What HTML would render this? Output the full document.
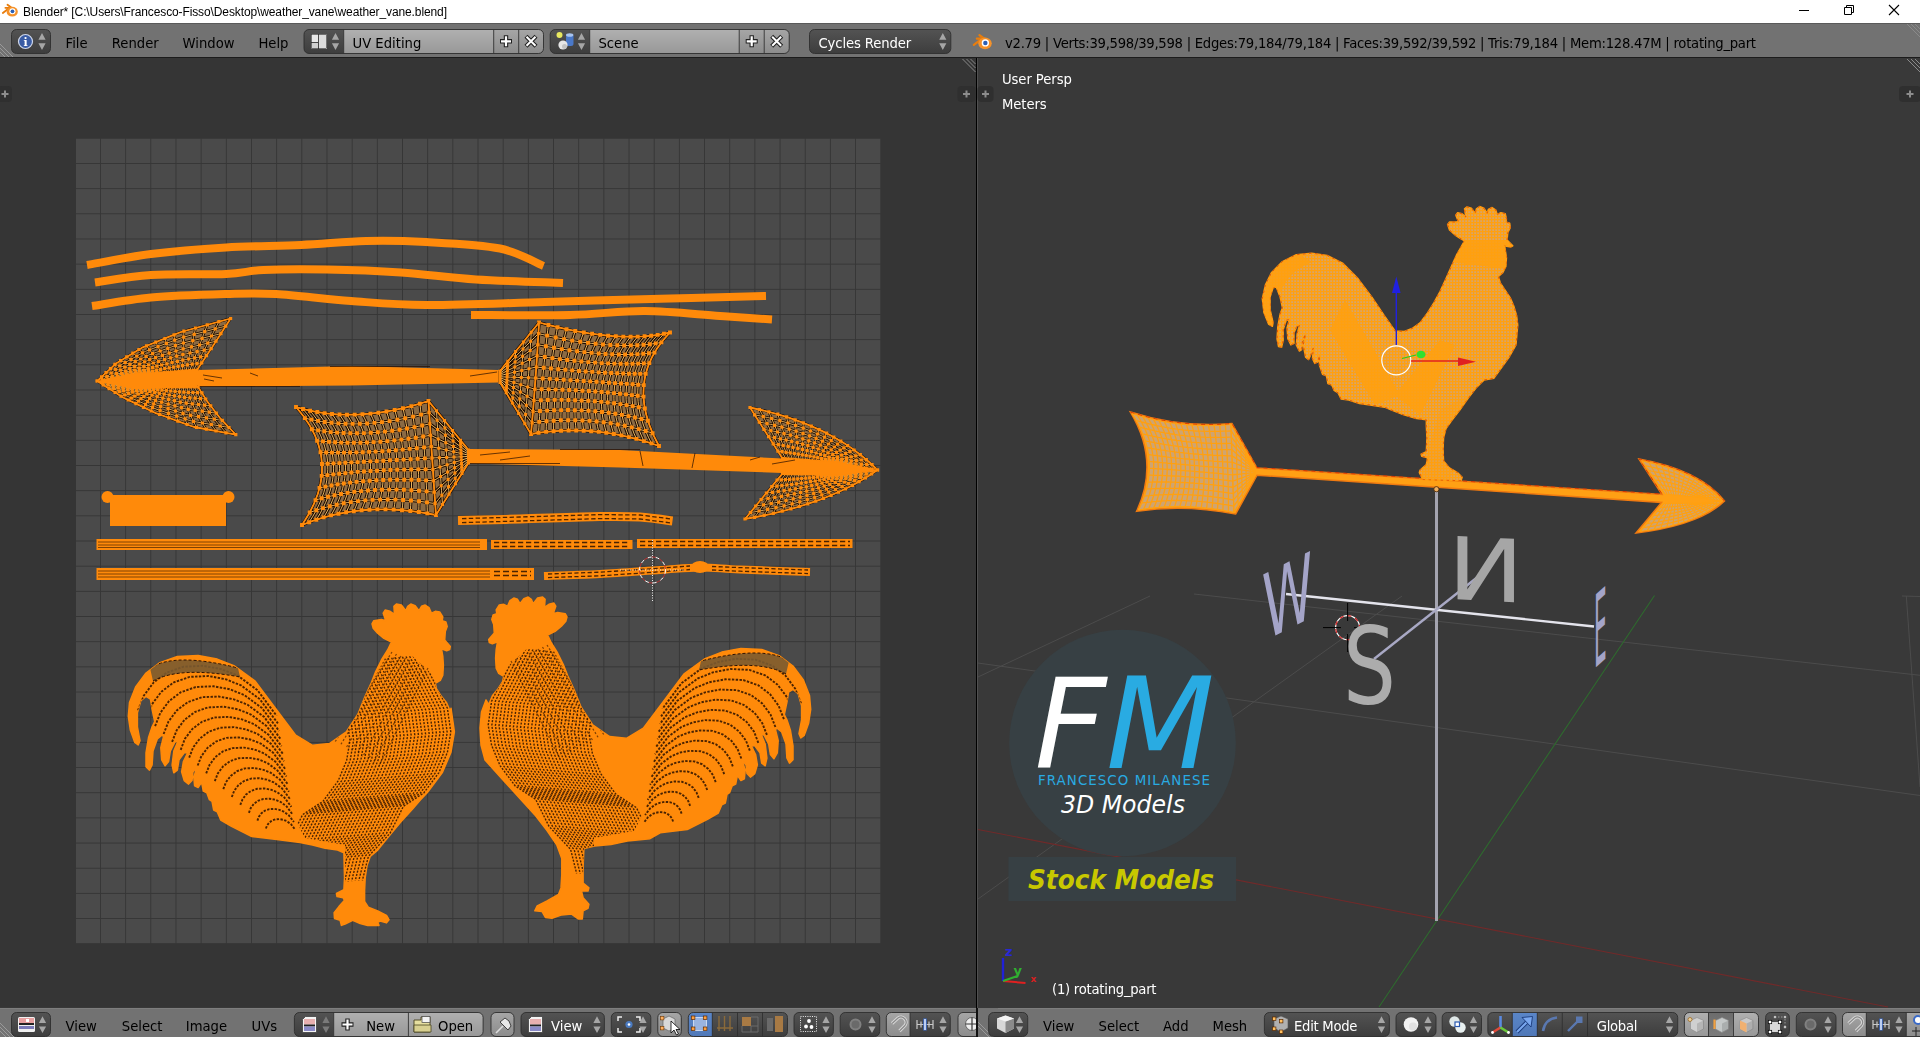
<!DOCTYPE html>
<html><head><meta charset="utf-8"><title>Blender</title>
<style>
html,body{margin:0;padding:0;}
body{width:1920px;height:1037px;overflow:hidden;background:#393939;position:relative;font-family:"DejaVu Sans","Liberation Sans",sans-serif;}
.abs{position:absolute;}
#title{left:0;top:0;width:1920px;height:23px;background:#fff;}
#title .t{position:absolute;left:23px;top:3px;font:12px "Liberation Sans",sans-serif;color:#000;white-space:nowrap;letter-spacing:0.1px}
.hdr{background:#727272;}
.lbl{position:absolute;color:#000;font-size:15px;white-space:nowrap;line-height:24px;letter-spacing:-0.75px;}
.wl{position:absolute;color:#fff;font-size:14px;white-space:nowrap;letter-spacing:-0.55px;}
.btn{position:absolute;height:23px;box-sizing:border-box;border:1px solid #2e2e2e;}
.dk{background:linear-gradient(#505050,#3e3e3e);}
.lt{background:linear-gradient(#a9a9a9,#949494);}
.md{background:linear-gradient(#a0a0a0,#8a8a8a);}
svg{position:absolute;left:0;top:0;}
</style></head><body>

<div id="title" class="abs"></div>
<div class="abs hdr" style="left:0;top:23px;width:1920px;height:34px;border-top:1px solid #5a5a5a;box-sizing:border-box"></div>
<div class="abs" style="left:0;top:57px;width:1920px;height:1px;background:#1c1c1c"></div>
<div class="abs hdr" style="left:0;top:1008px;width:976px;height:29px;"></div>
<div class="abs hdr" style="left:978px;top:1008px;width:942px;height:29px;"></div>
<div class="abs" style="left:0;top:1008px;width:1920px;height:1px;background:#7e7e7e"></div>
<div class="abs" style="left:0;top:58px;width:976px;height:949px;background:#353535"></div>
<div class="abs" style="left:976px;top:58px;width:1px;height:979px;background:#000"></div>
<div class="abs" style="left:977px;top:58px;width:1px;height:979px;background:#505050"></div>
<svg width="1920" height="1037" viewBox="0 0 1920 1037">
<defs>
<pattern id="grid" x="74.8" y="137.8" width="25.17" height="25.17" patternUnits="userSpaceOnUse">
<rect width="25.17" height="25.17" fill="#4a4a4a"/><path d="M0.5 0V25.17M0 0.5H25.17" stroke="#363636" stroke-width="1"/></pattern>
<pattern id="mesh" width="8" height="11" patternUnits="userSpaceOnUse">
<rect width="8" height="11" fill="#8a6a44"/>
<path d="M1.5 0V11M0 1.5H8" stroke="#2a1200" stroke-width="3"/>
<path d="M1.5 0V11M0 1.5H8" stroke="#ffb84a" stroke-width="1"/>
<rect x="0" y="0" width="3.4" height="3.4" fill="#FF8A0A"/></pattern>
<pattern id="mesh2" width="6" height="7" patternUnits="userSpaceOnUse" patternTransform="skewX(-30)">
<rect width="6" height="7" fill="#8a6a44"/>
<path d="M1.5 0V7M0 1.5H6" stroke="#2a1200" stroke-width="2.6"/>
<path d="M1.5 0V7M0 1.5H6" stroke="#ffa030" stroke-width="1.2"/>
<rect x="0" y="0" width="3.2" height="3.2" fill="#FF8A0A"/></pattern>
<pattern id="mesh3" width="6" height="7" patternUnits="userSpaceOnUse" patternTransform="skewX(30)">
<rect width="6" height="7" fill="#8a6a44"/>
<path d="M1.5 0V7M0 1.5H6" stroke="#2a1200" stroke-width="2.6"/>
<path d="M1.5 0V7M0 1.5H6" stroke="#ffa030" stroke-width="1.2"/>
<rect x="0" y="0" width="3.2" height="3.2" fill="#FF8A0A"/></pattern>
<pattern id="speck" width="4.5" height="3.2" patternUnits="userSpaceOnUse" patternTransform="rotate(55)">
<rect x="0" y="0" width="2.6" height="1.1" fill="#2a1000"/></pattern>
<pattern id="speck2" width="3.6" height="4.4" patternUnits="userSpaceOnUse" patternTransform="rotate(-20)">
<rect x="0" y="0" width="2.2" height="1.1" fill="#2a1000"/></pattern>
<pattern id="m3d" width="3" height="3" patternUnits="userSpaceOnUse">
<rect width="3" height="3" fill="#d8a468"/><path d="M0.5 0V3M0 0.5H3" stroke="#ffa010" stroke-width="1.5"/></pattern>
</defs>
<rect x="76" y="138" width="805" height="805.5" fill="url(#grid)"/>
<path d="M87 265C97.7 263.2 127.8 256.9 151 254C174.2 251.1 201.0 249.0 226 247.5C251.0 246.0 277.7 246.1 301 245C324.3 243.9 345.2 241.5 366 241C386.8 240.5 403.7 240.8 426 242C448.3 243.2 480.4 244.5 500 248.5C519.6 252.5 536.2 263.1 543.5 266" fill="none" stroke="#FF8A0A" stroke-width="8" stroke-linejoin="round" />
<path d="M95 282.5C104.3 281.2 129.2 276.4 151 275C172.8 273.6 207.2 274.8 226 274C244.8 273.2 246.8 270.8 263.5 270C280.2 269.2 303.1 269.1 326 269.5C348.9 269.9 376.0 270.8 401 272.5C426.0 274.2 449.0 277.8 476 279.5C503.0 281.2 548.5 282.4 563 283" fill="none" stroke="#FF8A0A" stroke-width="8" stroke-linejoin="round" />
<path d="M92 306C101.8 304.6 128.7 299.5 151 297.5C173.3 295.5 205.2 294.6 226 294C246.8 293.4 255.2 292.8 276 294C296.8 295.2 326.0 299.2 351 301C376.0 302.8 393.7 304.8 426 305C458.3 305.2 504.3 303.1 545 302C585.7 300.9 633.2 299.5 670 298.5C706.8 297.5 750.0 296.4 766 296" fill="none" stroke="#FF8A0A" stroke-width="8" stroke-linejoin="round" />
<path d="M471 315C487.5 315.0 541.0 315.7 570 315C599.0 314.3 620.0 310.8 645 311C670.0 311.2 698.8 314.6 720 316C741.2 317.4 763.3 318.9 772 319.5" fill="none" stroke="#FF8A0A" stroke-width="8" stroke-linejoin="round" />
<polygon points="196,370 351,366 498.5,370 500,376 498.5,382.5 351,385.5 196,386.5" fill="#FF8A0A"/>
<polygon points="97.2,381.0 103.5,375.1 109.7,369.3 116.0,363.4 124.7,358.2 133.3,352.9 142.0,347.7 155.0,342.5 168.0,337.2 181.0,332.0 197.5,327.5 214.1,323.0 230.6,318.5 230.6,318.5 227.8,322.9 224.9,327.3 222.1,331.8 219.3,336.2 216.4,340.6 213.6,345.0 210.8,349.2 208.1,353.3 205.3,357.5 202.5,361.7 199.8,365.8 197.0,370.0 197.0,370.0 191.8,370.4 186.7,370.8 181.5,371.2 176.3,371.7 171.2,372.1 166.0,372.5 160.8,372.9 155.7,373.3 150.5,373.8 145.3,374.2 140.2,374.6 135.0,375.0 135.0,375.0 131.8,375.5 128.7,376.0 125.5,376.5 122.4,377.0 119.2,377.5 116.1,378.0 113.0,378.5 109.8,379.0 106.7,379.5 103.5,380.0 100.4,380.5 97.2,381.0" fill="#8a6a44"/><defs><path id="ms1" d="M97.2 381.0L99.9 380.6L102.6 380.1L105.3 379.7L108.0 379.3L110.7 378.9L113.4 378.4L116.1 378.0L118.8 377.6L121.5 377.1L124.2 376.7L126.9 376.3L129.6 375.9L132.3 375.4L135.0 375.0M101.6 376.9L104.3 376.7L106.9 376.6L109.6 376.4L112.2 376.3L114.8 376.1L117.5 376.0L120.1 375.8L122.8 375.7L125.4 375.5L128.1 375.3L130.7 375.2L133.4 375.0L136.0 374.9L138.6 374.7M106.0 372.7L108.6 372.9L111.2 373.0L113.8 373.1L116.4 373.3L119.0 373.4L121.6 373.5L124.1 373.7L126.7 373.8L129.3 373.9L131.9 374.0L134.5 374.1L137.1 374.2L139.7 374.3L142.3 374.4M110.5 368.6L113.0 369.0L115.5 369.4L118.1 369.8L120.6 370.2L123.1 370.7L125.6 371.1L128.2 371.5L130.7 371.9L133.2 372.2L135.8 372.6L138.3 373.0L140.9 373.4L143.4 373.7L145.9 374.1M114.9 364.4L117.4 365.1L119.8 365.8L122.3 366.5L124.8 367.2L127.3 367.9L129.7 368.6L132.2 369.3L134.7 370.0L137.2 370.6L139.6 371.2L142.1 371.9L144.6 372.5L147.1 373.2L149.6 373.8M120.6 360.6L122.9 361.6L125.2 362.5L127.6 363.5L129.9 364.4L132.2 365.4L134.5 366.3L136.9 367.3L139.2 368.2L141.5 369.1L143.9 370.0L146.2 370.9L148.6 371.7L150.9 372.6L153.2 373.5M126.7 356.9L128.9 358.1L131.0 359.3L133.1 360.5L135.3 361.7L137.4 362.9L139.6 364.1L141.7 365.4L143.9 366.5L146.1 367.6L148.2 368.7L150.4 369.9L152.6 371.0L154.7 372.1L156.9 373.2M132.8 353.2L134.8 354.7L136.8 356.1L138.7 357.6L140.7 359.0L142.7 360.5L144.6 361.9L146.6 363.4L148.6 364.8L150.6 366.1L152.6 367.5L154.6 368.9L156.5 370.2L158.5 371.6L160.5 372.9M138.9 349.5L140.7 351.2L142.5 352.9L144.3 354.6L146.1 356.3L147.9 358.0L149.7 359.7L151.5 361.5L153.3 363.0L155.1 364.6L156.9 366.2L158.7 367.8L160.5 369.4L162.4 371.0L164.2 372.6M146.6 345.9L148.1 347.8L149.6 349.8L151.1 351.7L152.6 353.7L154.1 355.6L155.6 357.6L157.1 359.5L158.6 361.3L160.2 363.2L161.7 365.0L163.2 366.8L164.8 368.7L166.3 370.5L167.8 372.4M155.8 342.2L156.9 344.4L158.0 346.6L159.1 348.8L160.2 351.0L161.3 353.2L162.4 355.4L163.5 357.6L164.6 359.6L165.8 361.7L166.9 363.8L168.1 365.8L169.2 367.9L170.3 370.0L171.5 372.1M164.9 338.5L165.6 340.9L166.4 343.4L167.1 345.8L167.8 348.3L168.5 350.7L169.2 353.2L169.9 355.6L170.6 357.9L171.4 360.2L172.1 362.5L172.9 364.8L173.6 367.1L174.4 369.5L175.1 371.8M174.1 334.8L174.4 337.5L174.7 340.2L175.1 342.9L175.4 345.6L175.7 348.3L176.0 351.0L176.3 353.6L176.7 356.2L177.0 358.7L177.4 361.3L177.7 363.8L178.1 366.4L178.4 368.9L178.8 371.5M183.9 331.2L183.8 334.1L183.7 337.1L183.5 340.0L183.4 343.0L183.3 345.9L183.1 348.8L183.0 351.8L182.9 354.5L182.8 357.3L182.8 360.1L182.7 362.9L182.6 365.6L182.5 368.4L182.4 371.2M195.6 328.0L194.9 331.2L194.2 334.3L193.5 337.5L192.8 340.6L192.1 343.8L191.4 346.9L190.7 350.1L190.0 353.0L189.3 356.0L188.7 359.0L188.0 362.0L187.4 364.9L186.7 367.9L186.1 370.9M207.3 324.9L206.0 328.2L204.7 331.6L203.4 334.9L202.1 338.3L200.9 341.7L199.6 345.0L198.3 348.4L197.1 351.6L195.8 354.7L194.6 357.9L193.4 361.1L192.2 364.2L190.9 367.4L189.7 370.6M218.9 321.7L217.1 325.2L215.2 328.8L213.4 332.4L211.5 336.0L209.7 339.5L207.8 343.1L206.0 346.7L204.2 350.1L202.4 353.4L200.6 356.8L198.8 360.2L197.0 363.6L195.2 366.9L193.4 370.3M230.6 318.5L228.2 322.3L225.7 326.1L223.3 329.9L220.9 333.6L218.5 337.4L216.0 341.2L213.6 345.0L211.2 348.6L208.9 352.1L206.5 355.7L204.1 359.3L201.7 362.9L199.4 366.4L197.0 370.0M97.2 381.0L99.4 378.9L101.6 376.9L103.8 374.8L106.0 372.7L108.3 370.6L110.5 368.6L112.7 366.5L114.9 364.4L117.5 362.5L120.6 360.6L123.6 358.8L126.7 356.9L129.8 355.1L132.8 353.2L135.9 351.4L138.9 349.5L142.0 347.7L146.6 345.9L151.2 344.0L155.8 342.2L160.4 340.3L164.9 338.5L169.5 336.6L174.1 334.8L178.7 332.9L183.9 331.2L189.8 329.6L195.6 328.0L201.4 326.4L207.3 324.9L213.1 323.3L218.9 321.7L224.8 320.1L230.6 318.5M102.6 380.1L104.8 378.4L106.9 376.6L109.1 374.8L111.2 373.0L113.4 371.2L115.5 369.4L117.7 367.6L119.8 365.8L122.4 364.1L125.2 362.5L128.1 360.9L131.0 359.3L133.9 357.7L136.8 356.1L139.6 354.5L142.5 352.9L145.4 351.4L149.6 349.8L153.8 348.2L158.0 346.6L162.2 345.0L166.4 343.4L170.5 341.8L174.7 340.2L178.9 338.6L183.7 337.1L188.9 335.7L194.2 334.3L199.4 333.0L204.7 331.6L210.0 330.2L215.2 328.8L220.5 327.4L225.7 326.1M108.0 379.3L110.1 377.8L112.2 376.3L114.3 374.8L116.4 373.3L118.5 371.7L120.6 370.2L122.7 368.7L124.8 367.2L127.2 365.8L129.9 364.4L132.6 363.1L135.3 361.7L138.0 360.4L140.7 359.0L143.4 357.7L146.1 356.3L148.8 355.0L152.6 353.7L156.4 352.3L160.2 351.0L164.0 349.6L167.8 348.3L171.6 346.9L175.4 345.6L179.2 344.2L183.4 343.0L188.1 341.8L192.8 340.6L197.5 339.5L202.1 338.3L206.8 337.1L211.5 336.0L216.2 334.8L220.9 333.6M113.4 378.4L115.4 377.2L117.5 376.0L119.5 374.7L121.6 373.5L123.6 372.3L125.6 371.1L127.7 369.8L129.7 368.6L132.0 367.4L134.5 366.3L137.1 365.2L139.6 364.1L142.1 363.0L144.6 361.9L147.2 360.8L149.7 359.7L152.2 358.7L155.6 357.6L159.0 356.5L162.4 355.4L165.8 354.3L169.2 353.2L172.6 352.1L176.0 351.0L179.4 349.9L183.1 348.8L187.3 347.9L191.4 346.9L195.5 346.0L199.6 345.0L203.7 344.1L207.8 343.1L211.9 342.2L216.0 341.2M118.8 377.6L120.8 376.6L122.8 375.7L124.8 374.7L126.7 373.8L128.7 372.8L130.7 371.9L132.7 370.9L134.7 370.0L136.8 369.0L139.2 368.2L141.5 367.3L143.9 366.5L146.2 365.6L148.6 364.8L150.9 363.9L153.3 363.0L155.6 362.2L158.6 361.3L161.6 360.5L164.6 359.6L167.6 358.8L170.6 357.9L173.6 357.1L176.7 356.2L179.7 355.3L182.9 354.5L186.5 353.8L190.0 353.0L193.5 352.3L197.1 351.6L200.6 350.8L204.2 350.1L207.7 349.3L211.2 348.6M124.2 376.7L126.1 376.0L128.1 375.3L130.0 374.7L131.9 374.0L133.9 373.3L135.8 372.6L137.7 371.9L139.6 371.2L141.7 370.6L143.9 370.0L146.0 369.3L148.2 368.7L150.4 368.1L152.6 367.5L154.7 366.9L156.9 366.2L159.1 365.6L161.7 365.0L164.3 364.4L166.9 363.8L169.5 363.1L172.1 362.5L174.7 361.9L177.4 361.3L180.0 360.7L182.8 360.1L185.7 359.5L188.7 359.0L191.7 358.4L194.6 357.9L197.6 357.4L200.6 356.8L203.5 356.3L206.5 355.7M129.6 375.9L131.5 375.4L133.4 375.0L135.2 374.6L137.1 374.2L139.0 373.8L140.9 373.4L142.7 372.9L144.6 372.5L146.6 372.1L148.6 371.7L150.6 371.4L152.6 371.0L154.5 370.6L156.5 370.2L158.5 369.8L160.5 369.4L162.5 369.1L164.8 368.7L167.0 368.3L169.2 367.9L171.4 367.5L173.6 367.1L175.8 366.8L178.1 366.4L180.3 366.0L182.6 365.6L185.0 365.3L187.4 364.9L189.8 364.6L192.2 364.2L194.6 363.9L197.0 363.6L199.3 363.2L201.7 362.9M135.0 375.0L136.8 374.9L138.6 374.7L140.5 374.6L142.3 374.4L144.1 374.3L145.9 374.1L147.8 374.0L149.6 373.8L151.4 373.7L153.2 373.5L155.1 373.4L156.9 373.2L158.7 373.1L160.5 372.9L162.4 372.8L164.2 372.6L166.0 372.5L167.8 372.4L169.6 372.2L171.5 372.1L173.3 371.9L175.1 371.8L176.9 371.6L178.8 371.5L180.6 371.3L182.4 371.2L184.2 371.0L186.1 370.9L187.9 370.7L189.7 370.6L191.5 370.4L193.4 370.3L195.2 370.1L197.0 370.0"/></defs><use href="#ms1" fill="none" stroke="#1c0a00" stroke-width="2.6"/><use href="#ms1" fill="none" stroke="#ffcc70" stroke-width="0.8"/><polygon points="97.2,381.0 103.5,375.1 109.7,369.3 116.0,363.4 124.7,358.2 133.3,352.9 142.0,347.7 155.0,342.5 168.0,337.2 181.0,332.0 197.5,327.5 214.1,323.0 230.6,318.5 230.6,318.5 227.8,322.9 224.9,327.3 222.1,331.8 219.3,336.2 216.4,340.6 213.6,345.0 210.8,349.2 208.1,353.3 205.3,357.5 202.5,361.7 199.8,365.8 197.0,370.0 197.0,370.0 191.8,370.4 186.7,370.8 181.5,371.2 176.3,371.7 171.2,372.1 166.0,372.5 160.8,372.9 155.7,373.3 150.5,373.8 145.3,374.2 140.2,374.6 135.0,375.0 135.0,375.0 131.8,375.5 128.7,376.0 125.5,376.5 122.4,377.0 119.2,377.5 116.1,378.0 113.0,378.5 109.8,379.0 106.7,379.5 103.5,380.0 100.4,380.5 97.2,381.0" fill="none" stroke="#FF8A0A" stroke-width="1.8" stroke-linejoin="round"/><path d="M97.2 381.0h0M102.6 380.1h0M108.0 379.3h0M113.4 378.4h0M118.8 377.6h0M124.2 376.7h0M129.6 375.9h0M135.0 375.0h0M101.6 376.9h0M106.9 376.6h0M112.2 376.3h0M117.5 376.0h0M122.8 375.7h0M128.1 375.3h0M133.4 375.0h0M138.6 374.7h0M106.0 372.7h0M111.2 373.0h0M116.4 373.3h0M121.6 373.5h0M126.7 373.8h0M131.9 374.0h0M137.1 374.2h0M142.3 374.4h0M110.5 368.6h0M115.5 369.4h0M120.6 370.2h0M125.6 371.1h0M130.7 371.9h0M135.8 372.6h0M140.9 373.4h0M145.9 374.1h0M114.9 364.4h0M119.8 365.8h0M124.8 367.2h0M129.7 368.6h0M134.7 370.0h0M139.6 371.2h0M144.6 372.5h0M149.6 373.8h0M120.6 360.6h0M125.2 362.5h0M129.9 364.4h0M134.5 366.3h0M139.2 368.2h0M143.9 370.0h0M148.6 371.7h0M153.2 373.5h0M126.7 356.9h0M131.0 359.3h0M135.3 361.7h0M139.6 364.1h0M143.9 366.5h0M148.2 368.7h0M152.6 371.0h0M156.9 373.2h0M132.8 353.2h0M136.8 356.1h0M140.7 359.0h0M144.6 361.9h0M148.6 364.8h0M152.6 367.5h0M156.5 370.2h0M160.5 372.9h0M138.9 349.5h0M142.5 352.9h0M146.1 356.3h0M149.7 359.7h0M153.3 363.0h0M156.9 366.2h0M160.5 369.4h0M164.2 372.6h0M146.6 345.9h0M149.6 349.8h0M152.6 353.7h0M155.6 357.6h0M158.6 361.3h0M161.7 365.0h0M164.8 368.7h0M167.8 372.4h0M155.8 342.2h0M158.0 346.6h0M160.2 351.0h0M162.4 355.4h0M164.6 359.6h0M166.9 363.8h0M169.2 367.9h0M171.5 372.1h0M164.9 338.5h0M166.4 343.4h0M167.8 348.3h0M169.2 353.2h0M170.6 357.9h0M172.1 362.5h0M173.6 367.1h0M175.1 371.8h0M174.1 334.8h0M174.7 340.2h0M175.4 345.6h0M176.0 351.0h0M176.7 356.2h0M177.4 361.3h0M178.1 366.4h0M178.8 371.5h0M183.9 331.2h0M183.7 337.1h0M183.4 343.0h0M183.1 348.8h0M182.9 354.5h0M182.8 360.1h0M182.6 365.6h0M182.4 371.2h0M195.6 328.0h0M194.2 334.3h0M192.8 340.6h0M191.4 346.9h0M190.0 353.0h0M188.7 359.0h0M187.4 364.9h0M186.1 370.9h0M207.3 324.9h0M204.7 331.6h0M202.1 338.3h0M199.6 345.0h0M197.1 351.6h0M194.6 357.9h0M192.2 364.2h0M189.7 370.6h0M218.9 321.7h0M215.2 328.8h0M211.5 336.0h0M207.8 343.1h0M204.2 350.1h0M200.6 356.8h0M197.0 363.6h0M193.4 370.3h0M230.6 318.5h0M225.7 326.1h0M220.9 333.6h0M216.0 341.2h0M211.2 348.6h0M206.5 355.7h0M201.7 362.9h0M197.0 370.0h0" fill="none" stroke="#FF8A0A" stroke-width="3.2" stroke-linecap="square"/>
<polygon points="97.2,381.0 105.6,386.4 114.1,391.8 122.5,397.2 133.3,402.4 144.2,407.6 155.0,412.8 168.0,417.5 181.0,422.3 194.0,427.0 207.9,429.5 221.9,432.1 235.8,434.6 235.8,434.6 231.9,430.5 227.9,426.3 223.9,422.1 220.0,418.0 216.8,413.8 213.5,409.5 210.2,405.2 207.0,401.0 204.8,397.4 202.5,393.9 200.2,390.4 198.0,386.8 198.0,386.8 192.8,386.9 187.5,386.9 182.2,387.0 177.0,387.0 171.8,387.1 166.5,387.1 161.2,387.2 156.0,387.3 150.8,387.3 145.5,387.4 140.2,387.4 135.0,387.5 135.0,387.5 131.8,387.0 128.7,386.4 125.5,385.9 122.4,385.3 119.2,384.8 116.1,384.2 113.0,383.7 109.8,383.2 106.7,382.6 103.5,382.1 100.4,381.5 97.2,381.0" fill="#8a6a44"/><defs><path id="ms2" d="M97.2 381.0L99.9 381.5L102.6 381.9L105.3 382.4L108.0 382.9L110.7 383.3L113.4 383.8L116.1 384.2L118.8 384.7L121.5 385.2L124.2 385.6L126.9 386.1L129.6 386.6L132.3 387.0L135.0 387.5M103.2 384.8L105.7 385.0L108.2 385.2L110.7 385.4L113.1 385.5L115.7 385.7L118.2 385.9L120.7 386.1L123.3 386.2L125.8 386.4L128.4 386.6L131.0 386.8L133.5 387.0L136.1 387.2L138.7 387.5M109.1 388.6L111.4 388.5L113.7 388.4L116.0 388.3L118.3 388.2L120.6 388.1L123.0 388.0L125.4 387.9L127.7 387.8L130.1 387.7L132.5 387.6L135.0 387.5L137.5 387.5L139.9 387.5L142.4 387.4M115.1 392.4L117.2 392.0L119.3 391.7L121.4 391.3L123.4 390.9L125.6 390.5L127.8 390.1L130.0 389.7L132.2 389.3L134.4 388.9L136.7 388.6L139.1 388.3L141.4 388.0L143.8 387.7L146.1 387.4M121.0 396.2L122.9 395.6L124.8 394.9L126.7 394.2L128.6 393.6L130.5 392.9L132.6 392.2L134.6 391.5L136.7 390.8L138.7 390.1L140.9 389.5L143.1 389.0L145.3 388.4L147.6 387.9L149.8 387.3M128.2 400.0L129.8 399.0L131.4 398.1L133.1 397.1L134.7 396.2L136.3 395.2L138.1 394.2L139.9 393.3L141.7 392.3L143.4 391.3L145.4 390.5L147.4 389.7L149.5 388.9L151.5 388.1L153.5 387.3M135.9 403.6L137.2 402.4L138.4 401.2L139.7 400.0L141.0 398.7L142.4 397.5L143.9 396.3L145.4 395.0L146.9 393.8L148.3 392.5L150.0 391.4L151.8 390.4L153.6 389.3L155.4 388.3L157.2 387.3M143.5 407.3L144.5 405.8L145.5 404.3L146.4 402.8L147.4 401.3L148.4 399.8L149.6 398.3L150.8 396.8L152.0 395.2L153.3 393.7L154.7 392.3L156.3 391.1L157.8 389.8L159.4 388.5L160.9 387.2M151.2 411.0L151.8 409.2L152.5 407.4L153.1 405.7L153.7 403.9L154.5 402.1L155.4 400.3L156.3 398.5L157.2 396.7L158.2 394.9L159.3 393.3L160.7 391.7L162.0 390.2L163.3 388.7L164.6 387.2M159.6 414.5L159.9 412.4L160.1 410.4L160.4 408.4L160.6 406.4L161.0 404.3L161.6 402.2L162.2 400.2L162.8 398.1L163.3 396.0L164.2 394.2L165.2 392.4L166.3 390.6L167.3 388.9L168.4 387.1M168.8 417.8L168.6 415.5L168.4 413.3L168.3 411.0L168.1 408.7L168.0 406.4L168.2 404.1L168.4 401.7L168.6 399.4L168.8 397.1L169.3 395.0L170.0 393.0L170.7 391.0L171.4 389.1L172.1 387.1M177.9 421.2L177.3 418.6L176.7 416.1L176.1 413.6L175.5 411.0L175.1 408.5L174.9 405.9L174.7 403.3L174.4 400.7L174.2 398.2L174.4 395.8L174.7 393.6L175.1 391.4L175.4 389.2L175.8 387.0M187.1 424.5L186.1 421.7L185.1 418.9L184.0 416.2L183.0 413.4L182.1 410.6L181.5 407.7L180.9 404.9L180.3 402.1L179.7 399.2L179.5 396.7L179.5 394.3L179.5 391.8L179.5 389.4L179.5 387.0M196.5 427.4L195.0 424.4L193.5 421.4L192.0 418.4L190.6 415.4L189.2 412.4L188.2 409.4L187.2 406.3L186.2 403.2L185.2 400.2L184.6 397.4L184.3 394.8L183.9 392.2L183.5 389.6L183.2 387.0M206.3 429.2L204.3 426.1L202.4 423.0L200.4 419.8L198.5 416.7L196.7 413.5L195.2 410.3L193.8 407.1L192.3 403.9L190.9 400.7L189.9 397.8L189.1 395.1L188.4 392.4L187.6 389.6L186.9 386.9M216.1 431.0L213.7 427.7L211.3 424.5L208.8 421.2L206.4 417.9L204.2 414.6L202.3 411.2L200.4 407.9L198.5 404.5L196.6 401.2L195.2 398.2L194.0 395.4L192.9 392.5L191.7 389.7L190.6 386.9M226.0 432.8L223.1 429.4L220.1 426.0L217.2 422.6L214.3 419.1L211.6 415.7L209.3 412.2L206.9 408.7L204.6 405.2L202.2 401.7L200.4 398.6L198.9 395.6L197.4 392.7L195.8 389.8L194.3 386.8M235.8 434.6L232.4 431.0L229.0 427.5L225.6 423.9L222.3 420.4L219.1 416.8L216.3 413.1L213.5 409.5L210.7 405.9L207.9 402.2L205.7 399.0L203.8 395.9L201.9 392.9L199.9 389.8L198.0 386.8M97.2 381.0L100.2 382.9L103.2 384.8L106.1 386.7L109.1 388.6L112.1 390.5L115.1 392.4L118.0 394.3L121.0 396.2L124.4 398.1L128.2 400.0L132.1 401.8L135.9 403.6L139.7 405.5L143.5 407.3L147.4 409.1L151.2 411.0L155.0 412.8L159.6 414.5L164.2 416.1L168.8 417.8L173.4 419.5L177.9 421.2L182.5 422.8L187.1 424.5L191.7 426.2L196.5 427.4L201.4 428.3L206.3 429.2L211.2 430.1L216.1 431.0L221.0 431.9L226.0 432.8L230.9 433.7L235.8 434.6M102.6 381.9L105.4 383.6L108.2 385.2L110.9 386.8L113.7 388.4L116.5 390.0L119.3 391.7L122.0 393.3L124.8 394.9L127.9 396.5L131.4 398.1L134.9 399.6L138.4 401.2L142.0 402.7L145.5 404.3L149.0 405.9L152.5 407.4L156.0 409.0L160.1 410.4L164.3 411.8L168.4 413.3L172.6 414.7L176.7 416.1L180.9 417.5L185.1 418.9L189.2 420.4L193.5 421.4L198.0 422.2L202.4 423.0L206.8 423.7L211.3 424.5L215.7 425.2L220.1 426.0L224.6 426.7L229.0 427.5M108.0 382.9L110.6 384.2L113.1 385.5L115.7 386.9L118.3 388.2L120.9 389.6L123.4 390.9L126.0 392.2L128.6 393.6L131.5 394.9L134.7 396.2L137.8 397.5L141.0 398.7L144.2 400.0L147.4 401.3L150.6 402.6L153.7 403.9L156.9 405.2L160.6 406.4L164.4 407.5L168.1 408.7L171.8 409.9L175.5 411.0L179.3 412.2L183.0 413.4L186.7 414.6L190.6 415.4L194.5 416.1L198.5 416.7L202.5 417.3L206.4 417.9L210.4 418.5L214.3 419.1L218.3 419.8L222.3 420.4M113.4 383.8L115.8 384.8L118.2 385.9L120.6 386.9L123.0 388.0L125.4 389.0L127.8 390.1L130.2 391.1L132.6 392.2L135.2 393.2L138.1 394.2L141.0 395.3L143.9 396.3L146.7 397.3L149.6 398.3L152.5 399.3L155.4 400.3L158.3 401.3L161.6 402.2L164.9 403.2L168.2 404.1L171.5 405.0L174.9 405.9L178.2 406.8L181.5 407.7L184.8 408.7L188.2 409.4L191.7 409.8L195.2 410.3L198.8 410.8L202.3 411.2L205.8 411.7L209.3 412.2L212.8 412.7L216.3 413.1M118.8 384.7L121.0 385.5L123.3 386.2L125.5 387.0L127.7 387.8L130.0 388.5L132.2 389.3L134.4 390.1L136.7 390.8L139.1 391.6L141.7 392.3L144.3 393.0L146.9 393.8L149.4 394.5L152.0 395.2L154.6 396.0L157.2 396.7L159.8 397.4L162.8 398.1L165.7 398.8L168.6 399.4L171.5 400.1L174.4 400.7L177.4 401.4L180.3 402.1L183.2 402.7L186.2 403.2L189.3 403.6L192.3 403.9L195.4 404.2L198.5 404.5L201.5 404.9L204.6 405.2L207.7 405.5L210.7 405.9M124.2 385.6L126.3 386.1L128.4 386.6L130.4 387.1L132.5 387.6L134.6 388.1L136.7 388.6L138.8 389.0L140.9 389.5L143.1 390.0L145.4 390.5L147.7 390.9L150.0 391.4L152.4 391.9L154.7 392.3L157.0 392.8L159.3 393.3L161.7 393.7L164.2 394.2L166.8 394.6L169.3 395.0L171.8 395.4L174.4 395.8L176.9 396.2L179.5 396.7L182.0 397.1L184.6 397.4L187.2 397.6L189.9 397.8L192.5 398.0L195.2 398.2L197.8 398.4L200.4 398.6L203.1 398.8L205.7 399.0M129.6 386.6L131.6 386.8L133.5 387.0L135.5 387.3L137.5 387.5L139.4 387.7L141.4 388.0L143.4 388.2L145.3 388.4L147.4 388.7L149.5 388.9L151.6 389.1L153.6 389.3L155.7 389.6L157.8 389.8L159.9 390.0L162.0 390.2L164.1 390.4L166.3 390.6L168.5 390.8L170.7 391.0L172.9 391.2L175.1 391.4L177.3 391.6L179.5 391.8L181.7 392.0L183.9 392.2L186.1 392.3L188.4 392.4L190.6 392.4L192.9 392.5L195.1 392.6L197.4 392.7L199.6 392.8L201.9 392.9M135.0 387.5L136.9 387.5L138.7 387.5L140.6 387.4L142.4 387.4L144.3 387.4L146.1 387.4L148.0 387.4L149.8 387.3L151.7 387.3L153.5 387.3L155.4 387.3L157.2 387.3L159.1 387.2L160.9 387.2L162.8 387.2L164.6 387.2L166.5 387.1L168.4 387.1L170.2 387.1L172.1 387.1L173.9 387.1L175.8 387.0L177.6 387.0L179.5 387.0L181.3 387.0L183.2 387.0L185.0 386.9L186.9 386.9L188.7 386.9L190.6 386.9L192.4 386.9L194.3 386.8L196.1 386.8L198.0 386.8"/></defs><use href="#ms2" fill="none" stroke="#1c0a00" stroke-width="2.6"/><use href="#ms2" fill="none" stroke="#ffcc70" stroke-width="0.8"/><polygon points="97.2,381.0 105.6,386.4 114.1,391.8 122.5,397.2 133.3,402.4 144.2,407.6 155.0,412.8 168.0,417.5 181.0,422.3 194.0,427.0 207.9,429.5 221.9,432.1 235.8,434.6 235.8,434.6 231.9,430.5 227.9,426.3 223.9,422.1 220.0,418.0 216.8,413.8 213.5,409.5 210.2,405.2 207.0,401.0 204.8,397.4 202.5,393.9 200.2,390.4 198.0,386.8 198.0,386.8 192.8,386.9 187.5,386.9 182.2,387.0 177.0,387.0 171.8,387.1 166.5,387.1 161.2,387.2 156.0,387.3 150.8,387.3 145.5,387.4 140.2,387.4 135.0,387.5 135.0,387.5 131.8,387.0 128.7,386.4 125.5,385.9 122.4,385.3 119.2,384.8 116.1,384.2 113.0,383.7 109.8,383.2 106.7,382.6 103.5,382.1 100.4,381.5 97.2,381.0" fill="none" stroke="#FF8A0A" stroke-width="1.8" stroke-linejoin="round"/><path d="M97.2 381.0h0M102.6 381.9h0M108.0 382.9h0M113.4 383.8h0M118.8 384.7h0M124.2 385.6h0M129.6 386.6h0M135.0 387.5h0M103.2 384.8h0M108.2 385.2h0M113.1 385.5h0M118.2 385.9h0M123.3 386.2h0M128.4 386.6h0M133.5 387.0h0M138.7 387.5h0M109.1 388.6h0M113.7 388.4h0M118.3 388.2h0M123.0 388.0h0M127.7 387.8h0M132.5 387.6h0M137.5 387.5h0M142.4 387.4h0M115.1 392.4h0M119.3 391.7h0M123.4 390.9h0M127.8 390.1h0M132.2 389.3h0M136.7 388.6h0M141.4 388.0h0M146.1 387.4h0M121.0 396.2h0M124.8 394.9h0M128.6 393.6h0M132.6 392.2h0M136.7 390.8h0M140.9 389.5h0M145.3 388.4h0M149.8 387.3h0M128.2 400.0h0M131.4 398.1h0M134.7 396.2h0M138.1 394.2h0M141.7 392.3h0M145.4 390.5h0M149.5 388.9h0M153.5 387.3h0M135.9 403.6h0M138.4 401.2h0M141.0 398.7h0M143.9 396.3h0M146.9 393.8h0M150.0 391.4h0M153.6 389.3h0M157.2 387.3h0M143.5 407.3h0M145.5 404.3h0M147.4 401.3h0M149.6 398.3h0M152.0 395.2h0M154.7 392.3h0M157.8 389.8h0M160.9 387.2h0M151.2 411.0h0M152.5 407.4h0M153.7 403.9h0M155.4 400.3h0M157.2 396.7h0M159.3 393.3h0M162.0 390.2h0M164.6 387.2h0M159.6 414.5h0M160.1 410.4h0M160.6 406.4h0M161.6 402.2h0M162.8 398.1h0M164.2 394.2h0M166.3 390.6h0M168.4 387.1h0M168.8 417.8h0M168.4 413.3h0M168.1 408.7h0M168.2 404.1h0M168.6 399.4h0M169.3 395.0h0M170.7 391.0h0M172.1 387.1h0M177.9 421.2h0M176.7 416.1h0M175.5 411.0h0M174.9 405.9h0M174.4 400.7h0M174.4 395.8h0M175.1 391.4h0M175.8 387.0h0M187.1 424.5h0M185.1 418.9h0M183.0 413.4h0M181.5 407.7h0M180.3 402.1h0M179.5 396.7h0M179.5 391.8h0M179.5 387.0h0M196.5 427.4h0M193.5 421.4h0M190.6 415.4h0M188.2 409.4h0M186.2 403.2h0M184.6 397.4h0M183.9 392.2h0M183.2 387.0h0M206.3 429.2h0M202.4 423.0h0M198.5 416.7h0M195.2 410.3h0M192.3 403.9h0M189.9 397.8h0M188.4 392.4h0M186.9 386.9h0M216.1 431.0h0M211.3 424.5h0M206.4 417.9h0M202.3 411.2h0M198.5 404.5h0M195.2 398.2h0M192.9 392.5h0M190.6 386.9h0M226.0 432.8h0M220.1 426.0h0M214.3 419.1h0M209.3 412.2h0M204.6 405.2h0M200.4 398.6h0M197.4 392.7h0M194.3 386.8h0M235.8 434.6h0M229.0 427.5h0M222.3 420.4h0M216.3 413.1h0M210.7 405.9h0M205.7 399.0h0M201.9 392.9h0M198.0 386.8h0" fill="none" stroke="#FF8A0A" stroke-width="3.2" stroke-linecap="square"/>
<polygon points="97,381 135,374 197,369.5 197,387.3 135,388.5" fill="#FF8A0A"/>
<polygon points="539.0,322.5 552.2,325.9 565.0,328.9 577.4,331.4 589.3,333.4 600.9,334.9 612.0,336.0 622.7,336.6 633.0,336.7 642.9,336.4 652.3,335.6 661.4,334.3 670.0,332.5 670.0,332.5 662.7,340.7 656.6,349.1 651.7,357.8 647.9,366.7 645.2,375.8 643.8,385.1 643.4,394.7 644.2,404.5 646.2,414.5 649.3,424.8 653.6,435.3 659.0,446.0 659.0,446.0 648.3,442.4 637.7,439.3 627.0,436.6 616.3,434.4 605.7,432.7 595.0,431.5 584.3,430.7 573.7,430.4 563.0,430.6 552.3,431.3 541.7,432.4 531.0,434.0 531.0,434.0 531.8,424.7 532.6,415.3 533.4,406.0 534.1,396.7 534.8,387.4 535.5,378.1 536.2,368.8 536.8,359.6 537.4,350.3 537.9,341.0 538.5,331.8 539.0,322.5" fill="#8a6a44"/><defs><path id="ms3" d="M539.0 322.5L538.7 328.1L538.4 333.6L538.1 339.2L537.7 344.7L537.4 350.3L537.0 355.8L536.7 361.4L536.3 367.0L535.9 372.6L535.5 378.1L535.1 383.7L534.7 389.3L534.3 394.9L533.8 400.4L533.4 406.0L532.9 411.6L532.5 417.2L532.0 422.8L531.5 428.4L531.0 434.0M548.4 325.0L547.7 330.3L547.1 335.6L546.5 341.0L545.9 346.3L545.3 351.7L544.8 357.0L544.2 362.4L543.7 367.8L543.2 373.1L542.7 378.5L542.2 383.9L541.7 389.3L541.3 394.7L540.9 400.2L540.4 405.6L540.0 411.0L539.6 416.5L539.2 421.9L538.9 427.4L538.5 432.8M557.5 327.2L556.6 332.3L555.7 337.5L554.8 342.6L554.0 347.8L553.2 352.9L552.4 358.1L551.7 363.3L551.0 368.5L550.4 373.7L549.8 378.9L549.2 384.2L548.7 389.4L548.3 394.7L547.8 400.0L547.4 405.3L547.1 410.6L546.8 415.9L546.5 421.2L546.3 426.5L546.1 431.9M566.5 329.2L565.2 334.1L564.0 339.1L562.9 344.1L561.8 349.1L560.8 354.1L559.9 359.1L559.0 364.1L558.2 369.2L557.5 374.3L556.8 379.4L556.2 384.5L555.6 389.6L555.1 394.7L554.7 399.9L554.4 405.1L554.1 410.3L553.9 415.5L553.7 420.7L553.6 425.9L553.6 431.2M575.2 331.0L573.7 335.8L572.2 340.6L570.8 345.4L569.5 350.2L568.3 355.1L567.2 360.0L566.2 364.9L565.3 369.8L564.4 374.8L563.7 379.8L563.0 384.8L562.4 389.8L562.0 394.8L561.6 399.9L561.3 405.0L561.1 410.1L560.9 415.2L560.9 420.3L561.0 425.5L561.1 430.7M583.8 332.5L581.9 337.2L580.2 341.8L578.6 346.5L577.1 351.3L575.7 356.0L574.4 360.8L573.2 365.6L572.2 370.4L571.3 375.3L570.5 380.2L569.8 385.1L569.2 390.0L568.7 395.0L568.4 400.0L568.1 405.0L568.0 410.0L568.0 415.1L568.1 420.2L568.3 425.3L568.6 430.5M592.1 333.8L590.0 338.3L588.0 342.9L586.1 347.5L584.4 352.1L582.9 356.8L581.4 361.5L580.1 366.2L579.0 371.0L578.0 375.8L577.1 380.6L576.4 385.4L575.8 390.3L575.4 395.2L575.1 400.2L574.9 405.1L574.9 410.2L575.0 415.2L575.2 420.2L575.6 425.3L576.2 430.5M600.2 334.9L597.8 339.3L595.6 343.8L593.5 348.3L591.6 352.9L589.9 357.5L588.3 362.1L586.9 366.8L585.7 371.5L584.6 376.2L583.7 381.0L583.0 385.8L582.4 390.7L582.0 395.5L581.7 400.5L581.6 405.4L581.7 410.4L582.0 415.4L582.4 420.5L583.0 425.6L583.7 430.7M608.1 335.7L605.5 340.1L603.0 344.5L600.7 349.0L598.7 353.5L596.8 358.0L595.1 362.6L593.6 367.3L592.2 371.9L591.1 376.7L590.2 381.4L589.4 386.2L588.9 391.0L588.5 395.9L588.3 400.8L588.3 405.8L588.5 410.8L588.9 415.8L589.5 420.9L590.3 426.0L591.2 431.2M615.8 336.3L612.9 340.6L610.3 345.0L607.8 349.5L605.5 354.0L603.5 358.5L601.7 363.1L600.1 367.7L598.7 372.4L597.5 377.1L596.5 381.8L595.8 386.6L595.3 391.5L595.0 396.4L594.9 401.3L595.0 406.3L595.3 411.3L595.8 416.4L596.6 421.5L597.6 426.7L598.8 431.9M623.3 336.6L620.2 341.0L617.3 345.3L614.7 349.8L612.2 354.3L610.1 358.8L608.1 363.4L606.4 368.0L605.0 372.7L603.8 377.5L602.8 382.2L602.1 387.1L601.6 392.0L601.3 396.9L601.3 401.9L601.6 406.9L602.0 412.0L602.7 417.1L603.7 422.3L604.9 427.5L606.3 432.8M630.6 336.7L627.3 341.1L624.2 345.5L621.3 349.9L618.8 354.5L616.5 359.0L614.4 363.6L612.7 368.3L611.2 373.0L609.9 377.8L609.0 382.7L608.3 387.5L607.8 392.5L607.6 397.5L607.7 402.5L608.1 407.6L608.7 412.8L609.6 418.0L610.7 423.3L612.1 428.6L613.8 434.0M637.7 336.6L634.1 341.0L630.8 345.4L627.9 349.9L625.1 354.5L622.7 359.1L620.6 363.8L618.8 368.5L617.2 373.3L616.0 378.2L615.0 383.1L614.4 388.0L614.0 393.1L613.9 398.2L614.1 403.3L614.6 408.5L615.3 413.8L616.4 419.1L617.8 424.5L619.4 429.9L621.4 435.4M644.6 336.3L640.8 340.7L637.3 345.2L634.2 349.8L631.4 354.4L628.8 359.1L626.6 363.8L624.7 368.6L623.2 373.5L621.9 378.5L621.0 383.5L620.4 388.5L620.0 393.7L620.0 398.9L620.4 404.1L621.0 409.5L621.9 414.9L623.2 420.3L624.8 425.8L626.7 431.4L628.9 437.1M651.2 335.7L647.3 340.2L643.6 344.8L640.3 349.4L637.4 354.1L634.8 358.9L632.5 363.8L630.6 368.7L629.0 373.7L627.7 378.8L626.8 383.9L626.3 389.1L626.0 394.4L626.1 399.7L626.6 405.1L627.4 410.6L628.5 416.1L630.0 421.7L631.8 427.4L633.9 433.1L636.4 438.9M657.7 334.9L653.5 339.5L649.8 344.2L646.3 348.9L643.3 353.8L640.6 358.7L638.2 363.6L636.3 368.7L634.7 373.8L633.4 379.0L632.6 384.3L632.1 389.6L631.9 395.1L632.2 400.6L632.7 406.1L633.7 411.8L635.0 417.5L636.7 423.3L638.7 429.1L641.2 435.1L643.9 441.1M664.0 333.8L659.6 338.5L655.7 343.4L652.1 348.3L649.0 353.2L646.2 358.3L643.8 363.4L641.8 368.6L640.2 373.9L639.0 379.3L638.2 384.7L637.8 390.2L637.7 395.8L638.1 401.5L638.8 407.3L640.0 413.1L641.5 419.0L643.4 425.0L645.7 431.0L648.4 437.2L651.5 443.4M670.0 332.5L665.5 337.4L661.4 342.4L657.8 347.4L654.5 352.6L651.7 357.8L649.3 363.1L647.3 368.5L645.7 373.9L644.5 379.5L643.8 385.1L643.4 390.8L643.5 396.6L644.0 402.5L644.9 408.5L646.2 414.5L647.9 420.7L650.1 426.9L652.6 433.2L655.6 439.5L659.0 446.0M539.0 322.5L543.7 323.8L548.4 325.0L553.0 326.1L557.5 327.2L562.0 328.2L566.5 329.2L570.9 330.1L575.2 331.0L579.5 331.8L583.8 332.5L587.9 333.2L592.1 333.8L596.2 334.4L600.2 334.9L604.2 335.3L608.1 335.7L612.0 336.0L615.8 336.3L619.6 336.5L623.3 336.6L627.0 336.7L630.6 336.7L634.2 336.7L637.7 336.6L641.2 336.5L644.6 336.3L647.9 336.0L651.2 335.7L654.5 335.3L657.7 334.9L660.9 334.4L664.0 333.8L667.0 333.2L670.0 332.5M538.4 333.6L542.8 334.6L547.1 335.6L551.4 336.6L555.7 337.5L559.9 338.3L564.0 339.1L568.1 339.9L572.2 340.6L576.2 341.2L580.2 341.8L584.1 342.4L588.0 342.9L591.8 343.4L595.6 343.8L599.3 344.2L603.0 344.5L606.7 344.8L610.3 345.0L613.8 345.2L617.3 345.3L620.8 345.4L624.2 345.5L627.5 345.5L630.8 345.4L634.1 345.3L637.3 345.2L640.5 345.0L643.6 344.8L646.7 344.5L649.8 344.2L652.7 343.8L655.7 343.4L658.6 342.9L661.4 342.4M537.7 344.7L541.8 345.5L545.9 346.3L550.0 347.1L554.0 347.8L557.9 348.4L561.8 349.1L565.7 349.7L569.5 350.2L573.3 350.8L577.1 351.3L580.8 351.7L584.4 352.1L588.0 352.5L591.6 352.9L595.2 353.2L598.7 353.5L602.1 353.7L605.5 354.0L608.9 354.1L612.2 354.3L615.5 354.4L618.8 354.5L622.0 354.5L625.1 354.5L628.3 354.5L631.4 354.4L634.4 354.3L637.4 354.1L640.4 354.0L643.3 353.8L646.1 353.5L649.0 353.2L651.8 352.9L654.5 352.6M537.0 355.8L540.9 356.4L544.8 357.0L548.6 357.6L552.4 358.1L556.2 358.6L559.9 359.1L563.6 359.6L567.2 360.0L570.8 360.4L574.4 360.8L577.9 361.2L581.4 361.5L584.9 361.8L588.3 362.1L591.7 362.4L595.1 362.6L598.4 362.9L601.7 363.1L604.9 363.2L608.1 363.4L611.3 363.5L614.4 363.6L617.5 363.7L620.6 363.8L623.6 363.8L626.6 363.8L629.6 363.8L632.5 363.8L635.4 363.7L638.2 363.6L641.1 363.5L643.8 363.4L646.6 363.3L649.3 363.1M536.3 367.0L540.0 367.4L543.7 367.8L547.4 368.1L551.0 368.5L554.6 368.9L558.2 369.2L561.7 369.5L565.3 369.8L568.7 370.1L572.2 370.4L575.6 370.7L579.0 371.0L582.4 371.2L585.7 371.5L589.0 371.7L592.2 371.9L595.5 372.2L598.7 372.4L601.9 372.5L605.0 372.7L608.1 372.9L611.2 373.0L614.2 373.2L617.2 373.3L620.2 373.4L623.2 373.5L626.1 373.6L629.0 373.7L631.8 373.8L634.7 373.8L637.5 373.9L640.2 373.9L643.0 373.9L645.7 373.9M535.5 378.1L539.1 378.3L542.7 378.5L546.3 378.7L549.8 378.9L553.3 379.2L556.8 379.4L560.2 379.6L563.7 379.8L567.1 380.0L570.5 380.2L573.8 380.4L577.1 380.6L580.4 380.8L583.7 381.0L587.0 381.2L590.2 381.4L593.4 381.6L596.5 381.8L599.7 382.0L602.8 382.2L605.9 382.4L609.0 382.7L612.0 382.9L615.0 383.1L618.0 383.3L621.0 383.5L623.9 383.7L626.8 383.9L629.7 384.1L632.6 384.3L635.4 384.5L638.2 384.7L641.0 384.9L643.8 385.1M534.7 389.3L538.2 389.3L541.7 389.3L545.2 389.4L548.7 389.4L552.2 389.5L555.6 389.6L559.0 389.7L562.4 389.8L565.8 389.9L569.2 390.0L572.5 390.2L575.8 390.3L579.1 390.5L582.4 390.7L585.6 390.9L588.9 391.0L592.1 391.3L595.3 391.5L598.4 391.7L601.6 392.0L604.7 392.2L607.8 392.5L610.9 392.8L614.0 393.1L617.0 393.4L620.0 393.7L623.0 394.0L626.0 394.4L629.0 394.7L631.9 395.1L634.8 395.4L637.7 395.8L640.6 396.2L643.5 396.6M533.8 400.4L537.3 400.3L540.9 400.2L544.3 400.1L547.8 400.0L551.3 399.9L554.7 399.9L558.2 399.9L561.6 399.9L565.0 399.9L568.4 400.0L571.7 400.1L575.1 400.2L578.4 400.3L581.7 400.5L585.0 400.6L588.3 400.8L591.6 401.1L594.9 401.3L598.1 401.6L601.3 401.9L604.5 402.2L607.7 402.5L610.9 402.9L614.1 403.3L617.2 403.7L620.4 404.1L623.5 404.6L626.6 405.1L629.7 405.6L632.7 406.1L635.8 406.7L638.8 407.3L641.9 407.9L644.9 408.5M532.9 411.6L536.5 411.3L540.0 411.0L543.5 410.8L547.1 410.6L550.6 410.4L554.1 410.3L557.6 410.1L561.1 410.1L564.5 410.0L568.0 410.0L571.4 410.1L574.9 410.2L578.3 410.3L581.7 410.4L585.1 410.6L588.5 410.8L591.9 411.0L595.3 411.3L598.7 411.6L602.0 412.0L605.4 412.4L608.7 412.8L612.0 413.3L615.3 413.8L618.6 414.3L621.9 414.9L625.2 415.5L628.5 416.1L631.8 416.8L635.0 417.5L638.3 418.2L641.5 419.0L644.7 419.8L647.9 420.7M532.0 422.8L535.6 422.3L539.2 421.9L542.9 421.5L546.5 421.2L550.1 420.9L553.7 420.7L557.3 420.5L560.9 420.3L564.5 420.3L568.1 420.2L571.7 420.2L575.2 420.2L578.8 420.3L582.4 420.5L585.9 420.7L589.5 420.9L593.1 421.2L596.6 421.5L600.1 421.9L603.7 422.3L607.2 422.8L610.7 423.3L614.3 423.9L617.8 424.5L621.3 425.1L624.8 425.8L628.3 426.6L631.8 427.4L635.3 428.2L638.7 429.1L642.2 430.1L645.7 431.0L649.2 432.1L652.6 433.2M531.0 434.0L534.8 433.4L538.5 432.8L542.3 432.3L546.1 431.9L549.8 431.5L553.6 431.2L557.4 430.9L561.1 430.7L564.9 430.6L568.6 430.5L572.4 430.4L576.2 430.5L579.9 430.6L583.7 430.7L587.5 430.9L591.2 431.2L595.0 431.5L598.8 431.9L602.5 432.3L606.3 432.8L610.1 433.4L613.8 434.0L617.6 434.7L621.4 435.4L625.1 436.2L628.9 437.1L632.6 438.0L636.4 438.9L640.2 440.0L643.9 441.1L647.7 442.2L651.5 443.4L655.2 444.7L659.0 446.0"/></defs><use href="#ms3" fill="none" stroke="#1c0a00" stroke-width="3.0"/><use href="#ms3" fill="none" stroke="#ffcc70" stroke-width="0.9"/><polygon points="539.0,322.5 552.2,325.9 565.0,328.9 577.4,331.4 589.3,333.4 600.9,334.9 612.0,336.0 622.7,336.6 633.0,336.7 642.9,336.4 652.3,335.6 661.4,334.3 670.0,332.5 670.0,332.5 662.7,340.7 656.6,349.1 651.7,357.8 647.9,366.7 645.2,375.8 643.8,385.1 643.4,394.7 644.2,404.5 646.2,414.5 649.3,424.8 653.6,435.3 659.0,446.0 659.0,446.0 648.3,442.4 637.7,439.3 627.0,436.6 616.3,434.4 605.7,432.7 595.0,431.5 584.3,430.7 573.7,430.4 563.0,430.6 552.3,431.3 541.7,432.4 531.0,434.0 531.0,434.0 531.8,424.7 532.6,415.3 533.4,406.0 534.1,396.7 534.8,387.4 535.5,378.1 536.2,368.8 536.8,359.6 537.4,350.3 537.9,341.0 538.5,331.8 539.0,322.5" fill="none" stroke="#FF8A0A" stroke-width="1.8" stroke-linejoin="round"/><path d="M539.0 322.5h0M538.4 333.6h0M537.7 344.7h0M537.0 355.8h0M536.3 367.0h0M535.5 378.1h0M534.7 389.3h0M533.8 400.4h0M532.9 411.6h0M532.0 422.8h0M531.0 434.0h0M548.4 325.0h0M547.1 335.6h0M545.9 346.3h0M544.8 357.0h0M543.7 367.8h0M542.7 378.5h0M541.7 389.3h0M540.9 400.2h0M540.0 411.0h0M539.2 421.9h0M538.5 432.8h0M557.5 327.2h0M555.7 337.5h0M554.0 347.8h0M552.4 358.1h0M551.0 368.5h0M549.8 378.9h0M548.7 389.4h0M547.8 400.0h0M547.1 410.6h0M546.5 421.2h0M546.1 431.9h0M566.5 329.2h0M564.0 339.1h0M561.8 349.1h0M559.9 359.1h0M558.2 369.2h0M556.8 379.4h0M555.6 389.6h0M554.7 399.9h0M554.1 410.3h0M553.7 420.7h0M553.6 431.2h0M575.2 331.0h0M572.2 340.6h0M569.5 350.2h0M567.2 360.0h0M565.3 369.8h0M563.7 379.8h0M562.4 389.8h0M561.6 399.9h0M561.1 410.1h0M560.9 420.3h0M561.1 430.7h0M583.8 332.5h0M580.2 341.8h0M577.1 351.3h0M574.4 360.8h0M572.2 370.4h0M570.5 380.2h0M569.2 390.0h0M568.4 400.0h0M568.0 410.0h0M568.1 420.2h0M568.6 430.5h0M592.1 333.8h0M588.0 342.9h0M584.4 352.1h0M581.4 361.5h0M579.0 371.0h0M577.1 380.6h0M575.8 390.3h0M575.1 400.2h0M574.9 410.2h0M575.2 420.2h0M576.2 430.5h0M600.2 334.9h0M595.6 343.8h0M591.6 352.9h0M588.3 362.1h0M585.7 371.5h0M583.7 381.0h0M582.4 390.7h0M581.7 400.5h0M581.7 410.4h0M582.4 420.5h0M583.7 430.7h0M608.1 335.7h0M603.0 344.5h0M598.7 353.5h0M595.1 362.6h0M592.2 371.9h0M590.2 381.4h0M588.9 391.0h0M588.3 400.8h0M588.5 410.8h0M589.5 420.9h0M591.2 431.2h0M615.8 336.3h0M610.3 345.0h0M605.5 354.0h0M601.7 363.1h0M598.7 372.4h0M596.5 381.8h0M595.3 391.5h0M594.9 401.3h0M595.3 411.3h0M596.6 421.5h0M598.8 431.9h0M623.3 336.6h0M617.3 345.3h0M612.2 354.3h0M608.1 363.4h0M605.0 372.7h0M602.8 382.2h0M601.6 392.0h0M601.3 401.9h0M602.0 412.0h0M603.7 422.3h0M606.3 432.8h0M630.6 336.7h0M624.2 345.5h0M618.8 354.5h0M614.4 363.6h0M611.2 373.0h0M609.0 382.7h0M607.8 392.5h0M607.7 402.5h0M608.7 412.8h0M610.7 423.3h0M613.8 434.0h0M637.7 336.6h0M630.8 345.4h0M625.1 354.5h0M620.6 363.8h0M617.2 373.3h0M615.0 383.1h0M614.0 393.1h0M614.1 403.3h0M615.3 413.8h0M617.8 424.5h0M621.4 435.4h0M644.6 336.3h0M637.3 345.2h0M631.4 354.4h0M626.6 363.8h0M623.2 373.5h0M621.0 383.5h0M620.0 393.7h0M620.4 404.1h0M621.9 414.9h0M624.8 425.8h0M628.9 437.1h0M651.2 335.7h0M643.6 344.8h0M637.4 354.1h0M632.5 363.8h0M629.0 373.7h0M626.8 383.9h0M626.0 394.4h0M626.6 405.1h0M628.5 416.1h0M631.8 427.4h0M636.4 438.9h0M657.7 334.9h0M649.8 344.2h0M643.3 353.8h0M638.2 363.6h0M634.7 373.8h0M632.6 384.3h0M631.9 395.1h0M632.7 406.1h0M635.0 417.5h0M638.7 429.1h0M643.9 441.1h0M664.0 333.8h0M655.7 343.4h0M649.0 353.2h0M643.8 363.4h0M640.2 373.9h0M638.2 384.7h0M637.7 395.8h0M638.8 407.3h0M641.5 419.0h0M645.7 431.0h0M651.5 443.4h0M670.0 332.5h0M661.4 342.4h0M654.5 352.6h0M649.3 363.1h0M645.7 373.9h0M643.8 385.1h0M643.5 396.6h0M644.9 408.5h0M647.9 420.7h0M652.6 433.2h0M659.0 446.0h0" fill="none" stroke="#FF8A0A" stroke-width="3.9" stroke-linecap="square"/>
<polygon points="500.0,371.0 503.2,367.0 506.5,362.9 509.8,358.9 513.0,354.8 516.2,350.8 519.5,346.8 522.8,342.7 526.0,338.7 529.2,334.6 532.5,330.6 535.8,326.5 539.0,322.5 539.0,322.5 538.5,331.8 537.9,341.0 537.4,350.3 536.8,359.6 536.2,368.8 535.5,378.1 534.8,387.4 534.1,396.7 533.4,406.0 532.6,415.3 531.8,424.7 531.0,434.0 531.0,434.0 528.4,429.7 525.8,425.4 523.2,421.1 520.7,416.8 518.1,412.5 515.5,408.2 512.9,404.0 510.3,399.7 507.8,395.4 505.2,391.1 502.6,386.8 500.0,382.5 500.0,382.5 500.0,381.5 500.0,380.6 500.0,379.6 500.0,378.7 500.0,377.7 500.0,376.8 500.0,375.8 500.0,374.8 500.0,373.9 500.0,372.9 500.0,372.0 500.0,371.0" fill="#8a6a44"/><defs><path id="ms4" d="M500.0 371.0L500.0 371.6L500.0 372.1L500.0 372.7L500.0 373.3L500.0 373.9L500.0 374.4L500.0 375.0L500.0 375.6L500.0 376.2L500.0 376.8L500.0 377.3L500.0 377.9L500.0 378.5L500.0 379.1L500.0 379.6L500.0 380.2L500.0 380.8L500.0 381.4L500.0 381.9L500.0 382.5M507.8 361.3L507.7 362.9L507.7 364.4L507.6 366.0L507.5 367.6L507.5 369.2L507.4 370.7L507.3 372.3L507.3 373.9L507.2 375.5L507.1 377.0L507.0 378.6L506.9 380.2L506.9 381.8L506.8 383.3L506.7 384.9L506.6 386.5L506.5 388.1L506.4 389.6L506.3 391.2L506.2 392.8M515.6 351.6L515.5 354.2L515.4 356.7L515.2 359.3L515.1 361.9L515.0 364.4L514.8 367.0L514.7 369.6L514.5 372.2L514.4 374.7L514.2 377.3L514.0 379.9L513.9 382.5L513.7 385.0L513.5 387.6L513.3 390.2L513.2 392.8L513.0 395.3L512.8 397.9L512.6 400.5L512.4 403.1M523.4 341.9L523.2 345.5L523.0 349.0L522.8 352.6L522.6 356.2L522.4 359.7L522.2 363.3L522.0 366.9L521.8 370.4L521.5 374.0L521.3 377.6L521.1 381.2L520.8 384.7L520.6 388.3L520.3 391.9L520.0 395.5L519.8 399.1L519.5 402.6L519.2 406.2L518.9 409.8L518.6 413.4M531.2 332.2L531.0 336.8L530.7 341.3L530.4 345.9L530.2 350.4L529.9 355.0L529.6 359.6L529.3 364.1L529.0 368.7L528.7 373.3L528.4 377.8L528.1 382.4L527.7 387.0L527.4 391.6L527.1 396.2L526.7 400.8L526.3 405.3L526.0 409.9L525.6 414.5L525.2 419.1L524.8 423.7M539.0 322.5L538.7 328.1L538.4 333.6L538.1 339.2L537.7 344.7L537.4 350.3L537.0 355.8L536.7 361.4L536.3 367.0L535.9 372.6L535.5 378.1L535.1 383.7L534.7 389.3L534.3 394.9L533.8 400.4L533.4 406.0L532.9 411.6L532.5 417.2L532.0 422.8L531.5 428.4L531.0 434.0M500.0 371.0L503.9 366.1L507.8 361.3L511.7 356.4L515.6 351.6L519.5 346.8L523.4 341.9L527.3 337.1L531.2 332.2L535.1 327.4L539.0 322.5M500.0 372.1L503.8 368.3L507.7 364.4L511.5 360.6L515.4 356.7L519.2 352.9L523.0 349.0L526.9 345.2L530.7 341.3L534.5 337.5L538.4 333.6M500.0 373.3L503.8 370.4L507.5 367.6L511.3 364.7L515.1 361.9L518.9 359.0L522.6 356.2L526.4 353.3L530.2 350.4L533.9 347.6L537.7 344.7M500.0 374.4L503.7 372.6L507.4 370.7L511.1 368.9L514.8 367.0L518.5 365.1L522.2 363.3L525.9 361.4L529.6 359.6L533.3 357.7L537.0 355.8M500.0 375.6L503.6 374.7L507.3 373.9L510.9 373.0L514.5 372.2L518.1 371.3L521.8 370.4L525.4 369.6L529.0 368.7L532.7 367.8L536.3 367.0M500.0 376.8L503.5 376.9L507.1 377.0L510.6 377.2L514.2 377.3L517.8 377.4L521.3 377.6L524.8 377.7L528.4 377.8L532.0 378.0L535.5 378.1M500.0 377.9L503.5 379.0L506.9 380.2L510.4 381.3L513.9 382.5L517.3 383.6L520.8 384.7L524.3 385.9L527.7 387.0L531.2 388.1L534.7 389.3M500.0 379.1L503.4 381.2L506.8 383.3L510.1 385.5L513.5 387.6L516.9 389.7L520.3 391.9L523.7 394.0L527.1 396.2L530.4 398.3L533.8 400.4M500.0 380.2L503.3 383.3L506.6 386.5L509.9 389.6L513.2 392.8L516.5 395.9L519.8 399.1L523.0 402.2L526.3 405.3L529.6 408.5L532.9 411.6M500.0 381.4L503.2 385.5L506.4 389.6L509.6 393.8L512.8 397.9L516.0 402.1L519.2 406.2L522.4 410.4L525.6 414.5L528.8 418.7L532.0 422.8M500.0 382.5L503.1 387.6L506.2 392.8L509.3 398.0L512.4 403.1L515.5 408.2L518.6 413.4L521.7 418.6L524.8 423.7L527.9 428.9L531.0 434.0"/></defs><use href="#ms4" fill="none" stroke="#1c0a00" stroke-width="3.0"/><use href="#ms4" fill="none" stroke="#ffcc70" stroke-width="0.9"/><polygon points="500.0,371.0 503.2,367.0 506.5,362.9 509.8,358.9 513.0,354.8 516.2,350.8 519.5,346.8 522.8,342.7 526.0,338.7 529.2,334.6 532.5,330.6 535.8,326.5 539.0,322.5 539.0,322.5 538.5,331.8 537.9,341.0 537.4,350.3 536.8,359.6 536.2,368.8 535.5,378.1 534.8,387.4 534.1,396.7 533.4,406.0 532.6,415.3 531.8,424.7 531.0,434.0 531.0,434.0 528.4,429.7 525.8,425.4 523.2,421.1 520.7,416.8 518.1,412.5 515.5,408.2 512.9,404.0 510.3,399.7 507.8,395.4 505.2,391.1 502.6,386.8 500.0,382.5 500.0,382.5 500.0,381.5 500.0,380.6 500.0,379.6 500.0,378.7 500.0,377.7 500.0,376.8 500.0,375.8 500.0,374.8 500.0,373.9 500.0,372.9 500.0,372.0 500.0,371.0" fill="none" stroke="#FF8A0A" stroke-width="1.8" stroke-linejoin="round"/><path d="M500.0 371.0h0M500.0 372.1h0M500.0 373.3h0M500.0 374.4h0M500.0 375.6h0M500.0 376.8h0M500.0 377.9h0M500.0 379.1h0M500.0 380.2h0M500.0 381.4h0M500.0 382.5h0M507.8 361.3h0M507.7 364.4h0M507.5 367.6h0M507.4 370.7h0M507.3 373.9h0M507.1 377.0h0M506.9 380.2h0M506.8 383.3h0M506.6 386.5h0M506.4 389.6h0M506.2 392.8h0M515.6 351.6h0M515.4 356.7h0M515.1 361.9h0M514.8 367.0h0M514.5 372.2h0M514.2 377.3h0M513.9 382.5h0M513.5 387.6h0M513.2 392.8h0M512.8 397.9h0M512.4 403.1h0M523.4 341.9h0M523.0 349.0h0M522.6 356.2h0M522.2 363.3h0M521.8 370.4h0M521.3 377.6h0M520.8 384.7h0M520.3 391.9h0M519.8 399.1h0M519.2 406.2h0M518.6 413.4h0M531.2 332.2h0M530.7 341.3h0M530.2 350.4h0M529.6 359.6h0M529.0 368.7h0M528.4 377.8h0M527.7 387.0h0M527.1 396.2h0M526.3 405.3h0M525.6 414.5h0M524.8 423.7h0M539.0 322.5h0M538.4 333.6h0M537.7 344.7h0M537.0 355.8h0M536.3 367.0h0M535.5 378.1h0M534.7 389.3h0M533.8 400.4h0M532.9 411.6h0M532.0 422.8h0M531.0 434.0h0" fill="none" stroke="#FF8A0A" stroke-width="3.0" stroke-linecap="square"/>
<polygon points="296.0,407.0 305.9,409.7 316.1,411.8 326.4,413.4 336.9,414.3 347.7,414.7 358.6,414.5 369.8,413.7 381.1,412.3 392.7,410.4 404.4,407.8 416.4,404.7 428.5,401.0 428.5,401.0 429.1,410.5 429.7,420.0 430.3,429.5 430.9,439.0 431.5,448.5 432.1,458.0 432.8,467.5 433.4,477.0 434.0,486.5 434.7,496.0 435.3,505.5 436.0,515.0 436.0,515.0 423.8,512.8 411.7,511.1 399.9,510.0 388.2,509.4 376.8,509.4 365.5,510.0 354.4,511.1 343.6,512.8 332.9,515.0 322.4,517.8 312.1,521.1 302.0,525.0 302.0,525.0 308.5,514.6 313.8,504.2 317.8,494.0 320.4,483.9 321.9,473.9 322.0,464.0 320.9,454.2 318.4,444.6 314.8,435.0 309.8,425.6 303.5,416.2 296.0,407.0" fill="#8a6a44"/><defs><path id="ms5" d="M296.0 407.0L300.7 412.5L304.9 418.1L308.6 423.7L311.9 429.3L314.8 435.0L317.1 440.7L319.0 446.5L320.5 452.3L321.5 458.1L322.0 464.0L322.1 469.9L321.7 475.9L320.8 481.9L319.5 487.9L317.8 494.0L315.5 500.1L312.8 506.3L309.7 512.5L306.1 518.7L302.0 525.0M303.0 409.0L307.4 414.3L311.4 419.6L314.9 425.0L318.1 430.4L320.8 435.9L323.0 441.4L324.8 446.9L326.2 452.5L327.2 458.1L327.7 463.7L327.8 469.4L327.4 475.1L326.7 480.9L325.4 486.6L323.8 492.5L321.7 498.3L319.2 504.3L316.3 510.2L312.9 516.2L309.1 522.2M310.1 410.7L314.2 415.8L318.0 420.9L321.4 426.1L324.3 431.3L326.8 436.6L329.0 441.9L330.7 447.2L332.0 452.6L333.0 458.0L333.5 463.4L333.6 468.9L333.3 474.4L332.6 479.9L331.5 485.5L330.0 491.1L328.0 496.7L325.7 502.4L323.0 508.1L319.9 513.9L316.3 519.7M317.3 412.0L321.2 417.0L324.7 422.0L327.9 427.0L330.7 432.1L333.0 437.2L335.1 442.3L336.7 447.4L338.0 452.6L338.9 457.8L339.4 463.1L339.5 468.4L339.2 473.7L338.6 479.0L337.6 484.4L336.2 489.8L334.5 495.3L332.3 500.8L329.8 506.3L326.9 511.8L323.6 517.4M324.6 413.1L328.2 418.0L331.5 422.8L334.5 427.7L337.1 432.6L339.3 437.6L341.2 442.6L342.8 447.6L344.0 452.6L344.9 457.7L345.3 462.8L345.5 467.9L345.3 473.1L344.7 478.3L343.8 483.5L342.6 488.7L341.0 494.0L339.0 499.3L336.7 504.7L334.0 510.0L331.0 515.4M332.0 414.0L335.4 418.7L338.4 423.4L341.2 428.2L343.6 433.0L345.7 437.8L347.5 442.7L349.0 447.6L350.1 452.5L350.9 457.5L351.4 462.4L351.6 467.4L351.4 472.5L351.0 477.5L350.1 482.6L349.0 487.7L347.6 492.9L345.8 498.1L343.7 503.3L341.3 508.5L338.5 513.8M339.5 414.5L342.6 419.1L345.5 423.8L348.0 428.5L350.3 433.2L352.2 438.0L353.9 442.7L355.3 447.5L356.4 452.4L357.1 457.2L357.6 462.1L357.8 467.0L357.7 471.9L357.3 476.9L356.6 481.9L355.6 486.9L354.3 491.9L352.7 497.0L350.8 502.1L348.6 507.2L346.1 512.3M347.0 414.7L349.9 419.3L352.6 423.9L354.9 428.6L357.0 433.2L358.8 437.9L360.4 442.7L361.7 447.4L362.7 452.2L363.4 457.0L363.9 461.8L364.1 466.6L364.0 471.5L363.7 476.4L363.1 481.3L362.2 486.2L361.1 491.1L359.6 496.1L358.0 501.1L356.0 506.1L353.8 511.2M354.7 414.6L357.4 419.2L359.8 423.8L361.9 428.5L363.9 433.1L365.5 437.8L367.0 442.5L368.2 447.2L369.1 451.9L369.8 456.7L370.3 461.4L370.5 466.2L370.5 471.0L370.2 475.9L369.7 480.7L369.0 485.6L368.0 490.5L366.7 495.4L365.3 500.4L363.5 505.3L361.6 510.3M362.5 414.3L364.9 418.9L367.1 423.5L369.1 428.1L370.8 432.8L372.3 437.4L373.6 442.1L374.7 446.8L375.6 451.6L376.3 456.3L376.8 461.1L377.0 465.9L377.0 470.7L376.8 475.5L376.4 480.3L375.8 485.2L375.0 490.0L373.9 494.9L372.6 499.9L371.2 504.8L369.5 509.7M370.4 413.6L372.6 418.3L374.5 422.9L376.3 427.6L377.8 432.3L379.2 437.0L380.4 441.7L381.4 446.4L382.3 451.2L382.9 455.9L383.3 460.7L383.6 465.5L383.7 470.3L383.5 475.2L383.2 480.0L382.7 484.9L382.0 489.7L381.2 494.6L380.1 499.6L378.9 504.5L377.4 509.4M378.4 412.7L380.3 417.4L382.0 422.1L383.6 426.9L385.0 431.6L386.2 436.4L387.3 441.1L388.2 445.9L389.0 450.7L389.6 455.5L390.0 460.3L390.3 465.2L390.4 470.0L390.3 474.9L390.1 479.8L389.8 484.7L389.2 489.6L388.5 494.5L387.7 499.5L386.7 504.4L385.5 509.4M386.5 411.5L388.1 416.3L389.6 421.1L391.0 425.9L392.2 430.7L393.3 435.6L394.3 440.4L395.1 445.3L395.8 450.2L396.4 455.1L396.8 460.0L397.1 464.9L397.2 469.8L397.3 474.7L397.1 479.7L396.9 484.7L396.5 489.6L396.0 494.6L395.4 499.6L394.6 504.6L393.7 509.6M394.7 410.0L396.1 414.9L397.4 419.8L398.5 424.8L399.6 429.7L400.5 434.7L401.4 439.6L402.1 444.6L402.7 449.6L403.2 454.6L403.6 459.6L404.0 464.6L404.2 469.6L404.3 474.7L404.2 479.7L404.1 484.8L403.9 489.8L403.6 494.9L403.1 500.0L402.6 505.1L402.0 510.2M403.0 408.2L404.1 413.2L405.2 418.3L406.1 423.4L407.0 428.5L407.8 433.6L408.5 438.7L409.2 443.8L409.7 448.9L410.2 454.1L410.6 459.2L410.9 464.3L411.2 469.5L411.4 474.7L411.4 479.8L411.5 485.0L411.4 490.2L411.2 495.4L411.0 500.5L410.7 505.7L410.3 511.0M411.4 406.1L412.3 411.3L413.1 416.6L413.8 421.8L414.5 427.1L415.2 432.4L415.8 437.7L416.3 442.9L416.8 448.2L417.3 453.5L417.7 458.8L418.0 464.1L418.3 469.4L418.6 474.7L418.7 480.0L418.9 485.4L419.0 490.7L419.0 496.0L419.0 501.3L418.9 506.7L418.8 512.0M419.9 403.7L420.5 409.1L421.1 414.6L421.6 420.1L422.2 425.5L422.7 431.0L423.2 436.5L423.6 442.0L424.1 447.4L424.5 452.9L424.9 458.4L425.2 463.9L425.6 469.4L425.9 474.9L426.1 480.4L426.4 485.9L426.6 491.4L426.9 496.9L427.0 502.4L427.2 507.9L427.3 513.4M428.5 401.0L428.9 406.7L429.2 412.4L429.6 418.1L429.9 423.8L430.3 429.5L430.6 435.2L431.0 440.9L431.4 446.6L431.8 452.3L432.1 458.0L432.5 463.7L432.9 469.4L433.3 475.1L433.6 480.8L434.0 486.5L434.4 492.2L434.8 497.9L435.2 503.6L435.6 509.3L436.0 515.0M296.0 407.0L299.5 408.0L303.0 409.0L306.5 409.8L310.1 410.7L313.7 411.4L317.3 412.0L320.9 412.6L324.6 413.1L328.3 413.6L332.0 414.0L335.7 414.3L339.5 414.5L343.2 414.6L347.0 414.7L350.9 414.7L354.7 414.6L358.6 414.5L362.5 414.3L366.5 414.0L370.4 413.6L374.4 413.2L378.4 412.7L382.5 412.1L386.5 411.5L390.6 410.8L394.7 410.0L398.8 409.1L403.0 408.2L407.2 407.2L411.4 406.1L415.6 404.9L419.9 403.7L424.2 402.4L428.5 401.0M304.9 418.1L308.1 418.9L311.4 419.6L314.7 420.3L318.0 420.9L321.4 421.5L324.7 422.0L328.1 422.4L331.5 422.8L335.0 423.2L338.4 423.4L341.9 423.6L345.5 423.8L349.0 423.9L352.6 423.9L356.2 423.9L359.8 423.8L363.4 423.7L367.1 423.5L370.8 423.2L374.5 422.9L378.3 422.6L382.0 422.1L385.8 421.6L389.6 421.1L393.5 420.5L397.4 419.8L401.2 419.1L405.2 418.3L409.1 417.5L413.1 416.6L417.1 415.6L421.1 414.6L425.1 413.5L429.2 412.4M311.9 429.3L315.0 429.9L318.1 430.4L321.2 430.9L324.3 431.3L327.5 431.7L330.7 432.1L333.9 432.4L337.1 432.6L340.4 432.8L343.6 433.0L346.9 433.1L350.3 433.2L353.6 433.3L357.0 433.2L360.4 433.2L363.9 433.1L367.3 433.0L370.8 432.8L374.3 432.5L377.8 432.3L381.4 432.0L385.0 431.6L388.6 431.2L392.2 430.7L395.9 430.2L399.6 429.7L403.3 429.1L407.0 428.5L410.8 427.8L414.5 427.1L418.3 426.3L422.2 425.5L426.0 424.7L429.9 423.8M317.1 440.7L320.0 441.1L323.0 441.4L326.0 441.6L329.0 441.9L332.0 442.1L335.1 442.3L338.1 442.4L341.2 442.6L344.4 442.6L347.5 442.7L350.7 442.7L353.9 442.7L357.1 442.7L360.4 442.7L363.7 442.6L367.0 442.5L370.3 442.3L373.6 442.1L377.0 441.9L380.4 441.7L383.8 441.4L387.3 441.1L390.8 440.8L394.3 440.4L397.8 440.0L401.4 439.6L404.9 439.2L408.5 438.7L412.2 438.2L415.8 437.7L419.5 437.1L423.2 436.5L426.9 435.9L430.6 435.2M320.5 452.3L323.3 452.4L326.2 452.5L329.1 452.5L332.0 452.6L335.0 452.6L338.0 452.6L341.0 452.6L344.0 452.6L347.1 452.6L350.1 452.5L353.2 452.5L356.4 452.4L359.5 452.3L362.7 452.2L365.9 452.0L369.1 451.9L372.4 451.7L375.6 451.6L378.9 451.4L382.3 451.2L385.6 450.9L389.0 450.7L392.4 450.5L395.8 450.2L399.2 449.9L402.7 449.6L406.2 449.3L409.7 448.9L413.3 448.6L416.8 448.2L420.4 447.8L424.1 447.4L427.7 447.0L431.4 446.6M322.0 464.0L324.8 463.9L327.7 463.7L330.6 463.6L333.5 463.4L336.4 463.2L339.4 463.1L342.3 462.9L345.3 462.8L348.4 462.6L351.4 462.4L354.5 462.3L357.6 462.1L360.7 461.9L363.9 461.8L367.1 461.6L370.3 461.4L373.5 461.2L376.8 461.1L380.0 460.9L383.3 460.7L386.7 460.5L390.0 460.3L393.4 460.2L396.8 460.0L400.2 459.8L403.6 459.6L407.1 459.4L410.6 459.2L414.1 459.0L417.7 458.8L421.3 458.6L424.9 458.4L428.5 458.2L432.1 458.0M321.7 475.9L324.5 475.5L327.4 475.1L330.3 474.7L333.3 474.4L336.3 474.0L339.2 473.7L342.3 473.4L345.3 473.1L348.4 472.8L351.4 472.5L354.5 472.2L357.7 471.9L360.8 471.7L364.0 471.5L367.2 471.2L370.5 471.0L373.7 470.8L377.0 470.7L380.3 470.5L383.7 470.3L387.0 470.2L390.4 470.0L393.8 469.9L397.2 469.8L400.7 469.7L404.2 469.6L407.7 469.6L411.2 469.5L414.7 469.4L418.3 469.4L421.9 469.4L425.6 469.4L429.2 469.4L432.9 469.4M319.5 487.9L322.5 487.3L325.4 486.6L328.5 486.1L331.5 485.5L334.5 484.9L337.6 484.4L340.7 483.9L343.8 483.5L347.0 483.0L350.1 482.6L353.3 482.2L356.6 481.9L359.8 481.6L363.1 481.3L366.4 481.0L369.7 480.7L373.0 480.5L376.4 480.3L379.8 480.1L383.2 480.0L386.7 479.9L390.1 479.8L393.6 479.7L397.1 479.7L400.7 479.7L404.2 479.7L407.8 479.7L411.4 479.8L415.1 479.9L418.7 480.0L422.4 480.2L426.1 480.4L429.9 480.6L433.6 480.8M315.5 500.1L318.6 499.2L321.7 498.3L324.9 497.5L328.0 496.7L331.2 496.0L334.5 495.3L337.7 494.6L341.0 494.0L344.2 493.4L347.6 492.9L350.9 492.4L354.3 491.9L357.7 491.5L361.1 491.1L364.5 490.8L368.0 490.5L371.4 490.3L375.0 490.0L378.5 489.9L382.0 489.7L385.6 489.7L389.2 489.6L392.9 489.6L396.5 489.6L400.2 489.7L403.9 489.8L407.6 490.0L411.4 490.2L415.2 490.4L419.0 490.7L422.8 491.0L426.6 491.4L430.5 491.8L434.4 492.2M309.7 512.5L313.0 511.3L316.3 510.2L319.6 509.1L323.0 508.1L326.4 507.2L329.8 506.3L333.2 505.5L336.7 504.7L340.2 503.9L343.7 503.3L347.2 502.6L350.8 502.1L354.4 501.6L358.0 501.1L361.6 500.7L365.3 500.4L368.9 500.1L372.6 499.9L376.4 499.7L380.1 499.6L383.9 499.5L387.7 499.5L391.5 499.5L395.4 499.6L399.2 499.8L403.1 500.0L407.1 500.2L411.0 500.5L415.0 500.9L419.0 501.3L423.0 501.8L427.0 502.4L431.1 503.0L435.2 503.6M302.0 525.0L305.5 523.6L309.1 522.2L312.7 520.9L316.3 519.7L319.9 518.5L323.6 517.4L327.3 516.4L331.0 515.4L334.7 514.6L338.5 513.8L342.3 513.0L346.1 512.3L349.9 511.7L353.8 511.2L357.7 510.7L361.6 510.3L365.5 510.0L369.5 509.7L373.4 509.6L377.4 509.4L381.5 509.4L385.5 509.4L389.6 509.5L393.7 509.6L397.8 509.9L402.0 510.2L406.1 510.5L410.3 511.0L414.5 511.5L418.8 512.0L423.1 512.7L427.3 513.4L431.7 514.2L436.0 515.0"/></defs><use href="#ms5" fill="none" stroke="#1c0a00" stroke-width="3.0"/><use href="#ms5" fill="none" stroke="#ffcc70" stroke-width="0.9"/><polygon points="296.0,407.0 305.9,409.7 316.1,411.8 326.4,413.4 336.9,414.3 347.7,414.7 358.6,414.5 369.8,413.7 381.1,412.3 392.7,410.4 404.4,407.8 416.4,404.7 428.5,401.0 428.5,401.0 429.1,410.5 429.7,420.0 430.3,429.5 430.9,439.0 431.5,448.5 432.1,458.0 432.8,467.5 433.4,477.0 434.0,486.5 434.7,496.0 435.3,505.5 436.0,515.0 436.0,515.0 423.8,512.8 411.7,511.1 399.9,510.0 388.2,509.4 376.8,509.4 365.5,510.0 354.4,511.1 343.6,512.8 332.9,515.0 322.4,517.8 312.1,521.1 302.0,525.0 302.0,525.0 308.5,514.6 313.8,504.2 317.8,494.0 320.4,483.9 321.9,473.9 322.0,464.0 320.9,454.2 318.4,444.6 314.8,435.0 309.8,425.6 303.5,416.2 296.0,407.0" fill="none" stroke="#FF8A0A" stroke-width="1.8" stroke-linejoin="round"/><path d="M296.0 407.0h0M304.9 418.1h0M311.9 429.3h0M317.1 440.7h0M320.5 452.3h0M322.0 464.0h0M321.7 475.9h0M319.5 487.9h0M315.5 500.1h0M309.7 512.5h0M302.0 525.0h0M303.0 409.0h0M311.4 419.6h0M318.1 430.4h0M323.0 441.4h0M326.2 452.5h0M327.7 463.7h0M327.4 475.1h0M325.4 486.6h0M321.7 498.3h0M316.3 510.2h0M309.1 522.2h0M310.1 410.7h0M318.0 420.9h0M324.3 431.3h0M329.0 441.9h0M332.0 452.6h0M333.5 463.4h0M333.3 474.4h0M331.5 485.5h0M328.0 496.7h0M323.0 508.1h0M316.3 519.7h0M317.3 412.0h0M324.7 422.0h0M330.7 432.1h0M335.1 442.3h0M338.0 452.6h0M339.4 463.1h0M339.2 473.7h0M337.6 484.4h0M334.5 495.3h0M329.8 506.3h0M323.6 517.4h0M324.6 413.1h0M331.5 422.8h0M337.1 432.6h0M341.2 442.6h0M344.0 452.6h0M345.3 462.8h0M345.3 473.1h0M343.8 483.5h0M341.0 494.0h0M336.7 504.7h0M331.0 515.4h0M332.0 414.0h0M338.4 423.4h0M343.6 433.0h0M347.5 442.7h0M350.1 452.5h0M351.4 462.4h0M351.4 472.5h0M350.1 482.6h0M347.6 492.9h0M343.7 503.3h0M338.5 513.8h0M339.5 414.5h0M345.5 423.8h0M350.3 433.2h0M353.9 442.7h0M356.4 452.4h0M357.6 462.1h0M357.7 471.9h0M356.6 481.9h0M354.3 491.9h0M350.8 502.1h0M346.1 512.3h0M347.0 414.7h0M352.6 423.9h0M357.0 433.2h0M360.4 442.7h0M362.7 452.2h0M363.9 461.8h0M364.0 471.5h0M363.1 481.3h0M361.1 491.1h0M358.0 501.1h0M353.8 511.2h0M354.7 414.6h0M359.8 423.8h0M363.9 433.1h0M367.0 442.5h0M369.1 451.9h0M370.3 461.4h0M370.5 471.0h0M369.7 480.7h0M368.0 490.5h0M365.3 500.4h0M361.6 510.3h0M362.5 414.3h0M367.1 423.5h0M370.8 432.8h0M373.6 442.1h0M375.6 451.6h0M376.8 461.1h0M377.0 470.7h0M376.4 480.3h0M375.0 490.0h0M372.6 499.9h0M369.5 509.7h0M370.4 413.6h0M374.5 422.9h0M377.8 432.3h0M380.4 441.7h0M382.3 451.2h0M383.3 460.7h0M383.7 470.3h0M383.2 480.0h0M382.0 489.7h0M380.1 499.6h0M377.4 509.4h0M378.4 412.7h0M382.0 422.1h0M385.0 431.6h0M387.3 441.1h0M389.0 450.7h0M390.0 460.3h0M390.4 470.0h0M390.1 479.8h0M389.2 489.6h0M387.7 499.5h0M385.5 509.4h0M386.5 411.5h0M389.6 421.1h0M392.2 430.7h0M394.3 440.4h0M395.8 450.2h0M396.8 460.0h0M397.2 469.8h0M397.1 479.7h0M396.5 489.6h0M395.4 499.6h0M393.7 509.6h0M394.7 410.0h0M397.4 419.8h0M399.6 429.7h0M401.4 439.6h0M402.7 449.6h0M403.6 459.6h0M404.2 469.6h0M404.2 479.7h0M403.9 489.8h0M403.1 500.0h0M402.0 510.2h0M403.0 408.2h0M405.2 418.3h0M407.0 428.5h0M408.5 438.7h0M409.7 448.9h0M410.6 459.2h0M411.2 469.5h0M411.4 479.8h0M411.4 490.2h0M411.0 500.5h0M410.3 511.0h0M411.4 406.1h0M413.1 416.6h0M414.5 427.1h0M415.8 437.7h0M416.8 448.2h0M417.7 458.8h0M418.3 469.4h0M418.7 480.0h0M419.0 490.7h0M419.0 501.3h0M418.8 512.0h0M419.9 403.7h0M421.1 414.6h0M422.2 425.5h0M423.2 436.5h0M424.1 447.4h0M424.9 458.4h0M425.6 469.4h0M426.1 480.4h0M426.6 491.4h0M427.0 502.4h0M427.3 513.4h0M428.5 401.0h0M429.2 412.4h0M429.9 423.8h0M430.6 435.2h0M431.4 446.6h0M432.1 458.0h0M432.9 469.4h0M433.6 480.8h0M434.4 492.2h0M435.2 503.6h0M436.0 515.0h0" fill="none" stroke="#FF8A0A" stroke-width="3.9" stroke-linecap="square"/>
<polygon points="428.5,401.0 431.8,405.1 435.2,409.2 438.5,413.2 441.8,417.3 445.2,421.4 448.5,425.5 451.8,429.6 455.2,433.7 458.5,437.8 461.8,441.8 465.2,445.9 468.5,450.0 468.5,450.0 468.5,451.1 468.5,452.2 468.5,453.2 468.5,454.3 468.5,455.4 468.5,456.5 468.5,457.6 468.5,458.7 468.5,459.8 468.5,460.8 468.5,461.9 468.5,463.0 468.5,463.0 465.8,467.3 463.1,471.7 460.4,476.0 457.7,480.3 455.0,484.7 452.2,489.0 449.5,493.3 446.8,497.7 444.1,502.0 441.4,506.3 438.7,510.7 436.0,515.0 436.0,515.0 435.3,505.5 434.7,496.0 434.0,486.5 433.4,477.0 432.8,467.5 432.1,458.0 431.5,448.5 430.9,439.0 430.3,429.5 429.7,420.0 429.1,410.5 428.5,401.0" fill="#8a6a44"/><defs><path id="ms6" d="M428.5 401.0L428.9 406.7L429.2 412.4L429.6 418.1L429.9 423.8L430.3 429.5L430.6 435.2L431.0 440.9L431.4 446.6L431.8 452.3L432.1 458.0L432.5 463.7L432.9 469.4L433.3 475.1L433.6 480.8L434.0 486.5L434.4 492.2L434.8 497.9L435.2 503.6L435.6 509.3L436.0 515.0M436.5 410.8L436.8 415.5L437.1 420.2L437.3 424.9L437.6 429.6L437.9 434.2L438.2 438.9L438.5 443.6L438.8 448.3L439.1 453.0L439.4 457.7L439.7 462.4L440.0 467.1L440.3 471.8L440.6 476.5L440.9 481.2L441.2 485.8L441.5 490.5L441.9 495.2L442.2 499.9L442.5 504.6M444.5 420.6L444.7 424.3L444.9 428.0L445.1 431.6L445.4 435.3L445.6 439.0L445.8 442.7L446.0 446.4L446.2 450.0L446.5 453.7L446.7 457.4L446.9 461.1L447.1 464.8L447.4 468.4L447.6 472.1L447.8 475.8L448.1 479.5L448.3 483.2L448.5 486.8L448.8 490.5L449.0 494.2M452.5 430.4L452.6 433.1L452.8 435.7L452.9 438.4L453.1 441.1L453.2 443.8L453.4 446.4L453.5 449.1L453.7 451.8L453.8 454.4L454.0 457.1L454.1 459.8L454.3 462.4L454.4 465.1L454.6 467.8L454.7 470.5L454.9 473.1L455.0 475.8L455.2 478.5L455.3 481.1L455.5 483.8M460.5 440.2L460.6 441.9L460.6 443.5L460.7 445.2L460.8 446.8L460.9 448.5L460.9 450.2L461.0 451.8L461.1 453.5L461.2 455.1L461.2 456.8L461.3 458.5L461.4 460.1L461.5 461.8L461.5 463.4L461.6 465.1L461.7 466.8L461.8 468.4L461.8 470.1L461.9 471.7L462.0 473.4M468.5 450.0L468.5 450.6L468.5 451.3L468.5 451.9L468.5 452.6L468.5 453.2L468.5 453.9L468.5 454.5L468.5 455.2L468.5 455.9L468.5 456.5L468.5 457.1L468.5 457.8L468.5 458.4L468.5 459.1L468.5 459.8L468.5 460.4L468.5 461.1L468.5 461.7L468.5 462.4L468.5 463.0M428.5 401.0L432.5 405.9L436.5 410.8L440.5 415.7L444.5 420.6L448.5 425.5L452.5 430.4L456.5 435.3L460.5 440.2L464.5 445.1L468.5 450.0M429.2 412.4L433.1 416.3L437.1 420.2L441.0 424.1L444.9 428.0L448.9 431.8L452.8 435.7L456.7 439.6L460.6 443.5L464.6 447.4L468.5 451.3M429.9 423.8L433.8 426.7L437.6 429.6L441.5 432.4L445.4 435.3L449.2 438.2L453.1 441.1L456.9 444.0L460.8 446.8L464.6 449.7L468.5 452.6M430.6 435.2L434.4 437.1L438.2 438.9L442.0 440.8L445.8 442.7L449.6 444.5L453.4 446.4L457.1 448.3L460.9 450.2L464.7 452.0L468.5 453.9M431.4 446.6L435.1 447.5L438.8 448.3L442.5 449.2L446.2 450.0L449.9 450.9L453.7 451.8L457.4 452.6L461.1 453.5L464.8 454.3L468.5 455.2M432.1 458.0L435.8 457.8L439.4 457.7L443.0 457.5L446.7 457.4L450.3 457.2L454.0 457.1L457.6 457.0L461.2 456.8L464.9 456.6L468.5 456.5M432.9 469.4L436.4 468.2L440.0 467.1L443.6 465.9L447.1 464.8L450.7 463.6L454.3 462.4L457.8 461.3L461.4 460.1L464.9 459.0L468.5 457.8M433.6 480.8L437.1 478.6L440.6 476.5L444.1 474.3L447.6 472.1L451.1 469.9L454.6 467.8L458.0 465.6L461.5 463.4L465.0 461.3L468.5 459.1M434.4 492.2L437.8 489.0L441.2 485.8L444.6 482.7L448.1 479.5L451.5 476.3L454.9 473.1L458.3 469.9L461.7 466.8L465.1 463.6L468.5 460.4M435.2 503.6L438.5 499.4L441.9 495.2L445.2 491.0L448.5 486.8L451.9 482.7L455.2 478.5L458.5 474.3L461.8 470.1L465.2 465.9L468.5 461.7M436.0 515.0L439.3 509.8L442.5 504.6L445.8 499.4L449.0 494.2L452.2 489.0L455.5 483.8L458.8 478.6L462.0 473.4L465.2 468.2L468.5 463.0"/></defs><use href="#ms6" fill="none" stroke="#1c0a00" stroke-width="3.0"/><use href="#ms6" fill="none" stroke="#ffcc70" stroke-width="0.9"/><polygon points="428.5,401.0 431.8,405.1 435.2,409.2 438.5,413.2 441.8,417.3 445.2,421.4 448.5,425.5 451.8,429.6 455.2,433.7 458.5,437.8 461.8,441.8 465.2,445.9 468.5,450.0 468.5,450.0 468.5,451.1 468.5,452.2 468.5,453.2 468.5,454.3 468.5,455.4 468.5,456.5 468.5,457.6 468.5,458.7 468.5,459.8 468.5,460.8 468.5,461.9 468.5,463.0 468.5,463.0 465.8,467.3 463.1,471.7 460.4,476.0 457.7,480.3 455.0,484.7 452.2,489.0 449.5,493.3 446.8,497.7 444.1,502.0 441.4,506.3 438.7,510.7 436.0,515.0 436.0,515.0 435.3,505.5 434.7,496.0 434.0,486.5 433.4,477.0 432.8,467.5 432.1,458.0 431.5,448.5 430.9,439.0 430.3,429.5 429.7,420.0 429.1,410.5 428.5,401.0" fill="none" stroke="#FF8A0A" stroke-width="1.8" stroke-linejoin="round"/><path d="M428.5 401.0h0M429.2 412.4h0M429.9 423.8h0M430.6 435.2h0M431.4 446.6h0M432.1 458.0h0M432.9 469.4h0M433.6 480.8h0M434.4 492.2h0M435.2 503.6h0M436.0 515.0h0M436.5 410.8h0M437.1 420.2h0M437.6 429.6h0M438.2 438.9h0M438.8 448.3h0M439.4 457.7h0M440.0 467.1h0M440.6 476.5h0M441.2 485.8h0M441.9 495.2h0M442.5 504.6h0M444.5 420.6h0M444.9 428.0h0M445.4 435.3h0M445.8 442.7h0M446.2 450.0h0M446.7 457.4h0M447.1 464.8h0M447.6 472.1h0M448.1 479.5h0M448.5 486.8h0M449.0 494.2h0M452.5 430.4h0M452.8 435.7h0M453.1 441.1h0M453.4 446.4h0M453.7 451.8h0M454.0 457.1h0M454.3 462.4h0M454.6 467.8h0M454.9 473.1h0M455.2 478.5h0M455.5 483.8h0M460.5 440.2h0M460.6 443.5h0M460.8 446.8h0M460.9 450.2h0M461.1 453.5h0M461.2 456.8h0M461.4 460.1h0M461.5 463.4h0M461.7 466.8h0M461.8 470.1h0M462.0 473.4h0M468.5 450.0h0M468.5 451.3h0M468.5 452.6h0M468.5 453.9h0M468.5 455.2h0M468.5 456.5h0M468.5 457.8h0M468.5 459.1h0M468.5 460.4h0M468.5 461.7h0M468.5 463.0h0" fill="none" stroke="#FF8A0A" stroke-width="3.0" stroke-linecap="square"/>
<polygon points="467.5,449 620,450 782.5,458.5 877.5,470 782.5,473 620,467.5 467.5,463.5" fill="#FF8A0A"/>
<polygon points="877.5,470.0 869.7,462.5 861.3,455.5 852.5,448.8 843.1,442.6 833.2,436.8 822.9,431.4 812.0,426.4 800.6,421.8 788.7,417.6 776.3,413.8 763.4,410.5 750.0,407.5 750.0,407.5 752.7,411.8 755.4,416.0 758.1,420.2 760.8,424.5 763.5,428.8 766.2,433.0 769.0,437.2 771.7,441.5 774.4,445.8 777.1,450.0 779.8,454.2 782.5,458.5 782.5,458.5 787.1,458.9 791.8,459.2 796.4,459.6 801.0,460.0 805.6,460.4 810.2,460.8 814.9,461.1 819.5,461.5 824.1,461.9 828.8,462.2 833.4,462.6 838.0,463.0 838.0,463.0 841.3,463.6 844.6,464.2 847.9,464.8 851.2,465.3 854.5,465.9 857.8,466.5 861.0,467.1 864.3,467.7 867.6,468.2 870.9,468.8 874.2,469.4 877.5,470.0" fill="#8a6a44"/><defs><path id="ms7" d="M877.5 470.0L874.7 469.5L871.9 469.0L869.0 468.5L866.2 468.0L863.4 467.5L860.6 467.0L857.8 466.5L854.9 466.0L852.1 465.5L849.3 465.0L846.5 464.5L843.6 464.0L840.8 463.5L838.0 463.0M872.0 464.7L869.4 464.6L866.7 464.4L864.0 464.3L861.4 464.1L858.7 464.0L856.0 463.9L853.4 463.7L850.7 463.6L848.1 463.4L845.4 463.3L842.7 463.2L840.1 463.0L837.4 462.9L834.7 462.7M866.3 459.6L863.8 459.8L861.3 460.0L858.8 460.2L856.3 460.4L853.9 460.6L851.4 460.8L848.9 461.0L846.4 461.2L843.9 461.4L841.4 461.6L838.9 461.9L836.4 462.1L834.0 462.3L831.5 462.5M860.3 454.7L858.0 455.2L855.7 455.8L853.4 456.3L851.1 456.8L848.8 457.4L846.5 457.9L844.3 458.4L842.0 459.0L839.7 459.5L837.4 460.1L835.1 460.6L832.8 461.1L830.5 461.7L828.2 462.2M854.1 450.0L852.0 450.8L849.9 451.7L847.8 452.5L845.7 453.4L843.7 454.3L841.6 455.1L839.5 456.0L837.4 456.8L835.3 457.7L833.3 458.5L831.2 459.4L829.1 460.2L827.0 461.1L824.9 461.9M847.6 445.5L845.7 446.6L843.9 447.8L842.0 449.0L840.2 450.1L838.3 451.3L836.5 452.4L834.6 453.6L832.8 454.7L830.9 455.9L829.1 457.1L827.2 458.2L825.4 459.4L823.5 460.5L821.7 461.7M840.8 441.2L839.2 442.6L837.6 444.1L836.0 445.5L834.4 447.0L832.8 448.4L831.2 449.9L829.6 451.3L828.0 452.8L826.4 454.2L824.8 455.6L823.2 457.1L821.6 458.5L820.0 460.0L818.4 461.4M833.8 437.1L832.5 438.8L831.2 440.6L829.8 442.3L828.5 444.0L827.2 445.7L825.8 447.4L824.5 449.1L823.2 450.8L821.8 452.6L820.5 454.3L819.2 456.0L817.8 457.7L816.5 459.4L815.1 461.1M826.6 433.2L825.5 435.2L824.5 437.2L823.4 439.2L822.4 441.1L821.3 443.1L820.3 445.1L819.2 447.1L818.2 449.0L817.1 451.0L816.1 453.0L815.0 455.0L814.0 456.9L812.9 458.9L811.9 460.9M819.1 429.6L818.3 431.8L817.6 434.0L816.8 436.2L816.1 438.4L815.4 440.7L814.6 442.9L813.9 445.1L813.1 447.3L812.4 449.5L811.6 451.7L810.9 454.0L810.1 456.2L809.4 458.4L808.6 460.6M811.3 426.1L810.9 428.5L810.5 431.0L810.1 433.4L809.6 435.9L809.2 438.3L808.8 440.8L808.3 443.2L807.9 445.7L807.5 448.1L807.1 450.6L806.6 453.0L806.2 455.5L805.8 457.9L805.4 460.4M803.3 422.8L803.2 425.5L803.2 428.1L803.1 430.8L803.0 433.5L802.9 436.1L802.8 438.8L802.7 441.5L802.6 444.1L802.5 446.8L802.4 449.4L802.4 452.1L802.3 454.8L802.2 457.4L802.1 460.1M795.1 419.8L795.3 422.6L795.6 425.5L795.9 428.3L796.1 431.2L796.4 434.1L796.7 436.9L797.0 439.8L797.2 442.7L797.5 445.5L797.8 448.4L798.0 451.2L798.3 454.1L798.6 457.0L798.8 459.8M786.6 416.9L787.2 419.9L787.9 423.0L788.5 426.0L789.1 429.1L789.8 432.1L790.4 435.2L791.1 438.2L791.7 441.3L792.3 444.3L793.0 447.4L793.6 450.4L794.3 453.5L794.9 456.5L795.6 459.6M777.8 414.2L778.8 417.5L779.9 420.7L780.9 423.9L781.9 427.1L783.0 430.3L784.0 433.6L785.0 436.8L786.1 440.0L787.1 443.2L788.2 446.4L789.2 449.6L790.2 452.9L791.3 456.1L792.3 459.3M768.8 411.8L770.2 415.2L771.7 418.5L773.1 421.9L774.6 425.3L776.0 428.7L777.5 432.0L778.9 435.4L780.4 438.8L781.8 442.2L783.2 445.5L784.7 448.9L786.1 452.3L787.6 455.7L789.0 459.0M759.5 409.5L761.4 413.1L763.3 416.6L765.1 420.1L767.0 423.6L768.9 427.1L770.8 430.6L772.6 434.2L774.5 437.7L776.4 441.2L778.3 444.7L780.1 448.2L782.0 451.7L783.9 455.2L785.8 458.8M750.0 407.5L752.3 411.1L754.6 414.8L757.0 418.4L759.3 422.1L761.6 425.7L763.9 429.4L766.2 433.0L768.6 436.6L770.9 440.3L773.2 443.9L775.5 447.6L777.9 451.2L780.2 454.9L782.5 458.5M877.5 470.0L874.8 467.3L872.0 464.7L869.2 462.1L866.3 459.6L863.3 457.1L860.3 454.7L857.2 452.3L854.1 450.0L850.9 447.7L847.6 445.5L844.2 443.3L840.8 441.2L837.4 439.1L833.8 437.1L830.2 435.2L826.6 433.2L822.9 431.4L819.1 429.6L815.2 427.8L811.3 426.1L807.4 424.4L803.3 422.8L799.2 421.3L795.1 419.8L790.9 418.3L786.6 416.9L782.2 415.5L777.8 414.2L773.3 413.0L768.8 411.8L764.2 410.6L759.5 409.5L754.8 408.5L750.0 407.5M871.9 469.0L869.3 466.7L866.7 464.4L864.0 462.2L861.3 460.0L858.5 457.9L855.7 455.8L852.8 453.7L849.9 451.7L846.9 449.7L843.9 447.8L840.8 445.9L837.6 444.1L834.4 442.3L831.2 440.6L827.9 438.8L824.5 437.2L821.1 435.6L817.6 434.0L814.1 432.5L810.5 431.0L806.8 429.5L803.2 428.1L799.4 426.8L795.6 425.5L791.8 424.2L787.9 423.0L783.9 421.8L779.9 420.7L775.8 419.6L771.7 418.5L767.5 417.5L763.3 416.6L759.0 415.7L754.6 414.8M866.2 468.0L863.8 466.0L861.4 464.1L858.9 462.3L856.3 460.4L853.8 458.6L851.1 456.8L848.5 455.1L845.7 453.4L843.0 451.7L840.2 450.1L837.3 448.5L834.4 447.0L831.5 445.5L828.5 444.0L825.5 442.5L822.4 441.1L819.3 439.8L816.1 438.4L812.9 437.1L809.6 435.9L806.3 434.7L803.0 433.5L799.6 432.3L796.1 431.2L792.7 430.1L789.1 429.1L785.6 428.1L781.9 427.1L778.3 426.2L774.6 425.3L770.8 424.4L767.0 423.6L763.2 422.8L759.3 422.1M860.6 467.0L858.3 465.4L856.0 463.9L853.7 462.3L851.4 460.8L849.0 459.3L846.5 457.9L844.1 456.5L841.6 455.1L839.0 453.8L836.5 452.4L833.9 451.1L831.2 449.9L828.5 448.6L825.8 447.4L823.1 446.2L820.3 445.1L817.5 444.0L814.6 442.9L811.7 441.8L808.8 440.8L805.8 439.8L802.8 438.8L799.8 437.8L796.7 436.9L793.6 436.0L790.4 435.2L787.2 434.4L784.0 433.6L780.8 432.8L777.5 432.0L774.1 431.3L770.8 430.6L767.4 430.0L763.9 429.4M854.9 466.0L852.8 464.8L850.7 463.6L848.6 462.4L846.4 461.2L844.2 460.1L842.0 459.0L839.7 457.9L837.4 456.8L835.1 455.8L832.8 454.7L830.4 453.7L828.0 452.8L825.6 451.8L823.2 450.8L820.7 449.9L818.2 449.0L815.7 448.2L813.1 447.3L810.5 446.5L807.9 445.7L805.3 444.9L802.6 444.1L799.9 443.4L797.2 442.7L794.5 442.0L791.7 441.3L788.9 440.6L786.1 440.0L783.2 439.4L780.4 438.8L777.4 438.2L774.5 437.7L771.6 437.1L768.6 436.6M849.3 465.0L847.3 464.1L845.4 463.3L843.4 462.5L841.4 461.6L839.4 460.8L837.4 460.1L835.3 459.3L833.3 458.5L831.2 457.8L829.1 457.1L827.0 456.3L824.8 455.6L822.7 455.0L820.5 454.3L818.3 453.6L816.1 453.0L813.9 452.4L811.6 451.7L809.3 451.1L807.1 450.6L804.8 450.0L802.4 449.4L800.1 448.9L797.8 448.4L795.4 447.9L793.0 447.4L790.6 446.9L788.2 446.4L785.7 446.0L783.2 445.5L780.8 445.1L778.3 444.7L775.7 444.3L773.2 443.9M843.6 464.0L841.9 463.5L840.1 463.0L838.3 462.5L836.4 462.1L834.6 461.6L832.8 461.1L831.0 460.7L829.1 460.2L827.2 459.8L825.4 459.4L823.5 458.9L821.6 458.5L819.7 458.1L817.8 457.7L815.9 457.3L814.0 456.9L812.1 456.6L810.1 456.2L808.2 455.8L806.2 455.5L804.2 455.1L802.3 454.8L800.3 454.4L798.3 454.1L796.3 453.8L794.3 453.5L792.3 453.2L790.2 452.9L788.2 452.6L786.1 452.3L784.1 452.0L782.0 451.7L779.9 451.5L777.9 451.2M838.0 463.0L836.4 462.9L834.7 462.7L833.1 462.6L831.5 462.5L829.8 462.3L828.2 462.2L826.6 462.1L824.9 461.9L823.3 461.8L821.7 461.7L820.0 461.5L818.4 461.4L816.8 461.3L815.1 461.1L813.5 461.0L811.9 460.9L810.2 460.8L808.6 460.6L807.0 460.5L805.4 460.4L803.7 460.2L802.1 460.1L800.5 460.0L798.8 459.8L797.2 459.7L795.6 459.6L793.9 459.4L792.3 459.3L790.7 459.2L789.0 459.0L787.4 458.9L785.8 458.8L784.1 458.6L782.5 458.5"/></defs><use href="#ms7" fill="none" stroke="#1c0a00" stroke-width="2.6"/><use href="#ms7" fill="none" stroke="#ffcc70" stroke-width="0.8"/><polygon points="877.5,470.0 869.7,462.5 861.3,455.5 852.5,448.8 843.1,442.6 833.2,436.8 822.9,431.4 812.0,426.4 800.6,421.8 788.7,417.6 776.3,413.8 763.4,410.5 750.0,407.5 750.0,407.5 752.7,411.8 755.4,416.0 758.1,420.2 760.8,424.5 763.5,428.8 766.2,433.0 769.0,437.2 771.7,441.5 774.4,445.8 777.1,450.0 779.8,454.2 782.5,458.5 782.5,458.5 787.1,458.9 791.8,459.2 796.4,459.6 801.0,460.0 805.6,460.4 810.2,460.8 814.9,461.1 819.5,461.5 824.1,461.9 828.8,462.2 833.4,462.6 838.0,463.0 838.0,463.0 841.3,463.6 844.6,464.2 847.9,464.8 851.2,465.3 854.5,465.9 857.8,466.5 861.0,467.1 864.3,467.7 867.6,468.2 870.9,468.8 874.2,469.4 877.5,470.0" fill="none" stroke="#FF8A0A" stroke-width="1.8" stroke-linejoin="round"/><path d="M877.5 470.0h0M871.9 469.0h0M866.2 468.0h0M860.6 467.0h0M854.9 466.0h0M849.3 465.0h0M843.6 464.0h0M838.0 463.0h0M872.0 464.7h0M866.7 464.4h0M861.4 464.1h0M856.0 463.9h0M850.7 463.6h0M845.4 463.3h0M840.1 463.0h0M834.7 462.7h0M866.3 459.6h0M861.3 460.0h0M856.3 460.4h0M851.4 460.8h0M846.4 461.2h0M841.4 461.6h0M836.4 462.1h0M831.5 462.5h0M860.3 454.7h0M855.7 455.8h0M851.1 456.8h0M846.5 457.9h0M842.0 459.0h0M837.4 460.1h0M832.8 461.1h0M828.2 462.2h0M854.1 450.0h0M849.9 451.7h0M845.7 453.4h0M841.6 455.1h0M837.4 456.8h0M833.3 458.5h0M829.1 460.2h0M824.9 461.9h0M847.6 445.5h0M843.9 447.8h0M840.2 450.1h0M836.5 452.4h0M832.8 454.7h0M829.1 457.1h0M825.4 459.4h0M821.7 461.7h0M840.8 441.2h0M837.6 444.1h0M834.4 447.0h0M831.2 449.9h0M828.0 452.8h0M824.8 455.6h0M821.6 458.5h0M818.4 461.4h0M833.8 437.1h0M831.2 440.6h0M828.5 444.0h0M825.8 447.4h0M823.2 450.8h0M820.5 454.3h0M817.8 457.7h0M815.1 461.1h0M826.6 433.2h0M824.5 437.2h0M822.4 441.1h0M820.3 445.1h0M818.2 449.0h0M816.1 453.0h0M814.0 456.9h0M811.9 460.9h0M819.1 429.6h0M817.6 434.0h0M816.1 438.4h0M814.6 442.9h0M813.1 447.3h0M811.6 451.7h0M810.1 456.2h0M808.6 460.6h0M811.3 426.1h0M810.5 431.0h0M809.6 435.9h0M808.8 440.8h0M807.9 445.7h0M807.1 450.6h0M806.2 455.5h0M805.4 460.4h0M803.3 422.8h0M803.2 428.1h0M803.0 433.5h0M802.8 438.8h0M802.6 444.1h0M802.4 449.4h0M802.3 454.8h0M802.1 460.1h0M795.1 419.8h0M795.6 425.5h0M796.1 431.2h0M796.7 436.9h0M797.2 442.7h0M797.8 448.4h0M798.3 454.1h0M798.8 459.8h0M786.6 416.9h0M787.9 423.0h0M789.1 429.1h0M790.4 435.2h0M791.7 441.3h0M793.0 447.4h0M794.3 453.5h0M795.6 459.6h0M777.8 414.2h0M779.9 420.7h0M781.9 427.1h0M784.0 433.6h0M786.1 440.0h0M788.2 446.4h0M790.2 452.9h0M792.3 459.3h0M768.8 411.8h0M771.7 418.5h0M774.6 425.3h0M777.5 432.0h0M780.4 438.8h0M783.2 445.5h0M786.1 452.3h0M789.0 459.0h0M759.5 409.5h0M763.3 416.6h0M767.0 423.6h0M770.8 430.6h0M774.5 437.7h0M778.3 444.7h0M782.0 451.7h0M785.8 458.8h0M750.0 407.5h0M754.6 414.8h0M759.3 422.1h0M763.9 429.4h0M768.6 436.6h0M773.2 443.9h0M777.9 451.2h0M782.5 458.5h0" fill="none" stroke="#FF8A0A" stroke-width="3.2" stroke-linecap="square"/>
<polygon points="877.5,470.0 869.0,475.7 860.1,481.1 850.7,486.2 840.8,491.0 830.4,495.5 819.6,499.8 808.4,503.7 796.6,507.3 784.4,510.7 771.7,513.8 758.6,516.5 745.0,519.0 745.0,519.0 748.1,515.2 751.2,511.4 754.4,507.6 757.5,503.8 760.6,500.0 763.8,496.2 766.9,492.5 770.0,488.7 773.1,484.9 776.2,481.1 779.4,477.3 782.5,473.5 782.5,473.5 787.1,473.6 791.8,473.7 796.4,473.8 801.0,473.8 805.6,473.9 810.2,474.0 814.9,474.1 819.5,474.2 824.1,474.2 828.8,474.3 833.4,474.4 838.0,474.5 838.0,474.5 841.3,474.1 844.6,473.8 847.9,473.4 851.2,473.0 854.5,472.6 857.8,472.2 861.0,471.9 864.3,471.5 867.6,471.1 870.9,470.8 874.2,470.4 877.5,470.0" fill="#8a6a44"/><defs><path id="ms8" d="M877.5 470.0L874.7 470.3L871.9 470.6L869.0 471.0L866.2 471.3L863.4 471.6L860.6 471.9L857.8 472.2L854.9 472.6L852.1 472.9L849.3 473.2L846.5 473.5L843.6 473.9L840.8 474.2L838.0 474.5M871.6 474.0L868.9 474.1L866.3 474.1L863.7 474.1L861.0 474.2L858.4 474.2L855.8 474.2L853.1 474.2L850.5 474.3L847.9 474.3L845.3 474.3L842.6 474.4L840.0 474.4L837.4 474.4L834.7 474.4M865.4 477.9L863.0 477.7L860.5 477.4L858.1 477.2L855.7 476.9L853.3 476.7L850.9 476.4L848.4 476.2L846.0 475.9L843.6 475.7L841.2 475.4L838.7 475.1L836.3 474.9L833.9 474.6L831.5 474.4M859.0 481.7L856.8 481.2L854.6 480.6L852.4 480.1L850.2 479.6L848.0 479.1L845.8 478.5L843.6 478.0L841.4 477.5L839.2 477.0L837.0 476.4L834.8 475.9L832.6 475.4L830.4 474.9L828.2 474.3M852.4 485.3L850.4 484.5L848.4 483.7L846.5 482.9L844.5 482.2L842.6 481.4L840.6 480.6L838.6 479.8L836.7 479.0L834.7 478.2L832.8 477.4L830.8 476.6L828.9 475.8L826.9 475.1L824.9 474.3M845.5 488.8L843.8 487.7L842.1 486.7L840.4 485.7L838.7 484.6L837.0 483.6L835.3 482.5L833.6 481.5L831.9 480.4L830.2 479.4L828.5 478.4L826.8 477.3L825.1 476.3L823.4 475.2L821.7 474.2M838.4 492.1L837.0 490.8L835.5 489.5L834.1 488.2L832.7 487.0L831.3 485.7L829.8 484.4L828.4 483.1L827.0 481.8L825.5 480.6L824.1 479.3L822.7 478.0L821.3 476.7L819.8 475.4L818.4 474.1M831.1 495.3L829.9 493.8L828.8 492.2L827.6 490.7L826.5 489.2L825.4 487.7L824.2 486.2L823.1 484.7L822.0 483.2L820.8 481.7L819.7 480.1L818.6 478.6L817.4 477.1L816.3 475.6L815.1 474.1M823.5 498.3L822.7 496.6L821.8 494.8L821.0 493.1L820.2 491.4L819.3 489.6L818.5 487.9L817.7 486.2L816.9 484.4L816.0 482.7L815.2 481.0L814.4 479.2L813.5 477.5L812.7 475.8L811.9 474.0M815.7 501.2L815.2 499.2L814.7 497.3L814.2 495.3L813.7 493.4L813.2 491.5L812.7 489.5L812.2 487.6L811.7 485.6L811.1 483.7L810.6 481.7L810.1 479.8L809.6 477.9L809.1 475.9L808.6 474.0M807.7 503.9L807.5 501.8L807.3 499.6L807.2 497.5L807.0 495.3L806.8 493.2L806.7 491.1L806.5 488.9L806.3 486.8L806.2 484.6L806.0 482.5L805.9 480.3L805.7 478.2L805.5 476.1L805.4 473.9M799.4 506.5L799.6 504.2L799.8 501.8L800.0 499.5L800.2 497.2L800.4 494.8L800.6 492.5L800.8 490.2L800.9 487.8L801.1 485.5L801.3 483.2L801.5 480.8L801.7 478.5L801.9 476.2L802.1 473.9M790.9 508.9L791.5 506.4L792.1 503.9L792.6 501.4L793.2 498.9L793.7 496.4L794.3 493.9L794.9 491.4L795.4 488.9L796.0 486.3L796.6 483.8L797.1 481.3L797.7 478.8L798.3 476.3L798.8 473.8M782.2 511.2L783.2 508.6L784.1 505.9L785.1 503.2L786.0 500.5L787.0 497.9L787.9 495.2L788.9 492.5L789.8 489.8L790.8 487.1L791.7 484.5L792.7 481.8L793.7 479.1L794.6 476.4L795.6 473.7M773.3 513.4L774.6 510.6L776.0 507.7L777.3 504.9L778.7 502.1L780.1 499.2L781.4 496.4L782.8 493.5L784.1 490.7L785.5 487.9L786.9 485.0L788.2 482.2L789.6 479.4L790.9 476.5L792.3 473.7M764.1 515.4L765.8 512.4L767.6 509.4L769.4 506.5L771.2 503.5L773.0 500.5L774.8 497.5L776.5 494.5L778.3 491.5L780.1 488.5L781.9 485.6L783.7 482.6L785.5 479.6L787.2 476.6L789.0 473.6M754.6 517.3L756.9 514.2L759.1 511.0L761.3 507.9L763.5 504.8L765.8 501.7L768.0 498.5L770.2 495.4L772.4 492.3L774.7 489.2L776.9 486.1L779.1 482.9L781.3 479.8L783.5 476.7L785.8 473.6M745.0 519.0L747.7 515.8L750.4 512.5L753.0 509.2L755.7 506.0L758.4 502.8L761.1 499.5L763.8 496.2L766.4 493.0L769.1 489.8L771.8 486.5L774.5 483.2L777.1 480.0L779.8 476.8L782.5 473.5M877.5 470.0L874.6 472.0L871.6 474.0L868.5 476.0L865.4 477.9L862.2 479.8L859.0 481.7L855.7 483.5L852.4 485.3L848.9 487.1L845.5 488.8L842.0 490.4L838.4 492.1L834.7 493.7L831.1 495.3L827.3 496.8L823.5 498.3L819.6 499.8L815.7 501.2L811.7 502.6L807.7 503.9L803.6 505.2L799.4 506.5L795.2 507.7L790.9 508.9L786.6 510.1L782.2 511.2L777.8 512.3L773.3 513.4L768.7 514.4L764.1 515.4L759.4 516.4L754.6 517.3L749.9 518.2L745.0 519.0M871.9 470.6L869.1 472.4L866.3 474.1L863.4 475.8L860.5 477.4L857.6 479.1L854.6 480.6L851.5 482.2L848.4 483.7L845.3 485.2L842.1 486.7L838.8 488.1L835.5 489.5L832.2 490.9L828.8 492.2L825.3 493.5L821.8 494.8L818.3 496.1L814.7 497.3L811.0 498.5L807.3 499.6L803.6 500.7L799.8 501.8L796.0 502.9L792.1 503.9L788.1 504.9L784.1 505.9L780.1 506.8L776.0 507.7L771.8 508.6L767.6 509.4L763.4 510.3L759.1 511.0L754.8 511.8L750.4 512.5M866.2 471.3L863.6 472.7L861.0 474.2L858.4 475.6L855.7 476.9L853.0 478.3L850.2 479.6L847.4 480.9L844.5 482.2L841.6 483.4L838.7 484.6L835.7 485.8L832.7 487.0L829.6 488.1L826.5 489.2L823.4 490.3L820.2 491.4L816.9 492.4L813.7 493.4L810.4 494.4L807.0 495.3L803.6 496.3L800.2 497.2L796.7 498.1L793.2 498.9L789.6 499.7L786.0 500.5L782.4 501.3L778.7 502.1L775.0 502.8L771.2 503.5L767.4 504.1L763.5 504.8L759.6 505.4L755.7 506.0M860.6 471.9L858.2 473.1L855.8 474.2L853.3 475.3L850.9 476.4L848.3 477.5L845.8 478.5L843.2 479.6L840.6 480.6L838.0 481.6L835.3 482.5L832.6 483.5L829.8 484.4L827.0 485.3L824.2 486.2L821.4 487.1L818.5 487.9L815.6 488.7L812.7 489.5L809.7 490.3L806.7 491.1L803.6 491.8L800.6 492.5L797.5 493.2L794.3 493.9L791.1 494.5L787.9 495.2L784.7 495.8L781.4 496.4L778.1 497.0L774.8 497.5L771.4 498.0L768.0 498.5L764.5 499.0L761.1 499.5M854.9 472.6L852.7 473.4L850.5 474.3L848.3 475.1L846.0 475.9L843.7 476.7L841.4 477.5L839.1 478.2L836.7 479.0L834.3 479.7L831.9 480.4L829.4 481.2L827.0 481.8L824.5 482.5L822.0 483.2L819.4 483.8L816.9 484.4L814.3 485.0L811.7 485.6L809.0 486.2L806.3 486.8L803.7 487.3L800.9 487.8L798.2 488.4L795.4 488.9L792.6 489.3L789.8 489.8L787.0 490.3L784.1 490.7L781.2 491.1L778.3 491.5L775.4 491.9L772.4 492.3L769.4 492.7L766.4 493.0M849.3 473.2L847.3 473.8L845.3 474.3L843.2 474.9L841.2 475.4L839.1 475.9L837.0 476.4L834.9 476.9L832.8 477.4L830.6 477.9L828.5 478.4L826.3 478.8L824.1 479.3L821.9 479.7L819.7 480.1L817.5 480.6L815.2 481.0L812.9 481.4L810.6 481.7L808.3 482.1L806.0 482.5L803.7 482.8L801.3 483.2L799.0 483.5L796.6 483.8L794.2 484.2L791.7 484.5L789.3 484.7L786.9 485.0L784.4 485.3L781.9 485.6L779.4 485.8L776.9 486.1L774.3 486.3L771.8 486.5M843.6 473.9L841.8 474.1L840.0 474.4L838.2 474.6L836.3 474.9L834.5 475.1L832.6 475.4L830.7 475.6L828.9 475.8L827.0 476.1L825.1 476.3L823.2 476.5L821.3 476.7L819.3 476.9L817.4 477.1L815.5 477.3L813.5 477.5L811.6 477.7L809.6 477.9L807.7 478.0L805.7 478.2L803.7 478.4L801.7 478.5L799.7 478.7L797.7 478.8L795.7 479.0L793.7 479.1L791.6 479.2L789.6 479.4L787.5 479.5L785.5 479.6L783.4 479.7L781.3 479.8L779.2 479.9L777.1 480.0M838.0 474.5L836.4 474.5L834.7 474.4L833.1 474.4L831.5 474.4L829.8 474.4L828.2 474.3L826.6 474.3L824.9 474.3L823.3 474.2L821.7 474.2L820.0 474.2L818.4 474.1L816.8 474.1L815.1 474.1L813.5 474.1L811.9 474.0L810.2 474.0L808.6 474.0L807.0 473.9L805.4 473.9L803.7 473.9L802.1 473.9L800.5 473.8L798.8 473.8L797.2 473.8L795.6 473.7L793.9 473.7L792.3 473.7L790.7 473.6L789.0 473.6L787.4 473.6L785.8 473.6L784.1 473.5L782.5 473.5"/></defs><use href="#ms8" fill="none" stroke="#1c0a00" stroke-width="2.6"/><use href="#ms8" fill="none" stroke="#ffcc70" stroke-width="0.8"/><polygon points="877.5,470.0 869.0,475.7 860.1,481.1 850.7,486.2 840.8,491.0 830.4,495.5 819.6,499.8 808.4,503.7 796.6,507.3 784.4,510.7 771.7,513.8 758.6,516.5 745.0,519.0 745.0,519.0 748.1,515.2 751.2,511.4 754.4,507.6 757.5,503.8 760.6,500.0 763.8,496.2 766.9,492.5 770.0,488.7 773.1,484.9 776.2,481.1 779.4,477.3 782.5,473.5 782.5,473.5 787.1,473.6 791.8,473.7 796.4,473.8 801.0,473.8 805.6,473.9 810.2,474.0 814.9,474.1 819.5,474.2 824.1,474.2 828.8,474.3 833.4,474.4 838.0,474.5 838.0,474.5 841.3,474.1 844.6,473.8 847.9,473.4 851.2,473.0 854.5,472.6 857.8,472.2 861.0,471.9 864.3,471.5 867.6,471.1 870.9,470.8 874.2,470.4 877.5,470.0" fill="none" stroke="#FF8A0A" stroke-width="1.8" stroke-linejoin="round"/><path d="M877.5 470.0h0M871.9 470.6h0M866.2 471.3h0M860.6 471.9h0M854.9 472.6h0M849.3 473.2h0M843.6 473.9h0M838.0 474.5h0M871.6 474.0h0M866.3 474.1h0M861.0 474.2h0M855.8 474.2h0M850.5 474.3h0M845.3 474.3h0M840.0 474.4h0M834.7 474.4h0M865.4 477.9h0M860.5 477.4h0M855.7 476.9h0M850.9 476.4h0M846.0 475.9h0M841.2 475.4h0M836.3 474.9h0M831.5 474.4h0M859.0 481.7h0M854.6 480.6h0M850.2 479.6h0M845.8 478.5h0M841.4 477.5h0M837.0 476.4h0M832.6 475.4h0M828.2 474.3h0M852.4 485.3h0M848.4 483.7h0M844.5 482.2h0M840.6 480.6h0M836.7 479.0h0M832.8 477.4h0M828.9 475.8h0M824.9 474.3h0M845.5 488.8h0M842.1 486.7h0M838.7 484.6h0M835.3 482.5h0M831.9 480.4h0M828.5 478.4h0M825.1 476.3h0M821.7 474.2h0M838.4 492.1h0M835.5 489.5h0M832.7 487.0h0M829.8 484.4h0M827.0 481.8h0M824.1 479.3h0M821.3 476.7h0M818.4 474.1h0M831.1 495.3h0M828.8 492.2h0M826.5 489.2h0M824.2 486.2h0M822.0 483.2h0M819.7 480.1h0M817.4 477.1h0M815.1 474.1h0M823.5 498.3h0M821.8 494.8h0M820.2 491.4h0M818.5 487.9h0M816.9 484.4h0M815.2 481.0h0M813.5 477.5h0M811.9 474.0h0M815.7 501.2h0M814.7 497.3h0M813.7 493.4h0M812.7 489.5h0M811.7 485.6h0M810.6 481.7h0M809.6 477.9h0M808.6 474.0h0M807.7 503.9h0M807.3 499.6h0M807.0 495.3h0M806.7 491.1h0M806.3 486.8h0M806.0 482.5h0M805.7 478.2h0M805.4 473.9h0M799.4 506.5h0M799.8 501.8h0M800.2 497.2h0M800.6 492.5h0M800.9 487.8h0M801.3 483.2h0M801.7 478.5h0M802.1 473.9h0M790.9 508.9h0M792.1 503.9h0M793.2 498.9h0M794.3 493.9h0M795.4 488.9h0M796.6 483.8h0M797.7 478.8h0M798.8 473.8h0M782.2 511.2h0M784.1 505.9h0M786.0 500.5h0M787.9 495.2h0M789.8 489.8h0M791.7 484.5h0M793.7 479.1h0M795.6 473.7h0M773.3 513.4h0M776.0 507.7h0M778.7 502.1h0M781.4 496.4h0M784.1 490.7h0M786.9 485.0h0M789.6 479.4h0M792.3 473.7h0M764.1 515.4h0M767.6 509.4h0M771.2 503.5h0M774.8 497.5h0M778.3 491.5h0M781.9 485.6h0M785.5 479.6h0M789.0 473.6h0M754.6 517.3h0M759.1 511.0h0M763.5 504.8h0M768.0 498.5h0M772.4 492.3h0M776.9 486.1h0M781.3 479.8h0M785.8 473.6h0M745.0 519.0h0M750.4 512.5h0M755.7 506.0h0M761.1 499.5h0M766.4 493.0h0M771.8 486.5h0M777.1 480.0h0M782.5 473.5h0" fill="none" stroke="#FF8A0A" stroke-width="3.2" stroke-linecap="square"/>
<polygon points="877.5,470 838,462.5 782,458 782,474 838,475" fill="#FF8A0A"/>
<path d="M203 375L222 378M204 379L214 381M250 373L258 376M470 376L497 372M200 386.5H300M330 366.5H430M480 455L510 452M500 460L530 456M640 451L643 466M695 453L692 468M750 460L760 457M772 464L795 460M470 463.5H560M560 449.5H640" stroke="#2a1000" stroke-width="0.9" fill="none" opacity="0.8"/>
<rect x="110" y="495" width="116" height="31" fill="#FF8A0A"/><circle cx="107.5" cy="497" r="6" fill="#FF8A0A"/><circle cx="228.5" cy="497" r="6" fill="#FF8A0A"/>
<rect x="96.5" y="539" width="390.5" height="11" fill="#FF8A0A"/>
<path d="M98 542H480M98 545H480M98 547.5H480" stroke="#3a1c00" stroke-width="0.8" opacity="0.8"/>
<rect x="491" y="540" width="141.5" height="9" fill="#FF8A0A"/>
<rect x="637" y="539" width="215.5" height="9" fill="#FF8A0A"/>
<rect x="96.5" y="568" width="437.5" height="12" fill="#FF8A0A"/>
<path d="M98 571H490M98 574H490M98 577H490" stroke="#3a1c00" stroke-width="0.8" opacity="0.8"/>
<path d="M458 520.5C468.3 520.2 496.3 519.7 520 519C543.7 518.3 580.0 516.8 600 516.5C620.0 516.2 627.9 516.2 640 517C652.1 517.8 667.1 520.3 672.5 521" fill="none" stroke="#FF8A0A" stroke-width="9" stroke-linejoin="round" />
<path d="M544 576C553.3 575.7 580.7 575.0 600 574C619.3 573.0 643.3 571.1 660 570C676.7 568.9 686.7 567.6 700 567.5C713.3 567.4 721.7 568.8 740 569.5C758.3 570.2 798.3 571.6 810 572" fill="none" stroke="#FF8A0A" stroke-width="8" stroke-linejoin="round" />
<ellipse cx="700" cy="567" rx="9" ry="6" fill="#FF8A0A"/>
<path d="M494 542.5H630M494 546.5H630M640 541.5H850M640 545.5H850" stroke="#2a1000" stroke-width="1.3" fill="none" opacity="0.85" stroke-dasharray="5.2 2.8"/>
<path d="M462 518.6L520 517L600 514.6L640 515L670 518.8M462 522.6L520 521L600 518.6L640 519L670 522.8" stroke="#2a1000" stroke-width="1.3" fill="none" opacity="0.85" stroke-dasharray="4.4 2.4"/>
<path d="M548 574L600 572.2L660 568.2L690 566M712 566.5L740 567.6L808 570M548 577.6L600 575.8L660 571.8L690 569.5M712 570L740 571.2L808 573.6" stroke="#2a1000" stroke-width="1.3" fill="none" opacity="0.85" stroke-dasharray="4.2 2.4"/>
<path d="M494 571.5H531M494 575.5H531" stroke="#2a1000" stroke-width="1.3" fill="none" opacity="0.85" stroke-dasharray="6 3"/>
<polygon points="372.0,623.8 373.8,620.7 381.4,619.5 385.8,620.7 383.2,613.2 385.1,610.1 390.1,611.3 394.5,614.4 393.9,606.3 396.4,604.0 401.4,605.0 405.8,610.7 407.7,606.3 410.8,604.0 415.2,605.7 419.0,610.7 421.5,606.3 425.2,605.0 429.0,607.6 431.5,613.2 435.3,611.3 439.7,611.9 442.8,617.0 442.2,620.7 445.9,622.0 447.2,626.4 445.3,631.4 444.7,640.1 450.3,646.4 449.7,649.5 446.6,650.8 441.5,648.9 442.8,656.4 443.4,665.2 442.8,675.2 440.3,680.3 435.3,683.4 436.5,689.0 441.5,696.6 446.6,702.8 450.3,711.6 451.0,708.2 454.4,731.8 451.0,752.1 442.5,772.3 427.4,792.6 420.3,800.0 412.8,808.8 400.3,822.6 387.8,837.6 377.7,850.1 370.2,856.4 367.1,865.2 365.2,877.7 364.6,890.3 364.6,901.5 368.3,907.2 377.7,910.9 386.5,915.3 389.0,919.7 386.5,922.9 380.2,921.0 377.7,922.2 379.0,925.4 367.7,925.4 360.2,923.5 352.7,920.3 345.1,924.1 341.4,925.4 340.1,920.3 334.5,918.5 334.1,912.8 338.9,906.6 344.5,900.3 343.2,897.8 337.0,896.5 336.4,893.4 343.9,889.6 344.5,877.7 343.9,852.7 337.6,850.1 325.1,848.3 312.5,845.1 300.0,842.6 278.8,839.8 251.8,836.5 231.5,826.3 220.7,820.0 217.2,811.8 213.7,810.1 212.0,801.4 209.4,799.7 206.8,792.8 203.3,791.0 201.6,782.3 198.1,787.5 194.6,785.8 193.8,777.1 197.2,766.7 192.9,771.9 192.0,780.6 188.6,784.1 184.2,780.6 181.6,771.9 183.4,761.5 187.7,752.8 184.2,752.8 179.0,759.8 177.3,770.2 173.8,772.8 172.1,765.0 173.8,751.1 178.1,740.7 174.7,742.4 170.3,751.1 168.6,761.5 165.1,765.8 161.7,759.8 160.8,747.6 163.4,737.2 162.5,734.6 157.3,738.9 153.0,751.1 152.1,765.0 149.5,770.2 146.0,766.7 146.0,752.8 148.6,737.2 152.1,726.8 154.7,721.6 152.1,709.4 150.4,699.0 146.0,696.4 140.8,700.8 137.4,712.9 137.4,726.8 140.0,740.7 138.2,745.0 134.8,742.4 130.4,730.3 128.3,716.4 129.5,702.5 135.6,686.9 146.0,673.0 159.9,662.6 177.3,656.5 198.1,655.6 217.2,659.1 234.6,666.0 255.2,681.2 275.4,708.2 295.7,735.2 312.6,745.3 329.4,743.6 346.3,731.8 358,714 365,696.6 371.3,682.8 375.7,671.5 381.4,660 387.6,650 391.4,642 383.9,638.3 377.6,633.2 373.2,628.2" fill="#FF8A0A" stroke="#FF8A0A" stroke-width="1.5" stroke-linejoin="round"/>
<polygon points="567.0,616.8 565.2,613.7 557.6,612.5 553.2,613.7 555.8,606.2 553.9,603.1 548.9,604.3 544.5,607.4 545.1,599.3 542.6,597.0 537.6,598.0 533.2,603.7 531.3,599.3 528.2,597.0 523.8,598.7 520.0,603.7 517.5,599.3 513.8,598.0 510.0,600.6 507.5,606.2 503.7,604.3 499.3,604.9 496.2,610.0 496.8,613.7 493.1,615.0 491.8,619.4 493.7,624.4 494.3,633.1 488.7,639.4 489.3,642.5 492.4,643.8 497.5,641.9 496.2,649.4 495.6,658.2 496.2,668.2 498.7,673.3 503.7,676.4 502.5,682.0 497.5,689.6 492.4,695.8 488.7,704.6 486,700 481.5,712 480,728 481,745 485,760 502.8,779.7 519.2,797.7 535.6,815.7 547.0,830.5 556.9,845.2 561.8,858.4 561.8,874.8 561.0,887.9 558.5,894.4 547.0,901.0 537.2,905.9 534.8,910.8 542.1,911.6 545.4,917.4 552.0,918.2 561.8,914.9 571.6,914.1 578.2,919.0 582.3,919.0 583.1,910.8 588.0,908.4 588.9,904.3 583.1,897.7 581.5,891.1 588.0,891.1 588.9,887.9 583.1,883.0 583.1,866.6 583.9,848.5 594.6,846.1 611.0,844.4 627.4,841.1 650.0,838.7 660.2,832.8 687.2,829.5 707.5,819.3 718.3,813.0 721.8,804.8 725.3,803.1 727.0,794.4 729.6,792.7 732.2,785.8 735.7,784.0 737.4,775.3 740.9,780.5 744.4,778.8 745.2,770.1 741.8,759.7 746.1,764.9 747.0,773.6 750.4,777.1 754.8,773.6 757.4,764.9 755.6,754.5 751.3,745.8 754.8,745.8 760.0,752.8 761.7,763.2 765.2,765.8 766.9,758.0 765.2,744.1 760.9,733.7 764.3,735.4 768.7,744.1 770.4,754.5 773.9,758.8 777.3,752.8 778.2,740.6 775.6,730.2 776.5,727.6 781.7,731.9 786.0,744.1 786.9,758.0 789.5,763.2 793.0,759.7 793.0,745.8 790.4,730.2 786.9,719.8 784.3,714.6 786.9,702.4 788.6,692.0 793.0,689.4 798.2,693.8 801.6,705.9 801.6,719.8 799.0,733.7 800.8,738.0 804.2,735.4 808.6,723.3 810.7,709.4 809.5,695.5 803.4,679.9 793.0,666.0 779.1,655.6 761.7,649.5 740.9,648.6 721.8,652.1 704.4,659.0 683.8,674.2 663.6,701.2 643.3,728.2 626.4,738.3 609.6,736.6 592.7,724.8 581,707 574,689.6 567.7,675.8 563.3,664.5 557.6,653 551.4,643 547.6,635 555.1,631.3 561.4,626.2 565.8,621.2" fill="#FF8A0A" stroke="#FF8A0A" stroke-width="1.5" stroke-linejoin="round"/>
<clipPath id="cuv1"><polygon points="372.0,623.8 373.8,620.7 381.4,619.5 385.8,620.7 383.2,613.2 385.1,610.1 390.1,611.3 394.5,614.4 393.9,606.3 396.4,604.0 401.4,605.0 405.8,610.7 407.7,606.3 410.8,604.0 415.2,605.7 419.0,610.7 421.5,606.3 425.2,605.0 429.0,607.6 431.5,613.2 435.3,611.3 439.7,611.9 442.8,617.0 442.2,620.7 445.9,622.0 447.2,626.4 445.3,631.4 444.7,640.1 450.3,646.4 449.7,649.5 446.6,650.8 441.5,648.9 442.8,656.4 443.4,665.2 442.8,675.2 440.3,680.3 435.3,683.4 436.5,689.0 441.5,696.6 446.6,702.8 450.3,711.6 451.0,708.2 454.4,731.8 451.0,752.1 442.5,772.3 427.4,792.6 420.3,800.0 412.8,808.8 400.3,822.6 387.8,837.6 377.7,850.1 370.2,856.4 367.1,865.2 365.2,877.7 364.6,890.3 364.6,901.5 368.3,907.2 377.7,910.9 386.5,915.3 389.0,919.7 386.5,922.9 380.2,921.0 377.7,922.2 379.0,925.4 367.7,925.4 360.2,923.5 352.7,920.3 345.1,924.1 341.4,925.4 340.1,920.3 334.5,918.5 334.1,912.8 338.9,906.6 344.5,900.3 343.2,897.8 337.0,896.5 336.4,893.4 343.9,889.6 344.5,877.7 343.9,852.7 337.6,850.1 325.1,848.3 312.5,845.1 300.0,842.6 278.8,839.8 251.8,836.5 231.5,826.3 220.7,820.0 217.2,811.8 213.7,810.1 212.0,801.4 209.4,799.7 206.8,792.8 203.3,791.0 201.6,782.3 198.1,787.5 194.6,785.8 193.8,777.1 197.2,766.7 192.9,771.9 192.0,780.6 188.6,784.1 184.2,780.6 181.6,771.9 183.4,761.5 187.7,752.8 184.2,752.8 179.0,759.8 177.3,770.2 173.8,772.8 172.1,765.0 173.8,751.1 178.1,740.7 174.7,742.4 170.3,751.1 168.6,761.5 165.1,765.8 161.7,759.8 160.8,747.6 163.4,737.2 162.5,734.6 157.3,738.9 153.0,751.1 152.1,765.0 149.5,770.2 146.0,766.7 146.0,752.8 148.6,737.2 152.1,726.8 154.7,721.6 152.1,709.4 150.4,699.0 146.0,696.4 140.8,700.8 137.4,712.9 137.4,726.8 140.0,740.7 138.2,745.0 134.8,742.4 130.4,730.3 128.3,716.4 129.5,702.5 135.6,686.9 146.0,673.0 159.9,662.6 177.3,656.5 198.1,655.6 217.2,659.1 234.6,666.0 255.2,681.2 275.4,708.2 295.7,735.2 312.6,745.3 329.4,743.6 346.3,731.8 358,714 365,696.6 371.3,682.8 375.7,671.5 381.4,660 387.6,650 391.4,642 383.9,638.3 377.6,633.2 373.2,628.2"/></clipPath><clipPath id="cuv2"><polygon points="567.0,616.8 565.2,613.7 557.6,612.5 553.2,613.7 555.8,606.2 553.9,603.1 548.9,604.3 544.5,607.4 545.1,599.3 542.6,597.0 537.6,598.0 533.2,603.7 531.3,599.3 528.2,597.0 523.8,598.7 520.0,603.7 517.5,599.3 513.8,598.0 510.0,600.6 507.5,606.2 503.7,604.3 499.3,604.9 496.2,610.0 496.8,613.7 493.1,615.0 491.8,619.4 493.7,624.4 494.3,633.1 488.7,639.4 489.3,642.5 492.4,643.8 497.5,641.9 496.2,649.4 495.6,658.2 496.2,668.2 498.7,673.3 503.7,676.4 502.5,682.0 497.5,689.6 492.4,695.8 488.7,704.6 486,700 481.5,712 480,728 481,745 485,760 502.8,779.7 519.2,797.7 535.6,815.7 547.0,830.5 556.9,845.2 561.8,858.4 561.8,874.8 561.0,887.9 558.5,894.4 547.0,901.0 537.2,905.9 534.8,910.8 542.1,911.6 545.4,917.4 552.0,918.2 561.8,914.9 571.6,914.1 578.2,919.0 582.3,919.0 583.1,910.8 588.0,908.4 588.9,904.3 583.1,897.7 581.5,891.1 588.0,891.1 588.9,887.9 583.1,883.0 583.1,866.6 583.9,848.5 594.6,846.1 611.0,844.4 627.4,841.1 650.0,838.7 660.2,832.8 687.2,829.5 707.5,819.3 718.3,813.0 721.8,804.8 725.3,803.1 727.0,794.4 729.6,792.7 732.2,785.8 735.7,784.0 737.4,775.3 740.9,780.5 744.4,778.8 745.2,770.1 741.8,759.7 746.1,764.9 747.0,773.6 750.4,777.1 754.8,773.6 757.4,764.9 755.6,754.5 751.3,745.8 754.8,745.8 760.0,752.8 761.7,763.2 765.2,765.8 766.9,758.0 765.2,744.1 760.9,733.7 764.3,735.4 768.7,744.1 770.4,754.5 773.9,758.8 777.3,752.8 778.2,740.6 775.6,730.2 776.5,727.6 781.7,731.9 786.0,744.1 786.9,758.0 789.5,763.2 793.0,759.7 793.0,745.8 790.4,730.2 786.9,719.8 784.3,714.6 786.9,702.4 788.6,692.0 793.0,689.4 798.2,693.8 801.6,705.9 801.6,719.8 799.0,733.7 800.8,738.0 804.2,735.4 808.6,723.3 810.7,709.4 809.5,695.5 803.4,679.9 793.0,666.0 779.1,655.6 761.7,649.5 740.9,648.6 721.8,652.1 704.4,659.0 683.8,674.2 663.6,701.2 643.3,728.2 626.4,738.3 609.6,736.6 592.7,724.8 581,707 574,689.6 567.7,675.8 563.3,664.5 557.6,653 551.4,643 547.6,635 555.1,631.3 561.4,626.2 565.8,621.2"/></clipPath>
<g clip-path="url(#cuv1)"><path d="M138.0 710.4L143.8 695.6L153.7 682.4L166.9 672.5L183.4 666.7L203.2 665.8L221.3 669.1L237.9 675.7L257.4 690.1L276.6 715.8M146.5 718.2L152.0 704.2L161.4 691.7L173.9 682.3L189.6 676.9L208.3 676.0L225.5 679.2L241.1 685.4L259.7 699.1L277.9 723.4M155.1 726.1L160.3 712.9L169.1 701.0L180.9 692.2L195.7 687.0L213.4 686.3L229.6 689.2L244.4 695.1L261.9 708.0L279.1 731.0M163.6 734.0L168.5 721.5L176.8 710.4L187.9 702.1L201.8 697.2L218.5 696.5L233.8 699.3L247.7 704.8L264.2 717.0L280.3 738.6M172.1 741.9L176.7 730.2L184.5 719.8L194.9 712.0L208.0 707.4L223.6 706.7L237.9 709.3L250.9 714.5L266.4 725.9L281.5 746.2M180.7 749.8L184.9 738.8L192.2 729.1L201.9 721.8L214.1 717.5L228.7 716.9L242.0 719.4L254.2 724.2L268.6 734.8L282.8 753.7M189.2 757.6L193.1 747.5L199.9 738.5L208.9 731.7L220.2 727.7L233.8 727.1L246.2 729.4L257.5 733.9L270.9 743.8L284.0 761.3M197.7 765.5L201.4 756.1L207.6 747.8L215.9 741.6L226.4 737.9L238.9 737.4L250.3 739.5L260.8 743.6L273.1 752.7L285.2 768.9M206.2 773.4L209.6 764.8L215.3 757.1L222.9 751.4L232.5 748.1L244.0 747.6L254.5 749.5L264.0 753.3L275.4 761.7L286.5 776.5M214.8 781.2L217.8 773.5L223.0 766.5L229.9 761.3L238.7 758.2L249.1 757.8L258.6 759.5L267.3 763.0L277.6 770.6L287.7 784.1M223.3 789.1L226.0 782.1L230.7 775.9L237.0 771.2L244.8 768.4L254.1 768.0L262.7 769.6L270.6 772.7L279.8 779.5L288.9 791.7M231.8 797.0L234.2 790.8L238.4 785.2L244.0 781.0L250.9 778.6L259.2 778.2L266.9 779.6L273.8 782.4L282.1 788.5L290.2 799.3M240.3 804.9L242.5 799.4L246.1 794.5L251.0 790.9L257.1 788.8L264.3 788.5L271.0 789.7L277.1 792.1L284.3 797.4L291.4 806.9M248.9 812.8L250.7 808.1L253.8 803.9L258.0 800.8L263.2 799.0L269.4 798.7L275.2 799.7L280.4 801.8L286.6 806.4L292.6 814.5M257.4 820.6L258.9 816.7L261.5 813.2L265.0 810.6L269.3 809.1L274.5 808.9L279.3 809.8L283.6 811.5L288.8 815.3L293.9 822.0M265.9 828.5L267.1 825.4L269.2 822.6L272.0 820.5L275.5 819.3L279.6 819.1L283.4 819.8L286.9 821.2L291.0 824.2L295.1 829.6" fill="none" stroke="#2a1000" stroke-width="1.9" stroke-dasharray="2.4 1.4" opacity="0.85"/><clipPath id="creg"><path d="M395 640L460 700L460 760L400 830L372 892L345 892L345 845L305 838L285 800L300 765L335 745L362 700Z"/></clipPath><g clip-path="url(#creg)"><path d="M420.4 655.3L438.9 691.3L447.4 708.3L450.8 732.1L447.4 752.3L438.9 772.6L423.8 792.9L403.4 806.3L390.0 833.3L368.4 856.3L362.4 880.3M416.8 655.6L435.3 691.6L443.8 708.6L447.2 732.4L443.8 752.6L435.3 772.9L420.2 793.2L399.8 806.6L386.4 833.6L364.8 856.6L358.8 880.6M413.2 655.9L431.7 691.9L440.2 708.9L443.6 732.7L440.2 752.9L431.7 773.2L416.6 793.5L396.2 806.9L382.8 833.9L361.2 856.9L355.2 880.9M409.6 656.2L428.1 692.2L436.6 709.2L440.0 733.0L436.6 753.2L428.1 773.5L413.0 793.8L392.6 807.2L379.2 834.2L357.6 857.2L351.6 881.2M406.0 656.5L424.5 692.5L433.0 709.5L436.4 733.3L433.0 753.5L424.5 773.8L409.4 794.1L389.0 807.5L375.6 834.5L354.0 857.5L348.0 881.5M402.4 656.8L420.9 692.8L429.4 709.8L432.8 733.6L429.4 753.8L420.9 774.1L405.8 794.4L385.4 807.8L372.0 834.8L350.4 857.8L344.4 881.8M398.8 657.1L417.3 693.1L425.8 710.1L429.2 733.9L425.8 754.1L417.3 774.4L402.2 794.7L381.8 808.1L368.4 835.1L346.8 858.1L340.8 882.1M395.2 657.4L413.7 693.4L422.2 710.4L425.6 734.2L422.2 754.4L413.7 774.7L398.6 795.0L378.2 808.4L364.8 835.4L343.2 858.4L337.2 882.4M391.6 657.7L410.1 693.7L418.6 710.7L422.0 734.5L418.6 754.7L410.1 775.0L395.0 795.3L374.6 808.7L361.2 835.7L339.6 858.7L333.6 882.7M388.0 658.0L406.5 694.0L415.0 711.0L418.4 734.8L415.0 755.0L406.5 775.3L391.4 795.6L371.0 809.0L357.6 836.0L336.0 859.0L330.0 883.0M384.4 658.3L402.9 694.3L411.4 711.3L414.8 735.1L411.4 755.3L402.9 775.6L387.8 795.9L367.4 809.3L354.0 836.3L332.4 859.3L326.4 883.3M380.8 658.6L399.3 694.6L407.8 711.6L411.2 735.4L407.8 755.6L399.3 775.9L384.2 796.2L363.8 809.6L350.4 836.6L328.8 859.6L322.8 883.6M377.2 658.9L395.7 694.9L404.2 711.9L407.6 735.7L404.2 755.9L395.7 776.2L380.6 796.5L360.2 809.9L346.8 836.9L325.2 859.9L319.2 883.9M373.6 659.2L392.1 695.2L400.6 712.2L404.0 736.0L400.6 756.2L392.1 776.5L377.0 796.8L356.6 810.2L343.2 837.2L321.6 860.2L315.6 884.2M370.0 659.5L388.5 695.5L397.0 712.5L400.4 736.3L397.0 756.5L388.5 776.8L373.4 797.1L353.0 810.5L339.6 837.5L318.0 860.5L312.0 884.5M366.4 659.8L384.9 695.8L393.4 712.8L396.8 736.6L393.4 756.8L384.9 777.1L369.8 797.4L349.4 810.8L336.0 837.8L314.4 860.8L308.4 884.8M362.8 660.1L381.3 696.1L389.8 713.1L393.2 736.9L389.8 757.1L381.3 777.4L366.2 797.7L345.8 811.1L332.4 838.1L310.8 861.1L304.8 885.1M359.2 660.4L377.7 696.4L386.2 713.4L389.6 737.2L386.2 757.4L377.7 777.7L362.6 798.0L342.2 811.4L328.8 838.4L307.2 861.4L301.2 885.4M355.6 660.7L374.1 696.7L382.6 713.7L386.0 737.5L382.6 757.7L374.1 778.0L359.0 798.3L338.6 811.7L325.2 838.7L303.6 861.7L297.6 885.7M352.0 661.0L370.5 697.0L379.0 714.0L382.4 737.8L379.0 758.0L370.5 778.3L355.4 798.6L335.0 812.0L321.6 839.0L300.0 862.0L294.0 886.0M348.4 661.3L366.9 697.3L375.4 714.3L378.8 738.1L375.4 758.3L366.9 778.6L351.8 798.9L331.4 812.3L318.0 839.3L296.4 862.3L290.4 886.3M344.8 661.6L363.3 697.6L371.8 714.6L375.2 738.4L371.8 758.6L363.3 778.9L348.2 799.2L327.8 812.6L314.4 839.6L292.8 862.6L286.8 886.6M341.2 661.9L359.7 697.9L368.2 714.9L371.6 738.7L368.2 758.9L359.7 779.2L344.6 799.5L324.2 812.9L310.8 839.9L289.2 862.9L283.2 886.9M337.6 662.2L356.1 698.2L364.6 715.2L368.0 739.0L364.6 759.2L356.1 779.5L341.0 799.8L320.6 813.2L307.2 840.2L285.6 863.2L279.6 887.2M334.0 662.5L352.5 698.5L361.0 715.5L364.4 739.3L361.0 759.5L352.5 779.8L337.4 800.1L317.0 813.5L303.6 840.5L282.0 863.5L276.0 887.5M330.4 662.8L348.9 698.8L357.4 715.8L360.8 739.6L357.4 759.8L348.9 780.1L333.8 800.4L313.4 813.8L300.0 840.8L278.4 863.8L272.4 887.8M326.8 663.1L345.3 699.1L353.8 716.1L357.2 739.9L353.8 760.1L345.3 780.4L330.2 800.7L309.8 814.1L296.4 841.1L274.8 864.1L268.8 888.1M323.2 663.4L341.7 699.4L350.2 716.4L353.6 740.2L350.2 760.4L341.7 780.7L326.6 801.0L306.2 814.4L292.8 841.4L271.2 864.4L265.2 888.4M319.6 663.7L338.1 699.7L346.6 716.7L350.0 740.5L346.6 760.7L338.1 781.0L323.0 801.3L302.6 814.7L289.2 841.7L267.6 864.7L261.6 888.7" fill="none" stroke="#2a1000" stroke-width="1.4" stroke-dasharray="2 1.4" opacity="0.85"/></g><path d="M392.0 652.0L335.0 742.0M396.5 654.0L340.5 745.0M401.0 656.0L346.0 748.0M405.5 658.0L351.5 751.0M410.0 660.0L357.0 754.0M414.5 662.0L362.5 757.0M419.0 664.0L368.0 760.0M423.5 666.0L373.5 763.0M428.0 668.0L379.0 766.0" fill="none" stroke="#2a1000" stroke-width="1.2" stroke-dasharray="2 2" opacity="0.6"/><path d="M150 668Q175 652 238 668L240 677Q180 666 153 681Z" fill="#7a5a30" opacity="0.9"/><path d="M150 668Q175 652 238 668M153 681Q180 666 240 677" stroke="#2a1000" stroke-width="1" stroke-dasharray="3 2" fill="none"/></g>
<g clip-path="url(#cuv2)"><g transform="translate(939,-7) scale(-1,1)"><path d="M138.0 710.4L143.8 695.6L153.7 682.4L166.9 672.5L183.4 666.7L203.2 665.8L221.3 669.1L237.9 675.7L257.4 690.1L276.6 715.8M146.5 718.2L152.0 704.2L161.4 691.7L173.9 682.3L189.6 676.9L208.3 676.0L225.5 679.2L241.1 685.4L259.7 699.1L277.9 723.4M155.1 726.1L160.3 712.9L169.1 701.0L180.9 692.2L195.7 687.0L213.4 686.3L229.6 689.2L244.4 695.1L261.9 708.0L279.1 731.0M163.6 734.0L168.5 721.5L176.8 710.4L187.9 702.1L201.8 697.2L218.5 696.5L233.8 699.3L247.7 704.8L264.2 717.0L280.3 738.6M172.1 741.9L176.7 730.2L184.5 719.8L194.9 712.0L208.0 707.4L223.6 706.7L237.9 709.3L250.9 714.5L266.4 725.9L281.5 746.2M180.7 749.8L184.9 738.8L192.2 729.1L201.9 721.8L214.1 717.5L228.7 716.9L242.0 719.4L254.2 724.2L268.6 734.8L282.8 753.7M189.2 757.6L193.1 747.5L199.9 738.5L208.9 731.7L220.2 727.7L233.8 727.1L246.2 729.4L257.5 733.9L270.9 743.8L284.0 761.3M197.7 765.5L201.4 756.1L207.6 747.8L215.9 741.6L226.4 737.9L238.9 737.4L250.3 739.5L260.8 743.6L273.1 752.7L285.2 768.9M206.2 773.4L209.6 764.8L215.3 757.1L222.9 751.4L232.5 748.1L244.0 747.6L254.5 749.5L264.0 753.3L275.4 761.7L286.5 776.5M214.8 781.2L217.8 773.5L223.0 766.5L229.9 761.3L238.7 758.2L249.1 757.8L258.6 759.5L267.3 763.0L277.6 770.6L287.7 784.1M223.3 789.1L226.0 782.1L230.7 775.9L237.0 771.2L244.8 768.4L254.1 768.0L262.7 769.6L270.6 772.7L279.8 779.5L288.9 791.7M231.8 797.0L234.2 790.8L238.4 785.2L244.0 781.0L250.9 778.6L259.2 778.2L266.9 779.6L273.8 782.4L282.1 788.5L290.2 799.3M240.3 804.9L242.5 799.4L246.1 794.5L251.0 790.9L257.1 788.8L264.3 788.5L271.0 789.7L277.1 792.1L284.3 797.4L291.4 806.9M248.9 812.8L250.7 808.1L253.8 803.9L258.0 800.8L263.2 799.0L269.4 798.7L275.2 799.7L280.4 801.8L286.6 806.4L292.6 814.5M257.4 820.6L258.9 816.7L261.5 813.2L265.0 810.6L269.3 809.1L274.5 808.9L279.3 809.8L283.6 811.5L288.8 815.3L293.9 822.0M265.9 828.5L267.1 825.4L269.2 822.6L272.0 820.5L275.5 819.3L279.6 819.1L283.4 819.8L286.9 821.2L291.0 824.2L295.1 829.6" fill="none" stroke="#2a1000" stroke-width="1.9" stroke-dasharray="2.4 1.4" opacity="0.85"/><clipPath id="creg"><path d="M395 640L460 700L460 760L400 830L372 892L345 892L345 845L305 838L285 800L300 765L335 745L362 700Z"/></clipPath><g clip-path="url(#creg)"><path d="M420.4 655.3L438.9 691.3L447.4 708.3L450.8 732.1L447.4 752.3L438.9 772.6L423.8 792.9L403.4 806.3L390.0 833.3L368.4 856.3L362.4 880.3M416.8 655.6L435.3 691.6L443.8 708.6L447.2 732.4L443.8 752.6L435.3 772.9L420.2 793.2L399.8 806.6L386.4 833.6L364.8 856.6L358.8 880.6M413.2 655.9L431.7 691.9L440.2 708.9L443.6 732.7L440.2 752.9L431.7 773.2L416.6 793.5L396.2 806.9L382.8 833.9L361.2 856.9L355.2 880.9M409.6 656.2L428.1 692.2L436.6 709.2L440.0 733.0L436.6 753.2L428.1 773.5L413.0 793.8L392.6 807.2L379.2 834.2L357.6 857.2L351.6 881.2M406.0 656.5L424.5 692.5L433.0 709.5L436.4 733.3L433.0 753.5L424.5 773.8L409.4 794.1L389.0 807.5L375.6 834.5L354.0 857.5L348.0 881.5M402.4 656.8L420.9 692.8L429.4 709.8L432.8 733.6L429.4 753.8L420.9 774.1L405.8 794.4L385.4 807.8L372.0 834.8L350.4 857.8L344.4 881.8M398.8 657.1L417.3 693.1L425.8 710.1L429.2 733.9L425.8 754.1L417.3 774.4L402.2 794.7L381.8 808.1L368.4 835.1L346.8 858.1L340.8 882.1M395.2 657.4L413.7 693.4L422.2 710.4L425.6 734.2L422.2 754.4L413.7 774.7L398.6 795.0L378.2 808.4L364.8 835.4L343.2 858.4L337.2 882.4M391.6 657.7L410.1 693.7L418.6 710.7L422.0 734.5L418.6 754.7L410.1 775.0L395.0 795.3L374.6 808.7L361.2 835.7L339.6 858.7L333.6 882.7M388.0 658.0L406.5 694.0L415.0 711.0L418.4 734.8L415.0 755.0L406.5 775.3L391.4 795.6L371.0 809.0L357.6 836.0L336.0 859.0L330.0 883.0M384.4 658.3L402.9 694.3L411.4 711.3L414.8 735.1L411.4 755.3L402.9 775.6L387.8 795.9L367.4 809.3L354.0 836.3L332.4 859.3L326.4 883.3M380.8 658.6L399.3 694.6L407.8 711.6L411.2 735.4L407.8 755.6L399.3 775.9L384.2 796.2L363.8 809.6L350.4 836.6L328.8 859.6L322.8 883.6M377.2 658.9L395.7 694.9L404.2 711.9L407.6 735.7L404.2 755.9L395.7 776.2L380.6 796.5L360.2 809.9L346.8 836.9L325.2 859.9L319.2 883.9M373.6 659.2L392.1 695.2L400.6 712.2L404.0 736.0L400.6 756.2L392.1 776.5L377.0 796.8L356.6 810.2L343.2 837.2L321.6 860.2L315.6 884.2M370.0 659.5L388.5 695.5L397.0 712.5L400.4 736.3L397.0 756.5L388.5 776.8L373.4 797.1L353.0 810.5L339.6 837.5L318.0 860.5L312.0 884.5M366.4 659.8L384.9 695.8L393.4 712.8L396.8 736.6L393.4 756.8L384.9 777.1L369.8 797.4L349.4 810.8L336.0 837.8L314.4 860.8L308.4 884.8M362.8 660.1L381.3 696.1L389.8 713.1L393.2 736.9L389.8 757.1L381.3 777.4L366.2 797.7L345.8 811.1L332.4 838.1L310.8 861.1L304.8 885.1M359.2 660.4L377.7 696.4L386.2 713.4L389.6 737.2L386.2 757.4L377.7 777.7L362.6 798.0L342.2 811.4L328.8 838.4L307.2 861.4L301.2 885.4M355.6 660.7L374.1 696.7L382.6 713.7L386.0 737.5L382.6 757.7L374.1 778.0L359.0 798.3L338.6 811.7L325.2 838.7L303.6 861.7L297.6 885.7M352.0 661.0L370.5 697.0L379.0 714.0L382.4 737.8L379.0 758.0L370.5 778.3L355.4 798.6L335.0 812.0L321.6 839.0L300.0 862.0L294.0 886.0M348.4 661.3L366.9 697.3L375.4 714.3L378.8 738.1L375.4 758.3L366.9 778.6L351.8 798.9L331.4 812.3L318.0 839.3L296.4 862.3L290.4 886.3M344.8 661.6L363.3 697.6L371.8 714.6L375.2 738.4L371.8 758.6L363.3 778.9L348.2 799.2L327.8 812.6L314.4 839.6L292.8 862.6L286.8 886.6M341.2 661.9L359.7 697.9L368.2 714.9L371.6 738.7L368.2 758.9L359.7 779.2L344.6 799.5L324.2 812.9L310.8 839.9L289.2 862.9L283.2 886.9M337.6 662.2L356.1 698.2L364.6 715.2L368.0 739.0L364.6 759.2L356.1 779.5L341.0 799.8L320.6 813.2L307.2 840.2L285.6 863.2L279.6 887.2M334.0 662.5L352.5 698.5L361.0 715.5L364.4 739.3L361.0 759.5L352.5 779.8L337.4 800.1L317.0 813.5L303.6 840.5L282.0 863.5L276.0 887.5M330.4 662.8L348.9 698.8L357.4 715.8L360.8 739.6L357.4 759.8L348.9 780.1L333.8 800.4L313.4 813.8L300.0 840.8L278.4 863.8L272.4 887.8M326.8 663.1L345.3 699.1L353.8 716.1L357.2 739.9L353.8 760.1L345.3 780.4L330.2 800.7L309.8 814.1L296.4 841.1L274.8 864.1L268.8 888.1M323.2 663.4L341.7 699.4L350.2 716.4L353.6 740.2L350.2 760.4L341.7 780.7L326.6 801.0L306.2 814.4L292.8 841.4L271.2 864.4L265.2 888.4M319.6 663.7L338.1 699.7L346.6 716.7L350.0 740.5L346.6 760.7L338.1 781.0L323.0 801.3L302.6 814.7L289.2 841.7L267.6 864.7L261.6 888.7" fill="none" stroke="#2a1000" stroke-width="1.4" stroke-dasharray="2 1.4" opacity="0.85"/></g><path d="M392.0 652.0L335.0 742.0M396.5 654.0L340.5 745.0M401.0 656.0L346.0 748.0M405.5 658.0L351.5 751.0M410.0 660.0L357.0 754.0M414.5 662.0L362.5 757.0M419.0 664.0L368.0 760.0M423.5 666.0L373.5 763.0M428.0 668.0L379.0 766.0" fill="none" stroke="#2a1000" stroke-width="1.2" stroke-dasharray="2 2" opacity="0.6"/><path d="M150 668Q175 652 238 668L240 677Q180 666 153 681Z" fill="#7a5a30" opacity="0.9"/><path d="M150 668Q175 652 238 668M153 681Q180 666 240 677" stroke="#2a1000" stroke-width="1" stroke-dasharray="3 2" fill="none"/></g></g>
<g fill="none"><circle cx="652.5" cy="570" r="13" stroke="#fff" stroke-width="1" stroke-dasharray="4 4"/><circle cx="652.5" cy="570" r="13" stroke="#c03030" stroke-width="1" stroke-dasharray="4 4" stroke-dashoffset="4"/><path d="M652.5 540V602M620 570H685" stroke="#e8e8e8" stroke-width="1" stroke-dasharray="1 1.5"/></g>
<g stroke="#4c4c4c" stroke-width="1" fill="none"><path d="M1194 594L1920 675.3"/><path d="M978 663L1920 795.5"/><path d="M1150 596L978 677"/><path d="M1402 596L978 899"/><path d="M1906.3 596L1920 787"/><path d="M1902 596L1920 596.5"/></g>
<path d="M978 829.5L1888 1007" stroke="#702a2a" stroke-width="1.1"/>
<path d="M1654.5 595.5L1379 1007" stroke="#2e6a2e" stroke-width="1.1"/>
<rect x="1435" y="490" width="3" height="431" fill="#a4a4b0"/>
<path d="M1286 594L1594 626.5" stroke="#e4e4ec" stroke-width="2.4"/>
<path d="M1374 659L1486.5 570" stroke="#a8a8c4" stroke-width="2.4"/>
<path d="M1130.4 412 Q1180 428 1232 423.5 L1257 468 L1662 494.5 L1639 459 Q1700 470 1724.5 501 Q1700 525 1636 533 L1661.5 502.5 L1257 475.2 L1235.7 514 Q1184 504 1136.6 511.3 Q1160 461 1130.4 412 Z" fill="#ffa014" stroke="#f07a10" stroke-width="1.5"/>
<polygon points="1132.0,413.5 1141.6,416.4 1151.3,418.9 1161.1,421.0 1170.9,422.7 1180.8,424.0 1190.7,424.9 1200.7,425.4 1210.7,425.5 1220.8,425.2 1231.0,424.5 1231.0,424.5 1231.3,433.3 1231.6,442.1 1231.9,450.9 1232.2,459.7 1232.5,468.5 1232.8,477.3 1233.1,486.1 1233.4,494.9 1233.7,503.7 1234.0,512.5 1234.0,512.5 1224.0,510.6 1214.2,509.0 1204.4,507.9 1194.7,507.1 1185.1,506.6 1175.6,506.6 1166.2,506.9 1156.9,507.5 1147.6,508.6 1138.5,510.0 1138.5,510.0 1142.8,500.2 1146.1,490.5 1148.2,480.7 1149.2,471.0 1149.1,461.4 1147.9,451.7 1145.6,442.1 1142.2,432.6 1137.6,423.0 1132.0,413.5" fill="#cfa470"/><path d="M1132.0 413.5L1134.1 416.9L1136.1 420.3L1138.0 423.7L1139.7 427.1L1141.3 430.5L1142.7 433.9L1144.0 437.3L1145.2 440.8L1146.2 444.2L1147.1 447.6L1147.8 451.1L1148.4 454.5L1148.8 457.9L1149.1 461.4L1149.3 464.8L1149.3 468.3L1149.2 471.7L1148.9 475.2L1148.5 478.7L1148.0 482.1L1147.3 485.6L1146.5 489.1L1145.5 492.5L1144.4 496.0L1143.1 499.5L1141.7 503.0L1140.2 506.5L1138.5 510.0M1137.3 415.2L1139.4 418.5L1141.3 421.8L1143.0 425.1L1144.7 428.4L1146.1 431.7L1147.5 435.1L1148.7 438.4L1149.8 441.7L1150.8 445.1L1151.6 448.4L1152.3 451.8L1152.8 455.1L1153.3 458.5L1153.6 461.8L1153.7 465.2L1153.7 468.5L1153.6 471.9L1153.4 475.3L1153.0 478.6L1152.5 482.0L1151.8 485.4L1151.1 488.8L1150.1 492.2L1149.1 495.6L1147.9 499.0L1146.6 502.4L1145.2 505.8L1143.6 509.2M1142.7 416.7L1144.6 419.9L1146.4 423.2L1148.1 426.4L1149.6 429.6L1151.0 432.9L1152.3 436.1L1153.4 439.4L1154.5 442.6L1155.4 445.9L1156.2 449.2L1156.8 452.4L1157.3 455.7L1157.7 459.0L1158.0 462.2L1158.2 465.5L1158.2 468.8L1158.1 472.1L1157.9 475.4L1157.5 478.7L1157.0 482.0L1156.4 485.3L1155.7 488.6L1154.8 491.9L1153.9 495.2L1152.7 498.5L1151.5 501.8L1150.2 505.1L1148.7 508.5M1148.1 418.1L1149.9 421.3L1151.6 424.4L1153.1 427.6L1154.6 430.8L1155.9 434.0L1157.1 437.1L1158.2 440.3L1159.2 443.5L1160.0 446.7L1160.7 449.9L1161.4 453.1L1161.9 456.3L1162.2 459.5L1162.5 462.7L1162.6 465.9L1162.7 469.1L1162.6 472.3L1162.4 475.5L1162.0 478.7L1161.6 482.0L1161.0 485.2L1160.4 488.4L1159.6 491.6L1158.6 494.9L1157.6 498.1L1156.5 501.4L1155.2 504.6L1153.8 507.8M1153.5 419.4L1155.2 422.5L1156.7 425.6L1158.2 428.7L1159.5 431.8L1160.8 434.9L1161.9 438.1L1162.9 441.2L1163.9 444.3L1164.7 447.4L1165.3 450.5L1165.9 453.7L1166.4 456.8L1166.8 459.9L1167.0 463.1L1167.1 466.2L1167.2 469.4L1167.1 472.5L1166.9 475.7L1166.6 478.8L1166.2 482.0L1165.7 485.2L1165.0 488.3L1164.3 491.5L1163.4 494.6L1162.5 497.8L1161.4 501.0L1160.2 504.2L1158.9 507.4M1158.9 420.6L1160.5 423.6L1161.9 426.7L1163.3 429.7L1164.6 432.8L1165.7 435.8L1166.8 438.9L1167.7 442.0L1168.6 445.0L1169.3 448.1L1170.0 451.2L1170.5 454.3L1171.0 457.3L1171.3 460.4L1171.5 463.5L1171.7 466.6L1171.7 469.7L1171.6 472.8L1171.5 475.9L1171.2 479.0L1170.8 482.1L1170.3 485.2L1169.8 488.3L1169.1 491.4L1168.3 494.5L1167.4 497.6L1166.4 500.7L1165.3 503.9L1164.1 507.0M1164.3 421.6L1165.8 424.6L1167.1 427.6L1168.4 430.6L1169.6 433.6L1170.7 436.7L1171.6 439.7L1172.5 442.7L1173.3 445.7L1174.0 448.8L1174.6 451.8L1175.1 454.8L1175.5 457.8L1175.9 460.9L1176.1 463.9L1176.2 467.0L1176.3 470.0L1176.2 473.0L1176.0 476.1L1175.8 479.1L1175.5 482.2L1175.0 485.3L1174.5 488.3L1173.9 491.4L1173.1 494.4L1172.3 497.5L1171.4 500.6L1170.4 503.6L1169.3 506.7M1169.8 422.5L1171.1 425.5L1172.4 428.5L1173.5 431.4L1174.6 434.4L1175.6 437.4L1176.5 440.4L1177.3 443.4L1178.1 446.4L1178.7 449.3L1179.3 452.3L1179.8 455.3L1180.1 458.3L1180.4 461.3L1180.7 464.3L1180.8 467.3L1180.8 470.3L1180.8 473.3L1180.6 476.3L1180.4 479.4L1180.1 482.4L1179.7 485.4L1179.3 488.4L1178.7 491.4L1178.0 494.5L1177.3 497.5L1176.5 500.5L1175.6 503.5L1174.6 506.6M1175.3 423.3L1176.5 426.3L1177.6 429.2L1178.7 432.2L1179.7 435.1L1180.6 438.1L1181.4 441.0L1182.2 444.0L1182.9 446.9L1183.5 449.9L1184.0 452.9L1184.4 455.8L1184.8 458.8L1185.1 461.8L1185.3 464.7L1185.4 467.7L1185.4 470.7L1185.4 473.7L1185.3 476.6L1185.1 479.6L1184.8 482.6L1184.5 485.6L1184.0 488.6L1183.5 491.6L1183.0 494.6L1182.3 497.5L1181.6 500.5L1180.7 503.5L1179.8 506.5M1180.8 424.0L1181.9 426.9L1182.9 429.9L1183.9 432.8L1184.8 435.7L1185.6 438.6L1186.4 441.6L1187.0 444.5L1187.7 447.5L1188.2 450.4L1188.7 453.3L1189.1 456.3L1189.4 459.2L1189.7 462.2L1189.9 465.1L1190.0 468.1L1190.0 471.0L1190.0 474.0L1189.9 476.9L1189.8 479.9L1189.5 482.9L1189.2 485.8L1188.9 488.8L1188.4 491.8L1187.9 494.7L1187.3 497.7L1186.7 500.7L1185.9 503.6L1185.1 506.6M1186.3 424.5L1187.3 427.5L1188.2 430.4L1189.1 433.3L1189.9 436.2L1190.6 439.1L1191.3 442.1L1191.9 445.0L1192.5 447.9L1193.0 450.8L1193.4 453.8L1193.8 456.7L1194.1 459.6L1194.3 462.6L1194.5 465.5L1194.6 468.5L1194.7 471.4L1194.7 474.3L1194.6 477.3L1194.5 480.2L1194.3 483.2L1194.0 486.1L1193.7 489.1L1193.3 492.0L1192.9 495.0L1192.4 497.9L1191.8 500.9L1191.1 503.9L1190.4 506.8M1191.8 425.0L1192.7 427.9L1193.5 430.8L1194.3 433.7L1195.0 436.6L1195.7 439.6L1196.3 442.5L1196.8 445.4L1197.3 448.3L1197.8 451.3L1198.2 454.2L1198.5 457.1L1198.8 460.0L1199.0 463.0L1199.2 465.9L1199.3 468.8L1199.4 471.8L1199.4 474.7L1199.3 477.7L1199.2 480.6L1199.1 483.5L1198.8 486.5L1198.6 489.4L1198.2 492.4L1197.9 495.3L1197.4 498.3L1196.9 501.2L1196.4 504.2L1195.8 507.1M1197.3 425.3L1198.1 428.2L1198.8 431.1L1199.5 434.0L1200.1 437.0L1200.7 439.9L1201.3 442.8L1201.8 445.8L1202.2 448.7L1202.6 451.6L1202.9 454.5L1203.3 457.5L1203.5 460.4L1203.7 463.4L1203.9 466.3L1204.0 469.2L1204.1 472.2L1204.1 475.1L1204.0 478.1L1204.0 481.0L1203.8 483.9L1203.7 486.9L1203.5 489.8L1203.2 492.8L1202.9 495.7L1202.5 498.7L1202.1 501.6L1201.7 504.6L1201.2 507.6M1202.9 425.5L1203.6 428.4L1204.2 431.3L1204.8 434.3L1205.3 437.2L1205.8 440.2L1206.3 443.1L1206.7 446.0L1207.1 449.0L1207.4 451.9L1207.7 454.9L1208.0 457.8L1208.2 460.8L1208.4 463.7L1208.6 466.7L1208.7 469.6L1208.8 472.6L1208.8 475.5L1208.8 478.5L1208.8 481.4L1208.7 484.4L1208.5 487.4L1208.4 490.3L1208.2 493.3L1207.9 496.2L1207.7 499.2L1207.3 502.2L1207.0 505.1L1206.6 508.1M1208.5 425.5L1209.0 428.5L1209.6 431.4L1210.0 434.4L1210.5 437.4L1210.9 440.3L1211.3 443.3L1211.7 446.3L1212.0 449.2L1212.3 452.2L1212.6 455.2L1212.8 458.1L1213.0 461.1L1213.2 464.1L1213.3 467.0L1213.4 470.0L1213.5 473.0L1213.6 476.0L1213.6 478.9L1213.6 481.9L1213.5 484.9L1213.4 487.9L1213.3 490.9L1213.2 493.8L1213.0 496.8L1212.8 499.8L1212.6 502.8L1212.3 505.8L1212.0 508.7M1214.1 425.4L1214.5 428.4L1214.9 431.4L1215.3 434.4L1215.7 437.4L1216.0 440.4L1216.4 443.4L1216.7 446.4L1216.9 449.4L1217.2 452.4L1217.4 455.4L1217.6 458.4L1217.8 461.4L1218.0 464.4L1218.1 467.4L1218.2 470.4L1218.3 473.4L1218.3 476.4L1218.4 479.4L1218.4 482.4L1218.4 485.4L1218.3 488.4L1218.3 491.5L1218.2 494.5L1218.1 497.5L1218.0 500.5L1217.8 503.5L1217.7 506.5L1217.5 509.5M1219.7 425.3L1220.0 428.3L1220.3 431.3L1220.6 434.4L1220.9 437.4L1221.2 440.4L1221.4 443.5L1221.7 446.5L1221.9 449.5L1222.1 452.6L1222.3 455.6L1222.4 458.7L1222.6 461.7L1222.7 464.7L1222.9 467.8L1223.0 470.8L1223.1 473.9L1223.1 476.9L1223.2 479.9L1223.2 483.0L1223.3 486.0L1223.3 489.1L1223.3 492.1L1223.3 495.2L1223.2 498.2L1223.2 501.3L1223.1 504.3L1223.0 507.3L1222.9 510.4M1225.3 424.9L1225.6 428.0L1225.8 431.1L1226.0 434.2L1226.2 437.3L1226.4 440.4L1226.5 443.4L1226.7 446.5L1226.9 449.6L1227.0 452.7L1227.2 455.8L1227.3 458.9L1227.4 462.0L1227.6 465.1L1227.7 468.1L1227.8 471.2L1227.9 474.3L1228.0 477.4L1228.1 480.5L1228.1 483.6L1228.2 486.7L1228.3 489.8L1228.3 492.9L1228.4 495.9L1228.4 499.0L1228.4 502.1L1228.4 505.2L1228.5 508.3L1228.5 511.4M1231.0 424.5L1231.1 427.6L1231.2 430.8L1231.3 433.9L1231.4 437.1L1231.5 440.2L1231.6 443.4L1231.8 446.5L1231.9 449.6L1232.0 452.8L1232.1 455.9L1232.2 459.1L1232.3 462.2L1232.4 465.4L1232.5 468.5L1232.6 471.6L1232.7 474.8L1232.8 477.9L1232.9 481.1L1233.0 484.2L1233.1 487.4L1233.2 490.5L1233.4 493.6L1233.5 496.8L1233.6 499.9L1233.7 503.1L1233.8 506.2L1233.9 509.4L1234.0 512.5M1132.0 413.5L1134.7 414.3L1137.3 415.2L1140.0 415.9L1142.7 416.7L1145.4 417.4L1148.1 418.1L1150.8 418.8L1153.5 419.4L1156.2 420.0L1158.9 420.6L1161.6 421.1L1164.3 421.6L1167.1 422.1L1169.8 422.5L1172.5 422.9L1175.3 423.3L1178.0 423.7L1180.8 424.0L1183.5 424.3L1186.3 424.5L1189.0 424.8L1191.8 425.0L1194.6 425.1L1197.3 425.3L1200.1 425.4L1202.9 425.5L1205.7 425.5L1208.5 425.5L1211.3 425.5L1214.1 425.4L1216.9 425.4L1219.7 425.3L1222.5 425.1L1225.3 424.9L1228.2 424.7L1231.0 424.5M1136.1 420.3L1138.7 421.1L1141.3 421.8L1143.8 422.5L1146.4 423.2L1149.0 423.8L1151.6 424.4L1154.1 425.0L1156.7 425.6L1159.3 426.2L1161.9 426.7L1164.5 427.2L1167.1 427.6L1169.8 428.1L1172.4 428.5L1175.0 428.9L1177.6 429.2L1180.3 429.5L1182.9 429.9L1185.5 430.1L1188.2 430.4L1190.8 430.6L1193.5 430.8L1196.2 431.0L1198.8 431.1L1201.5 431.2L1204.2 431.3L1206.9 431.4L1209.6 431.4L1212.2 431.4L1214.9 431.4L1217.6 431.4L1220.3 431.3L1223.1 431.2L1225.8 431.1L1228.5 431.0L1231.2 430.8M1139.7 427.1L1142.2 427.8L1144.7 428.4L1147.1 429.0L1149.6 429.6L1152.1 430.2L1154.6 430.8L1157.1 431.3L1159.5 431.8L1162.0 432.3L1164.6 432.8L1167.1 433.2L1169.6 433.6L1172.1 434.0L1174.6 434.4L1177.2 434.8L1179.7 435.1L1182.2 435.4L1184.8 435.7L1187.3 436.0L1189.9 436.2L1192.4 436.4L1195.0 436.6L1197.6 436.8L1200.1 437.0L1202.7 437.1L1205.3 437.2L1207.9 437.3L1210.5 437.4L1213.1 437.4L1215.7 437.4L1218.3 437.4L1220.9 437.4L1223.5 437.3L1226.2 437.3L1228.8 437.2L1231.4 437.1M1142.7 433.9L1145.1 434.5L1147.5 435.1L1149.9 435.6L1152.3 436.1L1154.7 436.6L1157.1 437.1L1159.5 437.6L1161.9 438.1L1164.3 438.5L1166.8 438.9L1169.2 439.3L1171.6 439.7L1174.1 440.0L1176.5 440.4L1179.0 440.7L1181.4 441.0L1183.9 441.3L1186.4 441.6L1188.8 441.8L1191.3 442.1L1193.8 442.3L1196.3 442.5L1198.8 442.7L1201.3 442.8L1203.8 443.0L1206.3 443.1L1208.8 443.2L1211.3 443.3L1213.8 443.4L1216.4 443.4L1218.9 443.5L1221.4 443.5L1224.0 443.5L1226.5 443.4L1229.1 443.4L1231.6 443.4M1145.2 440.8L1147.5 441.3L1149.8 441.7L1152.1 442.2L1154.5 442.6L1156.8 443.1L1159.2 443.5L1161.5 443.9L1163.9 444.3L1166.2 444.7L1168.6 445.0L1170.9 445.4L1173.3 445.7L1175.7 446.0L1178.1 446.4L1180.5 446.7L1182.9 446.9L1185.3 447.2L1187.7 447.5L1190.1 447.7L1192.5 447.9L1194.9 448.1L1197.3 448.3L1199.8 448.5L1202.2 448.7L1204.6 448.8L1207.1 449.0L1209.5 449.1L1212.0 449.2L1214.5 449.3L1216.9 449.4L1219.4 449.5L1221.9 449.5L1224.4 449.6L1226.9 449.6L1229.4 449.6L1231.9 449.6M1147.1 447.6L1149.3 448.0L1151.6 448.4L1153.9 448.8L1156.2 449.2L1158.4 449.5L1160.7 449.9L1163.0 450.2L1165.3 450.5L1167.7 450.9L1170.0 451.2L1172.3 451.5L1174.6 451.8L1176.9 452.1L1179.3 452.3L1181.6 452.6L1184.0 452.9L1186.3 453.1L1188.7 453.3L1191.0 453.6L1193.4 453.8L1195.8 454.0L1198.2 454.2L1200.6 454.4L1202.9 454.5L1205.3 454.7L1207.7 454.9L1210.2 455.0L1212.6 455.2L1215.0 455.3L1217.4 455.4L1219.8 455.5L1222.3 455.6L1224.7 455.7L1227.2 455.8L1229.6 455.9L1232.1 455.9M1148.4 454.5L1150.6 454.8L1152.8 455.1L1155.1 455.4L1157.3 455.7L1159.6 456.0L1161.9 456.3L1164.1 456.5L1166.4 456.8L1168.7 457.1L1171.0 457.3L1173.2 457.6L1175.5 457.8L1177.8 458.1L1180.1 458.3L1182.5 458.6L1184.8 458.8L1187.1 459.0L1189.4 459.2L1191.8 459.4L1194.1 459.6L1196.4 459.8L1198.8 460.0L1201.1 460.2L1203.5 460.4L1205.9 460.6L1208.2 460.8L1210.6 460.9L1213.0 461.1L1215.4 461.3L1217.8 461.4L1220.2 461.6L1222.6 461.7L1225.0 461.8L1227.4 462.0L1229.9 462.1L1232.3 462.2M1149.1 461.4L1151.3 461.6L1153.6 461.8L1155.8 462.0L1158.0 462.2L1160.3 462.5L1162.5 462.7L1164.7 462.9L1167.0 463.1L1169.3 463.3L1171.5 463.5L1173.8 463.7L1176.1 463.9L1178.4 464.1L1180.7 464.3L1183.0 464.5L1185.3 464.7L1187.6 464.9L1189.9 465.1L1192.2 465.3L1194.5 465.5L1196.8 465.7L1199.2 465.9L1201.5 466.1L1203.9 466.3L1206.2 466.5L1208.6 466.7L1211.0 466.9L1213.3 467.0L1215.7 467.2L1218.1 467.4L1220.5 467.6L1222.9 467.8L1225.3 468.0L1227.7 468.1L1230.1 468.3L1232.5 468.5M1149.3 468.3L1151.5 468.4L1153.7 468.5L1156.0 468.7L1158.2 468.8L1160.4 468.9L1162.7 469.1L1164.9 469.2L1167.2 469.4L1169.4 469.5L1171.7 469.7L1174.0 469.8L1176.3 470.0L1178.5 470.2L1180.8 470.3L1183.1 470.5L1185.4 470.7L1187.7 470.9L1190.0 471.0L1192.4 471.2L1194.7 471.4L1197.0 471.6L1199.4 471.8L1201.7 472.0L1204.1 472.2L1206.4 472.4L1208.8 472.6L1211.1 472.8L1213.5 473.0L1215.9 473.2L1218.3 473.4L1220.7 473.6L1223.1 473.9L1225.5 474.1L1227.9 474.3L1230.3 474.6L1232.7 474.8M1148.9 475.2L1151.1 475.2L1153.4 475.3L1155.6 475.3L1157.9 475.4L1160.1 475.4L1162.4 475.5L1164.6 475.6L1166.9 475.7L1169.2 475.8L1171.5 475.9L1173.7 476.0L1176.0 476.1L1178.3 476.2L1180.6 476.3L1183.0 476.5L1185.3 476.6L1187.6 476.8L1189.9 476.9L1192.3 477.1L1194.6 477.3L1197.0 477.5L1199.3 477.7L1201.7 477.9L1204.0 478.1L1206.4 478.3L1208.8 478.5L1211.2 478.7L1213.6 478.9L1216.0 479.2L1218.4 479.4L1220.8 479.7L1223.2 479.9L1225.6 480.2L1228.1 480.5L1230.5 480.8L1232.9 481.1M1148.0 482.1L1150.2 482.1L1152.5 482.0L1154.8 482.0L1157.0 482.0L1159.3 482.0L1161.6 482.0L1163.9 482.0L1166.2 482.0L1168.5 482.0L1170.8 482.1L1173.1 482.1L1175.5 482.2L1177.8 482.3L1180.1 482.4L1182.5 482.5L1184.8 482.6L1187.2 482.7L1189.5 482.9L1191.9 483.0L1194.3 483.2L1196.7 483.4L1199.1 483.5L1201.4 483.7L1203.8 483.9L1206.3 484.2L1208.7 484.4L1211.1 484.6L1213.5 484.9L1215.9 485.2L1218.4 485.4L1220.8 485.7L1223.3 486.0L1225.7 486.3L1228.2 486.7L1230.7 487.0L1233.1 487.4M1146.5 489.1L1148.8 488.9L1151.1 488.8L1153.4 488.7L1155.7 488.6L1158.0 488.5L1160.4 488.4L1162.7 488.4L1165.0 488.3L1167.4 488.3L1169.8 488.3L1172.1 488.3L1174.5 488.3L1176.9 488.4L1179.3 488.4L1181.6 488.5L1184.0 488.6L1186.4 488.7L1188.9 488.8L1191.3 488.9L1193.7 489.1L1196.1 489.2L1198.6 489.4L1201.0 489.6L1203.5 489.8L1205.9 490.1L1208.4 490.3L1210.8 490.6L1213.3 490.9L1215.8 491.1L1218.3 491.5L1220.8 491.8L1223.3 492.1L1225.8 492.5L1228.3 492.9L1230.8 493.2L1233.4 493.6M1144.4 496.0L1146.7 495.8L1149.1 495.6L1151.5 495.4L1153.9 495.2L1156.2 495.0L1158.6 494.9L1161.0 494.8L1163.4 494.6L1165.9 494.6L1168.3 494.5L1170.7 494.5L1173.1 494.4L1175.6 494.4L1178.0 494.5L1180.5 494.5L1183.0 494.6L1185.4 494.6L1187.9 494.7L1190.4 494.8L1192.9 495.0L1195.4 495.1L1197.9 495.3L1200.4 495.5L1202.9 495.7L1205.4 496.0L1207.9 496.2L1210.5 496.5L1213.0 496.8L1215.6 497.1L1218.1 497.5L1220.7 497.8L1223.2 498.2L1225.8 498.6L1228.4 499.0L1231.0 499.5L1233.6 499.9M1141.7 503.0L1144.2 502.7L1146.6 502.4L1149.1 502.1L1151.5 501.8L1154.0 501.6L1156.5 501.4L1158.9 501.2L1161.4 501.0L1163.9 500.9L1166.4 500.7L1168.9 500.6L1171.4 500.6L1174.0 500.5L1176.5 500.5L1179.0 500.5L1181.6 500.5L1184.1 500.6L1186.7 500.7L1189.2 500.8L1191.8 500.9L1194.4 501.1L1196.9 501.2L1199.5 501.4L1202.1 501.6L1204.7 501.9L1207.3 502.2L1209.9 502.5L1212.6 502.8L1215.2 503.1L1217.8 503.5L1220.5 503.9L1223.1 504.3L1225.8 504.7L1228.4 505.2L1231.1 505.7L1233.8 506.2M1138.5 510.0L1141.0 509.6L1143.6 509.2L1146.1 508.8L1148.7 508.5L1151.2 508.1L1153.8 507.8L1156.4 507.6L1158.9 507.4L1161.5 507.2L1164.1 507.0L1166.7 506.8L1169.3 506.7L1171.9 506.6L1174.6 506.6L1177.2 506.5L1179.8 506.5L1182.5 506.6L1185.1 506.6L1187.8 506.7L1190.4 506.8L1193.1 507.0L1195.8 507.1L1198.5 507.3L1201.2 507.6L1203.9 507.8L1206.6 508.1L1209.3 508.4L1212.0 508.7L1214.7 509.1L1217.5 509.5L1220.2 509.9L1222.9 510.4L1225.7 510.9L1228.5 511.4L1231.2 511.9L1234.0 512.5" fill="none" stroke="#ffa010" stroke-width="1.3"/>
<polygon points="1231.0,424.5 1233.4,428.8 1235.8,433.1 1238.2,437.4 1240.6,441.7 1243.0,446.0 1245.4,450.3 1247.8,454.6 1250.2,458.9 1252.6,463.2 1255.0,467.5 1255.0,467.5 1255.0,468.4 1255.0,469.2 1255.0,470.1 1255.0,470.9 1255.0,471.8 1255.0,472.6 1255.0,473.4 1255.0,474.3 1255.0,475.1 1255.0,476.0 1255.0,476.0 1252.9,479.6 1250.8,483.3 1248.7,486.9 1246.6,490.6 1244.5,494.2 1242.4,497.9 1240.3,501.6 1238.2,505.2 1236.1,508.9 1234.0,512.5 1234.0,512.5 1233.7,503.7 1233.4,494.9 1233.1,486.1 1232.8,477.3 1232.5,468.5 1232.2,459.7 1231.9,450.9 1231.6,442.1 1231.3,433.3 1231.0,424.5" fill="#cfa470"/><path d="M1231.0 424.5L1231.1 427.6L1231.2 430.8L1231.3 433.9L1231.4 437.1L1231.5 440.2L1231.6 443.4L1231.8 446.5L1231.9 449.6L1232.0 452.8L1232.1 455.9L1232.2 459.1L1232.3 462.2L1232.4 465.4L1232.5 468.5L1232.6 471.6L1232.7 474.8L1232.8 477.9L1232.9 481.1L1233.0 484.2L1233.1 487.4L1233.2 490.5L1233.4 493.6L1233.5 496.8L1233.6 499.9L1233.7 503.1L1233.8 506.2L1233.9 509.4L1234.0 512.5M1235.8 433.1L1235.9 435.7L1236.0 438.2L1236.1 440.8L1236.1 443.4L1236.2 446.0L1236.3 448.6L1236.4 451.1L1236.5 453.7L1236.6 456.3L1236.7 458.9L1236.7 461.4L1236.8 464.0L1236.9 466.6L1237.0 469.2L1237.1 471.7L1237.2 474.3L1237.3 476.9L1237.3 479.5L1237.4 482.0L1237.5 484.6L1237.6 487.2L1237.7 489.8L1237.8 492.3L1237.9 494.9L1237.9 497.5L1238.0 500.0L1238.1 502.6L1238.2 505.2M1240.6 441.7L1240.7 443.7L1240.7 445.7L1240.8 447.7L1240.9 449.7L1240.9 451.7L1241.0 453.7L1241.0 455.8L1241.1 457.8L1241.2 459.8L1241.2 461.8L1241.3 463.8L1241.4 465.8L1241.4 467.8L1241.5 469.8L1241.6 471.8L1241.6 473.8L1241.7 475.8L1241.8 477.8L1241.8 479.8L1241.9 481.8L1242.0 483.9L1242.0 485.9L1242.1 487.9L1242.1 489.9L1242.2 491.9L1242.3 493.9L1242.3 495.9L1242.4 497.9M1245.4 450.3L1245.4 451.7L1245.5 453.2L1245.5 454.6L1245.6 456.1L1245.6 457.5L1245.7 458.9L1245.7 460.4L1245.7 461.8L1245.8 463.3L1245.8 464.7L1245.9 466.1L1245.9 467.6L1246.0 469.0L1246.0 470.5L1246.0 471.9L1246.1 473.3L1246.1 474.8L1246.2 476.2L1246.2 477.6L1246.3 479.1L1246.3 480.5L1246.3 482.0L1246.4 483.4L1246.4 484.8L1246.5 486.3L1246.5 487.7L1246.6 489.2L1246.6 490.6M1250.2 458.9L1250.2 459.8L1250.2 460.6L1250.3 461.5L1250.3 462.4L1250.3 463.3L1250.3 464.1L1250.3 465.0L1250.4 465.9L1250.4 466.7L1250.4 467.6L1250.4 468.5L1250.5 469.4L1250.5 470.2L1250.5 471.1L1250.5 472.0L1250.5 472.8L1250.6 473.7L1250.6 474.6L1250.6 475.5L1250.6 476.3L1250.6 477.2L1250.7 478.1L1250.7 478.9L1250.7 479.8L1250.7 480.7L1250.8 481.6L1250.8 482.4L1250.8 483.3M1255.0 467.5L1255.0 467.8L1255.0 468.1L1255.0 468.4L1255.0 468.7L1255.0 469.0L1255.0 469.3L1255.0 469.6L1255.0 469.9L1255.0 470.2L1255.0 470.5L1255.0 470.8L1255.0 471.1L1255.0 471.4L1255.0 471.8L1255.0 472.1L1255.0 472.4L1255.0 472.7L1255.0 473.0L1255.0 473.3L1255.0 473.6L1255.0 473.9L1255.0 474.2L1255.0 474.5L1255.0 474.8L1255.0 475.1L1255.0 475.4L1255.0 475.7L1255.0 476.0M1231.0 424.5L1233.4 428.8L1235.8 433.1L1238.2 437.4L1240.6 441.7L1243.0 446.0L1245.4 450.3L1247.8 454.6L1250.2 458.9L1252.6 463.2L1255.0 467.5M1231.2 430.8L1233.6 434.5L1236.0 438.2L1238.4 442.0L1240.7 445.7L1243.1 449.4L1245.5 453.2L1247.9 456.9L1250.2 460.6L1252.6 464.4L1255.0 468.1M1231.4 437.1L1233.8 440.2L1236.1 443.4L1238.5 446.6L1240.9 449.7L1243.2 452.9L1245.6 456.1L1247.9 459.2L1250.3 462.4L1252.6 465.6L1255.0 468.7M1231.6 443.4L1234.0 446.0L1236.3 448.6L1238.7 451.1L1241.0 453.7L1243.3 456.3L1245.7 458.9L1248.0 461.5L1250.3 464.1L1252.7 466.7L1255.0 469.3M1231.9 449.6L1234.2 451.7L1236.5 453.7L1238.8 455.7L1241.1 457.8L1243.4 459.8L1245.7 461.8L1248.1 463.8L1250.4 465.9L1252.7 467.9L1255.0 469.9M1232.1 455.9L1234.4 457.4L1236.7 458.9L1239.0 460.3L1241.2 461.8L1243.5 463.2L1245.8 464.7L1248.1 466.2L1250.4 467.6L1252.7 469.1L1255.0 470.5M1232.3 462.2L1234.6 463.1L1236.8 464.0L1239.1 464.9L1241.4 465.8L1243.6 466.7L1245.9 467.6L1248.2 468.5L1250.5 469.4L1252.7 470.2L1255.0 471.1M1232.5 468.5L1234.8 468.8L1237.0 469.2L1239.2 469.5L1241.5 469.8L1243.8 470.1L1246.0 470.5L1248.2 470.8L1250.5 471.1L1252.8 471.4L1255.0 471.8M1232.7 474.8L1234.9 474.5L1237.2 474.3L1239.4 474.1L1241.6 473.8L1243.9 473.6L1246.1 473.3L1248.3 473.1L1250.5 472.8L1252.8 472.6L1255.0 472.4M1232.9 481.1L1235.1 480.3L1237.3 479.5L1239.5 478.6L1241.8 477.8L1244.0 477.0L1246.2 476.2L1248.4 475.4L1250.6 474.6L1252.8 473.8L1255.0 473.0M1233.1 487.4L1235.3 486.0L1237.5 484.6L1239.7 483.2L1241.9 481.8L1244.1 480.5L1246.3 479.1L1248.4 477.7L1250.6 476.3L1252.8 474.9L1255.0 473.6M1233.4 493.6L1235.5 491.7L1237.7 489.8L1239.8 487.8L1242.0 485.9L1244.2 483.9L1246.3 482.0L1248.5 480.0L1250.7 478.1L1252.8 476.1L1255.0 474.2M1233.6 499.9L1235.7 497.4L1237.9 494.9L1240.0 492.4L1242.1 489.9L1244.3 487.4L1246.4 484.8L1248.6 482.3L1250.7 479.8L1252.9 477.3L1255.0 474.8M1233.8 506.2L1235.9 503.1L1238.0 500.0L1240.1 497.0L1242.3 493.9L1244.4 490.8L1246.5 487.7L1248.6 484.6L1250.8 481.6L1252.9 478.5L1255.0 475.4M1234.0 512.5L1236.1 508.9L1238.2 505.2L1240.3 501.5L1242.4 497.9L1244.5 494.2L1246.6 490.6L1248.7 487.0L1250.8 483.3L1252.9 479.6L1255.0 476.0" fill="none" stroke="#ffa010" stroke-width="1.3"/>
<polygon points="1721.0,501.0 1716.1,495.4 1710.5,490.1 1704.2,485.2 1697.3,480.7 1689.8,476.5 1681.5,472.7 1672.6,469.2 1663.1,466.1 1652.9,463.4 1642.0,461.0 1642.0,461.0 1644.3,464.3 1646.6,467.6 1648.9,470.9 1651.2,474.2 1653.5,477.5 1655.8,480.8 1658.1,484.1 1660.4,487.4 1662.7,490.7 1665.0,494.0 1665.0,494.0 1668.5,494.4 1672.0,494.7 1675.5,495.1 1679.0,495.4 1682.5,495.8 1686.0,496.1 1689.5,496.4 1693.0,496.8 1696.5,497.1 1700.0,497.5 1700.0,497.5 1702.1,497.9 1704.2,498.2 1706.3,498.6 1708.4,498.9 1710.5,499.2 1712.6,499.6 1714.7,499.9 1716.8,500.3 1718.9,500.6 1721.0,501.0" fill="#cfa470"/><path d="M1721.0 501.0L1719.5 500.8L1718.0 500.5L1716.5 500.3L1715.0 500.0L1713.5 499.8L1712.0 499.5L1710.5 499.2L1709.0 499.0L1707.5 498.8L1706.0 498.5L1704.5 498.2L1703.0 498.0L1701.5 497.8L1700.0 497.5M1718.0 497.4L1716.6 497.4L1715.1 497.4L1713.7 497.4L1712.2 497.4L1710.8 497.4L1709.3 497.4L1707.9 497.4L1706.5 497.4L1705.0 497.3L1703.6 497.3L1702.1 497.3L1700.7 497.3L1699.3 497.3L1697.8 497.3M1714.7 494.0L1713.4 494.2L1712.0 494.5L1710.6 494.7L1709.3 494.9L1707.9 495.1L1706.5 495.3L1705.2 495.5L1703.8 495.8L1702.4 496.0L1701.1 496.2L1699.7 496.4L1698.4 496.6L1697.0 496.8L1695.6 497.1M1711.2 490.8L1709.9 491.2L1708.7 491.6L1707.4 492.1L1706.1 492.5L1704.9 492.9L1703.6 493.4L1702.3 493.8L1701.1 494.2L1699.8 494.7L1698.5 495.1L1697.2 495.5L1696.0 496.0L1694.7 496.4L1693.4 496.8M1707.4 487.6L1706.3 488.3L1705.1 488.9L1704.0 489.6L1702.8 490.2L1701.7 490.8L1700.5 491.5L1699.3 492.1L1698.2 492.8L1697.0 493.4L1695.9 494.1L1694.7 494.7L1693.6 495.3L1692.4 496.0L1691.2 496.6M1703.4 484.6L1702.4 485.5L1701.4 486.3L1700.3 487.2L1699.3 488.0L1698.3 488.8L1697.3 489.7L1696.2 490.5L1695.2 491.4L1694.2 492.2L1693.2 493.0L1692.1 493.9L1691.1 494.7L1690.1 495.6L1689.1 496.4M1699.1 481.8L1698.2 482.8L1697.4 483.8L1696.5 484.9L1695.6 485.9L1694.7 486.9L1693.9 488.0L1693.0 489.0L1692.1 490.0L1691.2 491.0L1690.4 492.1L1689.5 493.1L1688.6 494.1L1687.7 495.2L1686.9 496.2M1694.6 479.1L1693.9 480.3L1693.1 481.5L1692.4 482.7L1691.7 483.9L1691.0 485.1L1690.3 486.3L1689.6 487.5L1688.9 488.7L1688.2 489.9L1687.5 491.1L1686.8 492.3L1686.1 493.6L1685.4 494.8L1684.7 496.0M1689.8 476.5L1689.2 477.9L1688.7 479.2L1688.2 480.6L1687.7 482.0L1687.2 483.4L1686.6 484.8L1686.1 486.1L1685.6 487.5L1685.1 488.9L1684.6 490.2L1684.1 491.6L1683.5 493.0L1683.0 494.4L1682.5 495.8M1684.7 474.1L1684.4 475.6L1684.1 477.1L1683.7 478.7L1683.4 480.2L1683.1 481.7L1682.8 483.3L1682.5 484.8L1682.2 486.3L1681.9 487.9L1681.6 489.4L1681.2 490.9L1680.9 492.5L1680.6 494.0L1680.3 495.5M1679.4 471.8L1679.3 473.5L1679.2 475.1L1679.1 476.8L1679.0 478.5L1678.9 480.2L1678.8 481.9L1678.7 483.5L1678.7 485.2L1678.6 486.9L1678.5 488.6L1678.4 490.3L1678.3 492.0L1678.2 493.6L1678.1 495.3M1673.8 469.6L1673.9 471.5L1674.1 473.3L1674.2 475.1L1674.4 476.9L1674.5 478.7L1674.7 480.5L1674.9 482.4L1675.0 484.2L1675.2 486.0L1675.3 487.8L1675.5 489.6L1675.6 491.5L1675.8 493.3L1675.9 495.1M1667.9 467.6L1668.4 469.6L1668.8 471.5L1669.2 473.5L1669.6 475.4L1670.0 477.4L1670.4 479.3L1670.8 481.2L1671.3 483.2L1671.7 485.1L1672.1 487.1L1672.5 489.0L1672.9 491.0L1673.3 492.9L1673.8 494.9M1661.8 465.8L1662.5 467.8L1663.2 469.9L1663.9 472.0L1664.6 474.0L1665.3 476.1L1666.0 478.1L1666.7 480.2L1667.4 482.3L1668.1 484.3L1668.8 486.4L1669.5 488.5L1670.2 490.5L1670.9 492.6L1671.6 494.7M1655.5 464.0L1656.5 466.2L1657.5 468.4L1658.5 470.5L1659.5 472.7L1660.4 474.9L1661.4 477.1L1662.4 479.2L1663.4 481.4L1664.4 483.6L1665.4 485.8L1666.4 487.9L1667.4 490.1L1668.4 492.3L1669.4 494.4M1648.9 462.4L1650.2 464.7L1651.5 467.0L1652.8 469.3L1654.1 471.5L1655.4 473.8L1656.7 476.1L1658.0 478.3L1659.3 480.6L1660.6 482.9L1662.0 485.1L1663.3 487.4L1664.6 489.7L1665.9 491.9L1667.2 494.2M1642.0 461.0L1643.6 463.4L1645.3 465.7L1646.9 468.1L1648.6 470.4L1650.2 472.8L1651.9 475.1L1653.5 477.5L1655.1 479.9L1656.8 482.2L1658.4 484.6L1660.1 486.9L1661.7 489.3L1663.4 491.6L1665.0 494.0M1721.0 501.0L1719.5 499.2L1718.0 497.4L1716.4 495.7L1714.7 494.0L1713.0 492.4L1711.2 490.8L1709.4 489.2L1707.4 487.6L1705.5 486.1L1703.4 484.6L1701.3 483.2L1699.1 481.8L1696.9 480.4L1694.6 479.1L1692.2 477.8L1689.8 476.5L1687.2 475.3L1684.7 474.1L1682.1 472.9L1679.4 471.8L1676.6 470.7L1673.8 469.6L1670.9 468.6L1667.9 467.6L1664.9 466.7L1661.8 465.8L1658.7 464.9L1655.5 464.0L1652.2 463.2L1648.9 462.4L1645.5 461.7L1642.0 461.0M1718.0 500.5L1716.6 498.9L1715.1 497.4L1713.6 495.9L1712.0 494.5L1710.4 493.0L1708.7 491.6L1706.9 490.3L1705.1 488.9L1703.3 487.6L1701.4 486.3L1699.4 485.1L1697.4 483.8L1695.3 482.6L1693.1 481.5L1691.0 480.4L1688.7 479.2L1686.4 478.2L1684.1 477.1L1681.6 476.1L1679.2 475.1L1676.7 474.2L1674.1 473.3L1671.5 472.4L1668.8 471.5L1666.0 470.7L1663.2 469.9L1660.4 469.1L1657.5 468.4L1654.5 467.7L1651.5 467.0L1648.4 466.3L1645.3 465.7M1715.0 500.0L1713.6 498.7L1712.2 497.4L1710.8 496.1L1709.3 494.9L1707.7 493.7L1706.1 492.5L1704.5 491.3L1702.8 490.2L1701.1 489.1L1699.3 488.0L1697.5 486.9L1695.6 485.9L1693.7 484.9L1691.7 483.9L1689.7 482.9L1687.7 482.0L1685.6 481.1L1683.4 480.2L1681.2 479.3L1679.0 478.5L1676.7 477.7L1674.4 476.9L1672.0 476.1L1669.6 475.4L1667.1 474.7L1664.6 474.0L1662.1 473.4L1659.5 472.7L1656.8 472.1L1654.1 471.5L1651.4 471.0L1648.6 470.4M1712.0 499.5L1710.7 498.4L1709.3 497.4L1708.0 496.3L1706.5 495.3L1705.1 494.3L1703.6 493.4L1702.1 492.4L1700.5 491.5L1698.9 490.6L1697.3 489.7L1695.6 488.8L1693.9 488.0L1692.1 487.1L1690.3 486.3L1688.5 485.5L1686.6 484.8L1684.7 484.0L1682.8 483.3L1680.8 482.6L1678.8 481.9L1676.8 481.2L1674.7 480.5L1672.6 479.9L1670.4 479.3L1668.2 478.7L1666.0 478.1L1663.7 477.6L1661.4 477.1L1659.1 476.6L1656.7 476.1L1654.3 475.6L1651.9 475.1M1709.0 499.0L1707.7 498.2L1706.5 497.4L1705.2 496.5L1703.8 495.8L1702.4 495.0L1701.1 494.2L1699.6 493.5L1698.2 492.8L1696.7 492.1L1695.2 491.4L1693.7 490.7L1692.1 490.0L1690.5 489.4L1688.9 488.7L1687.3 488.1L1685.6 487.5L1683.9 486.9L1682.2 486.3L1680.4 485.8L1678.7 485.2L1676.8 484.7L1675.0 484.2L1673.1 483.7L1671.3 483.2L1669.3 482.7L1667.4 482.3L1665.4 481.8L1663.4 481.4L1661.4 481.0L1659.3 480.6L1657.3 480.2L1655.1 479.9M1706.0 498.5L1704.8 497.9L1703.6 497.3L1702.3 496.8L1701.1 496.2L1699.8 495.6L1698.5 495.1L1697.2 494.6L1695.9 494.1L1694.5 493.5L1693.2 493.0L1691.8 492.6L1690.4 492.1L1688.9 491.6L1687.5 491.1L1686.0 490.7L1684.6 490.2L1683.1 489.8L1681.6 489.4L1680.0 489.0L1678.5 488.6L1676.9 488.2L1675.3 487.8L1673.7 487.4L1672.1 487.1L1670.4 486.7L1668.8 486.4L1667.1 486.1L1665.4 485.8L1663.7 485.4L1662.0 485.1L1660.2 484.9L1658.4 484.6M1703.0 498.0L1701.9 497.6L1700.7 497.3L1699.5 497.0L1698.4 496.6L1697.2 496.3L1696.0 496.0L1694.8 495.7L1693.6 495.3L1692.3 495.0L1691.1 494.7L1689.9 494.4L1688.6 494.1L1687.4 493.8L1686.1 493.6L1684.8 493.3L1683.5 493.0L1682.2 492.7L1680.9 492.5L1679.6 492.2L1678.3 492.0L1677.0 491.7L1675.6 491.5L1674.3 491.2L1672.9 491.0L1671.6 490.8L1670.2 490.5L1668.8 490.3L1667.4 490.1L1666.0 489.9L1664.6 489.7L1663.1 489.5L1661.7 489.3M1700.0 497.5L1698.9 497.4L1697.8 497.3L1696.7 497.2L1695.6 497.1L1694.5 497.0L1693.4 496.8L1692.3 496.7L1691.2 496.6L1690.2 496.5L1689.1 496.4L1688.0 496.3L1686.9 496.2L1685.8 496.1L1684.7 496.0L1683.6 495.9L1682.5 495.8L1681.4 495.6L1680.3 495.5L1679.2 495.4L1678.1 495.3L1677.0 495.2L1675.9 495.1L1674.8 495.0L1673.8 494.9L1672.7 494.8L1671.6 494.7L1670.5 494.5L1669.4 494.4L1668.3 494.3L1667.2 494.2L1666.1 494.1L1665.0 494.0" fill="none" stroke="#ffa010" stroke-width="1.2"/>
<polygon points="1721.0,501.0 1716.1,505.4 1710.4,509.6 1704.0,513.4 1697.0,516.9 1689.2,520.1 1680.8,523.0 1671.7,525.6 1661.8,527.9 1651.2,529.8 1640.0,531.5 1640.0,531.5 1642.4,528.7 1644.8,525.9 1647.2,523.1 1649.6,520.3 1652.0,517.5 1654.4,514.7 1656.8,511.9 1659.2,509.1 1661.6,506.3 1664.0,503.5 1664.0,503.5 1667.6,503.4 1671.2,503.4 1674.8,503.4 1678.4,503.3 1682.0,503.2 1685.6,503.2 1689.2,503.1 1692.8,503.1 1696.4,503.1 1700.0,503.0 1700.0,503.0 1702.1,502.8 1704.2,502.6 1706.3,502.4 1708.4,502.2 1710.5,502.0 1712.6,501.8 1714.7,501.6 1716.8,501.4 1718.9,501.2 1721.0,501.0" fill="#cfa470"/><path d="M1721.0 501.0L1719.5 501.1L1718.0 501.3L1716.5 501.4L1715.0 501.6L1713.5 501.7L1712.0 501.9L1710.5 502.0L1709.0 502.1L1707.5 502.3L1706.0 502.4L1704.5 502.6L1703.0 502.7L1701.5 502.9L1700.0 503.0M1718.0 503.8L1716.5 503.8L1715.1 503.7L1713.7 503.6L1712.2 503.6L1710.8 503.5L1709.3 503.5L1707.9 503.4L1706.4 503.4L1705.0 503.3L1703.5 503.3L1702.1 503.2L1700.6 503.1L1699.2 503.1L1697.8 503.0M1714.7 506.5L1713.3 506.3L1712.0 506.0L1710.6 505.8L1709.2 505.5L1707.8 505.3L1706.5 505.0L1705.1 504.8L1703.7 504.5L1702.4 504.3L1701.0 504.0L1699.6 503.8L1698.2 503.6L1696.9 503.3L1695.5 503.1M1711.1 509.1L1709.9 508.7L1708.6 508.2L1707.3 507.8L1706.0 507.4L1704.8 506.9L1703.5 506.5L1702.2 506.1L1700.9 505.7L1699.6 505.2L1698.4 504.8L1697.1 504.4L1695.8 503.9L1694.5 503.5L1693.2 503.1M1707.3 511.5L1706.1 510.9L1705.0 510.3L1703.8 509.7L1702.7 509.1L1701.5 508.5L1700.3 507.9L1699.2 507.3L1698.0 506.7L1696.8 506.1L1695.7 505.5L1694.5 504.9L1693.3 504.3L1692.2 503.7L1691.0 503.1M1703.2 513.9L1702.2 513.1L1701.1 512.3L1700.1 511.6L1699.1 510.8L1698.0 510.0L1697.0 509.3L1696.0 508.5L1694.9 507.7L1693.9 507.0L1692.9 506.2L1691.8 505.5L1690.8 504.7L1689.8 503.9L1688.8 503.2M1698.8 516.1L1697.9 515.2L1697.1 514.2L1696.2 513.3L1695.3 512.4L1694.4 511.5L1693.5 510.5L1692.7 509.6L1691.8 508.7L1690.9 507.8L1690.0 506.9L1689.1 505.9L1688.3 505.0L1687.4 504.1L1686.5 503.2M1694.2 518.2L1693.5 517.1L1692.8 516.0L1692.0 515.0L1691.3 513.9L1690.6 512.8L1689.9 511.8L1689.2 510.7L1688.5 509.6L1687.8 508.6L1687.1 507.5L1686.4 506.4L1685.7 505.4L1685.0 504.3L1684.2 503.2M1689.2 520.1L1688.7 518.9L1688.2 517.7L1687.7 516.5L1687.2 515.3L1686.7 514.1L1686.1 512.9L1685.6 511.7L1685.1 510.5L1684.6 509.3L1684.1 508.1L1683.6 506.9L1683.0 505.7L1682.5 504.5L1682.0 503.2M1684.1 522.0L1683.7 520.6L1683.4 519.3L1683.1 518.0L1682.8 516.6L1682.5 515.3L1682.2 514.0L1681.9 512.6L1681.6 511.3L1681.3 510.0L1681.0 508.6L1680.7 507.3L1680.4 506.0L1680.1 504.6L1679.8 503.3M1678.6 523.7L1678.5 522.2L1678.4 520.8L1678.3 519.3L1678.3 517.9L1678.2 516.4L1678.1 515.0L1678.0 513.5L1678.0 512.0L1677.9 510.6L1677.8 509.1L1677.7 507.7L1677.7 506.2L1677.6 504.8L1677.5 503.3M1672.8 525.3L1673.0 523.7L1673.2 522.2L1673.4 520.6L1673.5 519.0L1673.7 517.5L1673.9 515.9L1674.0 514.3L1674.2 512.8L1674.4 511.2L1674.6 509.6L1674.7 508.0L1674.9 506.5L1675.1 504.9L1675.2 503.3M1666.8 526.8L1667.3 525.1L1667.7 523.4L1668.1 521.8L1668.6 520.1L1669.0 518.4L1669.5 516.8L1669.9 515.1L1670.3 513.4L1670.8 511.7L1671.2 510.1L1671.7 508.4L1672.1 506.7L1672.6 505.0L1673.0 503.4M1660.5 528.1L1661.3 526.4L1662.0 524.6L1662.7 522.8L1663.4 521.1L1664.2 519.3L1664.9 517.5L1665.6 515.8L1666.4 514.0L1667.1 512.2L1667.8 510.5L1668.6 508.7L1669.3 506.9L1670.0 505.2L1670.8 503.4M1654.0 529.4L1655.0 527.5L1656.0 525.7L1657.1 523.8L1658.1 522.0L1659.1 520.1L1660.2 518.3L1661.2 516.4L1662.3 514.6L1663.3 512.7L1664.3 510.9L1665.4 509.0L1666.4 507.1L1667.5 505.3L1668.5 503.4M1647.1 530.5L1648.5 528.6L1649.8 526.6L1651.2 524.7L1652.6 522.8L1653.9 520.8L1655.3 518.9L1656.7 517.0L1658.0 515.1L1659.4 513.1L1660.8 511.2L1662.1 509.3L1663.5 507.3L1664.9 505.4L1666.2 503.5M1640.0 531.5L1641.7 529.5L1643.4 527.5L1645.1 525.5L1646.9 523.5L1648.6 521.5L1650.3 519.5L1652.0 517.5L1653.7 515.5L1655.4 513.5L1657.1 511.5L1658.9 509.5L1660.6 507.5L1662.3 505.5L1664.0 503.5M1721.0 501.0L1719.5 502.4L1718.0 503.8L1716.4 505.2L1714.7 506.5L1713.0 507.8L1711.1 509.1L1709.3 510.3L1707.3 511.5L1705.3 512.7L1703.2 513.9L1701.1 515.0L1698.8 516.1L1696.5 517.1L1694.2 518.2L1691.7 519.2L1689.2 520.1L1686.7 521.1L1684.1 522.0L1681.3 522.8L1678.6 523.7L1675.7 524.5L1672.8 525.3L1669.9 526.1L1666.8 526.8L1663.7 527.5L1660.5 528.1L1657.3 528.8L1654.0 529.4L1650.6 530.0L1647.1 530.5L1643.6 531.0L1640.0 531.5M1718.0 501.3L1716.6 502.5L1715.1 503.7L1713.6 504.9L1712.0 506.0L1710.3 507.1L1708.6 508.2L1706.8 509.3L1705.0 510.3L1703.1 511.3L1701.1 512.3L1699.1 513.3L1697.1 514.2L1694.9 515.1L1692.8 516.0L1690.5 516.9L1688.2 517.7L1685.9 518.5L1683.4 519.3L1681.0 520.1L1678.4 520.8L1675.8 521.5L1673.2 522.2L1670.5 522.8L1667.7 523.4L1664.9 524.0L1662.0 524.6L1659.0 525.2L1656.0 525.7L1653.0 526.2L1649.8 526.6L1646.7 527.1L1643.4 527.5M1715.0 501.6L1713.6 502.6L1712.2 503.6L1710.7 504.6L1709.2 505.5L1707.6 506.5L1706.0 507.4L1704.4 508.3L1702.7 509.1L1700.9 510.0L1699.1 510.8L1697.2 511.6L1695.3 512.4L1693.3 513.2L1691.3 513.9L1689.3 514.6L1687.2 515.3L1685.0 516.0L1682.8 516.6L1680.6 517.3L1678.3 517.9L1675.9 518.5L1673.5 519.0L1671.1 519.6L1668.6 520.1L1666.0 520.6L1663.4 521.1L1660.8 521.5L1658.1 522.0L1655.4 522.4L1652.6 522.8L1649.7 523.1L1646.9 523.5M1712.0 501.9L1710.7 502.7L1709.3 503.5L1707.9 504.3L1706.5 505.0L1705.0 505.8L1703.5 506.5L1701.9 507.2L1700.3 507.9L1698.7 508.6L1697.0 509.3L1695.3 509.9L1693.5 510.5L1691.8 511.2L1689.9 511.8L1688.1 512.3L1686.1 512.9L1684.2 513.4L1682.2 514.0L1680.2 514.5L1678.1 515.0L1676.0 515.4L1673.9 515.9L1671.7 516.3L1669.5 516.8L1667.2 517.2L1664.9 517.5L1662.6 517.9L1660.2 518.3L1657.8 518.6L1655.3 518.9L1652.8 519.2L1650.3 519.5M1709.0 502.1L1707.7 502.8L1706.4 503.4L1705.1 504.0L1703.7 504.5L1702.3 505.1L1700.9 505.7L1699.5 506.2L1698.0 506.7L1696.5 507.2L1694.9 507.7L1693.4 508.2L1691.8 508.7L1690.2 509.2L1688.5 509.6L1686.8 510.1L1685.1 510.5L1683.4 510.9L1681.6 511.3L1679.8 511.7L1678.0 512.0L1676.1 512.4L1674.2 512.8L1672.3 513.1L1670.3 513.4L1668.4 513.7L1666.4 514.0L1664.3 514.3L1662.3 514.6L1660.2 514.8L1658.0 515.1L1655.9 515.3L1653.7 515.5M1706.0 502.4L1704.8 502.8L1703.5 503.3L1702.3 503.7L1701.0 504.0L1699.7 504.4L1698.4 504.8L1697.0 505.2L1695.7 505.5L1694.3 505.9L1692.9 506.2L1691.5 506.5L1690.0 506.9L1688.6 507.2L1687.1 507.5L1685.6 507.8L1684.1 508.1L1682.5 508.4L1681.0 508.6L1679.4 508.9L1677.8 509.1L1676.2 509.4L1674.6 509.6L1672.9 509.8L1671.2 510.1L1669.5 510.3L1667.8 510.5L1666.1 510.7L1664.3 510.9L1662.6 511.0L1660.8 511.2L1659.0 511.4L1657.1 511.5M1703.0 502.7L1701.8 502.9L1700.6 503.1L1699.4 503.4L1698.2 503.6L1697.0 503.8L1695.8 503.9L1694.6 504.1L1693.3 504.3L1692.1 504.5L1690.8 504.7L1689.5 504.9L1688.3 505.0L1687.0 505.2L1685.7 505.4L1684.4 505.5L1683.0 505.7L1681.7 505.8L1680.4 506.0L1679.0 506.1L1677.7 506.2L1676.3 506.4L1674.9 506.5L1673.5 506.6L1672.1 506.7L1670.7 506.8L1669.3 506.9L1667.9 507.0L1666.4 507.1L1665.0 507.2L1663.5 507.3L1662.0 507.4L1660.6 507.5M1700.0 503.0L1698.9 503.0L1697.8 503.0L1696.6 503.0L1695.5 503.1L1694.4 503.1L1693.2 503.1L1692.1 503.1L1691.0 503.1L1689.9 503.1L1688.8 503.2L1687.6 503.2L1686.5 503.2L1685.4 503.2L1684.2 503.2L1683.1 503.2L1682.0 503.2L1680.9 503.3L1679.8 503.3L1678.6 503.3L1677.5 503.3L1676.4 503.3L1675.2 503.3L1674.1 503.4L1673.0 503.4L1671.9 503.4L1670.8 503.4L1669.6 503.4L1668.5 503.4L1667.4 503.5L1666.2 503.5L1665.1 503.5L1664.0 503.5" fill="none" stroke="#ffa010" stroke-width="1.2"/>
<path d="M1130.4 412 Q1180 428 1232 423.5 L1257 467.5 L1662 494 L1639 459 Q1700 470 1724.5 501" fill="none" stroke="#d83000" stroke-width="1" stroke-dasharray="4 4" opacity="0.85"/>
<polygon points="1447.6,224.5 1449.5,222.0 1456.4,222.0 1458.2,221.3 1455.7,215.1 1457.6,212.6 1462.0,213.8 1465.8,216.9 1464.5,208.8 1467.0,206.9 1471.4,208.2 1475.2,213.2 1476.4,208.8 1479.6,206.5 1483.9,208.2 1487.1,213.2 1488.3,209.4 1492.1,207.5 1495.9,210.0 1497.1,214.4 1500.9,212.6 1505.3,213.8 1506.5,218.8 1505.9,222.0 1509.7,223.2 1510.3,227.6 1507.8,232.6 1507.1,240.1 1512.8,245.8 1510.9,247.0 1506.5,246.4 1504.6,245.2 1505.3,250.2 1506.5,257.7 1505.9,266.5 1502.8,272.7 1498.4,276.5 1500.3,282.8 1505.3,290.3 1510.3,297.8 1514.0,306.6 1516.6,315.4 1517.8,325.0 1516,345 1509,357.3 1494,378.2 1484.1,380.0 1476.0,388.1 1467.9,398.5 1459.8,410.1 1451.7,420.5 1446.0,428.6 1443.6,437.9 1443.1,449.4 1443.6,461.0 1449.4,467.9 1457.5,472.6 1462.2,477.2 1461.0,480.7 1422.8,479.5 1419.3,472.6 1419.9,470.3 1426.3,464.5 1427.4,458.7 1426.9,457.5 1421.7,456.4 1421.1,454.1 1426.3,451.7 1426.9,437.9 1426.3,426.3 1426.3,419.9 1414.7,418.2 1403.1,414.7 1391.6,410.1 1384.6,407.2 1370,405 1359.5,403.6 1348.8,400.0 1341.0,399.0 1338.0,392.8 1334.1,390.5 1331.8,385.1 1327.9,383.5 1326.4,375.8 1322.5,374.3 1319.4,365.0 1319.4,355.7 1317.9,361.9 1314.8,363.5 1312.5,358.8 1313.3,348.0 1311.0,354.2 1308.6,359.6 1305.6,357.3 1303.2,344.9 1305.6,334.1 1302.5,340.3 1301.7,349.6 1299.4,351.1 1296.3,344.9 1297.1,334.1 1299.4,324.9 1297.1,325.6 1294.0,332.6 1294.0,343.4 1290.9,344.9 1287.8,338.8 1287.0,328.0 1289.4,319.5 1286.3,320.2 1283.2,329.5 1283.2,340.3 1281.6,347.3 1278.5,346.5 1277.0,338.8 1277.8,326.4 1280.1,314.1 1282.4,307.9 1280.1,297.1 1276.2,287.1 1273.1,287.8 1270.1,297.1 1270.1,309.4 1273.1,322.6 1272.4,326.4 1268.5,324.1 1263.9,312.5 1262.3,298.6 1265.4,284.8 1271.6,272.4 1282.4,261.6 1296.3,254.7 1311.7,253.1 1327.2,255.4 1342.6,263.1 1358.0,278.6 1371.9,297.1 1384.3,315.6 1395.1,331.0 1404.3,331.5 1412,328.5 1420,322.9 1427.5,312.9 1433.8,302.8 1440,291.6 1446.3,277.8 1451.3,266.5 1456.4,255.2 1461.4,246.4 1464.5,240.8 1460.1,238.3 1455.1,235.1 1449.5,230.1" fill="url(#m3d)" stroke="#ff9c10" stroke-width="1.4" stroke-linejoin="round"/>
<polygon points="1447.6,224.5 1449.5,222.0 1456.4,222.0 1458.2,221.3 1455.7,215.1 1457.6,212.6 1462.0,213.8 1465.8,216.9 1464.5,208.8 1467.0,206.9 1471.4,208.2 1475.2,213.2 1476.4,208.8 1479.6,206.5 1483.9,208.2 1487.1,213.2 1488.3,209.4 1492.1,207.5 1495.9,210.0 1497.1,214.4 1500.9,212.6 1505.3,213.8 1506.5,218.8 1505.9,222.0 1509.7,223.2 1510.3,227.6 1507.8,232.6 1507.1,240.1 1512.8,245.8 1510.9,247.0 1506.5,246.4 1504.6,245.2 1505.3,250.2 1506.5,257.7 1505.9,266.5 1502.8,272.7 1498.4,276.5 1500.3,282.8 1505.3,290.3 1510.3,297.8 1514.0,306.6 1516.6,315.4 1517.8,325.0 1516,345 1509,357.3 1494,378.2 1484.1,380.0 1476.0,388.1 1467.9,398.5 1459.8,410.1 1451.7,420.5 1446.0,428.6 1443.6,437.9 1443.1,449.4 1443.6,461.0 1449.4,467.9 1457.5,472.6 1462.2,477.2 1461.0,480.7 1422.8,479.5 1419.3,472.6 1419.9,470.3 1426.3,464.5 1427.4,458.7 1426.9,457.5 1421.7,456.4 1421.1,454.1 1426.3,451.7 1426.9,437.9 1426.3,426.3 1426.3,419.9 1414.7,418.2 1403.1,414.7 1391.6,410.1 1384.6,407.2 1370,405 1359.5,403.6 1348.8,400.0 1341.0,399.0 1338.0,392.8 1334.1,390.5 1331.8,385.1 1327.9,383.5 1326.4,375.8 1322.5,374.3 1319.4,365.0 1319.4,355.7 1317.9,361.9 1314.8,363.5 1312.5,358.8 1313.3,348.0 1311.0,354.2 1308.6,359.6 1305.6,357.3 1303.2,344.9 1305.6,334.1 1302.5,340.3 1301.7,349.6 1299.4,351.1 1296.3,344.9 1297.1,334.1 1299.4,324.9 1297.1,325.6 1294.0,332.6 1294.0,343.4 1290.9,344.9 1287.8,338.8 1287.0,328.0 1289.4,319.5 1286.3,320.2 1283.2,329.5 1283.2,340.3 1281.6,347.3 1278.5,346.5 1277.0,338.8 1277.8,326.4 1280.1,314.1 1282.4,307.9 1280.1,297.1 1276.2,287.1 1273.1,287.8 1270.1,297.1 1270.1,309.4 1273.1,322.6 1272.4,326.4 1268.5,324.1 1263.9,312.5 1262.3,298.6 1265.4,284.8 1271.6,272.4 1282.4,261.6 1296.3,254.7 1311.7,253.1 1327.2,255.4 1342.6,263.1 1358.0,278.6 1371.9,297.1 1384.3,315.6 1395.1,331.0 1404.3,331.5 1412,328.5 1420,322.9 1427.5,312.9 1433.8,302.8 1440,291.6 1446.3,277.8 1451.3,266.5 1456.4,255.2 1461.4,246.4 1464.5,240.8 1460.1,238.3 1455.1,235.1 1449.5,230.1" fill="none" stroke="#d84000" stroke-width="0.9" stroke-dasharray="2.5 3.5" stroke-linejoin="round" opacity="0.8"/>
<clipPath id="cr3"><polygon points="1447.6,224.5 1449.5,222.0 1456.4,222.0 1458.2,221.3 1455.7,215.1 1457.6,212.6 1462.0,213.8 1465.8,216.9 1464.5,208.8 1467.0,206.9 1471.4,208.2 1475.2,213.2 1476.4,208.8 1479.6,206.5 1483.9,208.2 1487.1,213.2 1488.3,209.4 1492.1,207.5 1495.9,210.0 1497.1,214.4 1500.9,212.6 1505.3,213.8 1506.5,218.8 1505.9,222.0 1509.7,223.2 1510.3,227.6 1507.8,232.6 1507.1,240.1 1512.8,245.8 1510.9,247.0 1506.5,246.4 1504.6,245.2 1505.3,250.2 1506.5,257.7 1505.9,266.5 1502.8,272.7 1498.4,276.5 1500.3,282.8 1505.3,290.3 1510.3,297.8 1514.0,306.6 1516.6,315.4 1517.8,325.0 1516,345 1509,357.3 1494,378.2 1484.1,380.0 1476.0,388.1 1467.9,398.5 1459.8,410.1 1451.7,420.5 1446.0,428.6 1443.6,437.9 1443.1,449.4 1443.6,461.0 1449.4,467.9 1457.5,472.6 1462.2,477.2 1461.0,480.7 1422.8,479.5 1419.3,472.6 1419.9,470.3 1426.3,464.5 1427.4,458.7 1426.9,457.5 1421.7,456.4 1421.1,454.1 1426.3,451.7 1426.9,437.9 1426.3,426.3 1426.3,419.9 1414.7,418.2 1403.1,414.7 1391.6,410.1 1384.6,407.2 1370,405 1359.5,403.6 1348.8,400.0 1341.0,399.0 1338.0,392.8 1334.1,390.5 1331.8,385.1 1327.9,383.5 1326.4,375.8 1322.5,374.3 1319.4,365.0 1319.4,355.7 1317.9,361.9 1314.8,363.5 1312.5,358.8 1313.3,348.0 1311.0,354.2 1308.6,359.6 1305.6,357.3 1303.2,344.9 1305.6,334.1 1302.5,340.3 1301.7,349.6 1299.4,351.1 1296.3,344.9 1297.1,334.1 1299.4,324.9 1297.1,325.6 1294.0,332.6 1294.0,343.4 1290.9,344.9 1287.8,338.8 1287.0,328.0 1289.4,319.5 1286.3,320.2 1283.2,329.5 1283.2,340.3 1281.6,347.3 1278.5,346.5 1277.0,338.8 1277.8,326.4 1280.1,314.1 1282.4,307.9 1280.1,297.1 1276.2,287.1 1273.1,287.8 1270.1,297.1 1270.1,309.4 1273.1,322.6 1272.4,326.4 1268.5,324.1 1263.9,312.5 1262.3,298.6 1265.4,284.8 1271.6,272.4 1282.4,261.6 1296.3,254.7 1311.7,253.1 1327.2,255.4 1342.6,263.1 1358.0,278.6 1371.9,297.1 1384.3,315.6 1395.1,331.0 1404.3,331.5 1412,328.5 1420,322.9 1427.5,312.9 1433.8,302.8 1440,291.6 1446.3,277.8 1451.3,266.5 1456.4,255.2 1461.4,246.4 1464.5,240.8 1460.1,238.3 1455.1,235.1 1449.5,230.1"/></clipPath>
<g clip-path="url(#cr3)" fill="#ffa010" opacity="0.85"><path d="M1330 330L1345 300L1400 395L1375 405Z"/><path d="M1262 320Q1262 262 1300 255L1312 262Q1275 275 1272 330Z"/><path d="M1395 395L1440 340L1455 345L1420 415Z"/><path d="M1440 240L1520 240L1515 270L1450 262Z"/><path d="M1440 410L1470 395L1450 480L1420 480Z" opacity="0.5"/></g>
<circle cx="1436.4" cy="489.2" r="2.6" fill="#f0b060" stroke="#402000" stroke-width="0.8"/>
<circle cx="1396.3" cy="360.3" r="14.5" fill="none" stroke="#fff" stroke-width="1.2"/>
<path d="M1396.3 345V292" stroke="#2020e0" stroke-width="1.4"/><path d="M1396.3 276.5L1392 293H1400.6Z" fill="#2020e0"/>
<path d="M1411 361H1458" stroke="#e02020" stroke-width="1.4"/><path d="M1476 361.8L1458 357.5V366Z" fill="#e02020"/>
<path d="M1402 358.5L1416 355" stroke="#20d020" stroke-width="1.2"/><ellipse cx="1421" cy="354.5" rx="4.5" ry="3.8" fill="#30e030"/>
<g fill="none"><circle cx="1347.6" cy="627.6" r="12" stroke="#fff" stroke-width="1.2"/><circle cx="1347.6" cy="627.6" r="12" stroke="#d02020" stroke-width="1.2" stroke-dasharray="4 4"/><path d="M1323 627.6H1341M1354 627.6H1372M1347.6 603V621M1347.6 634V652" stroke="#000" stroke-width="1"/></g>
<g font-family="DejaVu Sans, Liberation Sans, sans-serif">
<text transform="matrix(0.62,-0.31,0.05,1.1,1264.5,641)" font-size="82" fill="#a4a4c8">W</text>
<text transform="matrix(-1.175,-0.06,0,1,1524,602.7)" font-size="87" fill="#a6a6a6">N</text>
<text x="1343" y="703" font-size="107" fill="#acacac" textLength="53" lengthAdjust="spacingAndGlyphs">S</text>
<text transform="matrix(0.2,-0.18,0,1,1594,669)" font-size="100" fill="#a4a4c8">E</text>
</g>
<circle cx="1122.5" cy="743" r="113.3" fill="#374044"/>
<rect x="1008.5" y="857" width="227.5" height="44" fill="#374044"/>
<g font-family="DejaVu Sans, Liberation Sans, sans-serif">
<text x="1034.5" y="768" font-size="125" font-style="italic" fill="#fff">F</text>
<text x="1106" y="768" font-size="126" font-style="italic" fill="#29abe2">M</text>
<text x="1038" y="785" font-size="13.4" fill="#29abe2" textLength="172" lengthAdjust="spacing">FRANCESCO MILANESE</text>
<text x="1061" y="813" font-size="25" font-style="italic" fill="#fff" textLength="124" lengthAdjust="spacingAndGlyphs">3D Models</text>
<text x="1028" y="888.5" font-size="26.5" font-style="italic" font-weight="bold" fill="#c8c800" textLength="186" lengthAdjust="spacingAndGlyphs">Stock Models</text>
</g>
<g fill="none"><path d="M1003 981V958" stroke="#2020d8" stroke-width="2.4"/><path d="M1003 981L1025.5 983" stroke="#e02020" stroke-width="2"/><path d="M1003 981L1017.5 976" stroke="#30b030" stroke-width="2"/></g>
<g font-family="DejaVu Sans, sans-serif" font-weight="bold"><text x="1005" y="955.6" font-size="13" fill="#2828d8">z</text><text x="1013.5" y="974.5" font-size="13" fill="#30b030">y</text><text x="1030.5" y="981.6" font-size="9" fill="#d82020">x</text></g>
</svg>
<svg width="1920" height="1037" viewBox="0 0 1920 1037" font-family="DejaVu Sans, Liberation Sans, sans-serif" font-size="13.2">
<defs>
<linearGradient id="gdk" x1="0" y1="0" x2="0" y2="1"><stop offset="0" stop-color="#535353"/><stop offset="1" stop-color="#3d3d3d"/></linearGradient>
<linearGradient id="glt" x1="0" y1="0" x2="0" y2="1"><stop offset="0" stop-color="#b0b0b0"/><stop offset="1" stop-color="#989898"/></linearGradient>
<linearGradient id="gmd" x1="0" y1="0" x2="0" y2="1"><stop offset="0" stop-color="#a6a6a6"/><stop offset="1" stop-color="#8c8c8c"/></linearGradient>
<linearGradient id="gbl" x1="0" y1="0" x2="0" y2="1"><stop offset="0" stop-color="#5a86c8"/><stop offset="1" stop-color="#5078b8"/></linearGradient>
<linearGradient id="gsel" x1="0" y1="0" x2="0" y2="1"><stop offset="0" stop-color="#6c6c6c"/><stop offset="1" stop-color="#7c7c7c"/></linearGradient>
</defs>
<path d="M1799 10.5H1809" stroke="#000" stroke-width="1"/>
<path d="M1844.5 7.5H1851.5V14.5H1844.5Z M1846.5 7.5V5.5H1853.5V12.5H1851.5" stroke="#000" stroke-width="1" fill="none"/>
<path d="M1889 5L1899 15M1899 5L1889 15" stroke="#000" stroke-width="1.1"/>
<g transform="translate(10.5,10.8) scale(0.85)"><path d="M-9 2.5L-1 -3.5M-6 -3.5H1.5M-3.5 -7L2 -3" stroke="#e87d0d" stroke-width="2.2" stroke-linecap="round" fill="none"/><ellipse cx="2" cy="1" rx="6.6" ry="5.8" fill="#f5922a"/><circle cx="2.3" cy="0.6" r="3.6" fill="#fff"/><circle cx="2.3" cy="0.6" r="2.2" fill="#2b5fb4"/></g>
<text x="23" y="15.5" font-family="Liberation Sans, sans-serif" font-size="12" fill="#000" textLength="424" lengthAdjust="spacing">Blender* [C:\Users\Francesco-Fisso\Desktop\weather_vane\weather_vane.blend]</text>
<text x="1002" y="83.6" fill="#fff" letter-spacing="-0.08" >User Persp</text>
<text x="1002" y="108.7" fill="#fff" letter-spacing="-0.08" >Meters</text>
<text x="1052" y="994.3" fill="#fff" letter-spacing="-0.25" >(1) rotating_part</text>
<path d="M0 44L13 57M0 48L9 57M0 52L5 57" stroke="#9a9a9a" stroke-width="1"/>
<clipPath id="c11_29"><rect x="11.5" y="29.5" width="39.0" height="24" rx="5"/></clipPath>
<g clip-path="url(#c11_29)">
<rect x="11.5" y="29.5" width="39.0" height="24" fill="url(#gdk)"/>
</g>
<rect x="11.5" y="29.5" width="39.0" height="24" rx="5" fill="none" stroke="#2a2a2a" stroke-width="1" opacity="0.85"/>
<circle cx="25.5" cy="41.5" r="7" fill="#3a5ca4" stroke="#d0d8ea" stroke-width="1.2"/><text x="25.5" y="46" font-size="11" font-weight="bold" font-family="DejaVu Serif, serif" text-anchor="middle" fill="#fff">i</text>
<path d="M38.4 39.699999999999996L42 33.099999999999994L45.6 39.699999999999996ZM38.4 43.3L42 49.9L45.6 43.3Z" fill="#a6a6a6"/>
<text x="65.5" y="47.5" fill="#000" letter-spacing="0" >File</text>
<text x="111.8" y="47.5" fill="#000" letter-spacing="0" >Render</text>
<text x="182.6" y="47.5" fill="#000" letter-spacing="0" >Window</text>
<text x="258.4" y="47.5" fill="#000" letter-spacing="0" >Help</text>
<clipPath id="c304_29"><rect x="304" y="29.5" width="239.5" height="24" rx="5"/></clipPath>
<g clip-path="url(#c304_29)">
<rect x="304" y="29.5" width="39.69999999999999" height="24" fill="url(#gdk)"/>
<rect x="343.7" y="29.5" width="150.0" height="24" fill="url(#glt)"/>
<rect x="493.7" y="29.5" width="25.000000000000057" height="24" fill="url(#gmd)"/>
<rect x="518.7" y="29.5" width="24.799999999999955" height="24" fill="url(#gmd)"/>
<rect x="343.2" y="29.5" width="1" height="24" fill="#2a2a2a" opacity="0.8"/>
<rect x="493.2" y="29.5" width="1" height="24" fill="#2a2a2a" opacity="0.8"/>
<rect x="518.2" y="29.5" width="1" height="24" fill="#2a2a2a" opacity="0.8"/>
</g>
<rect x="304" y="29.5" width="239.5" height="24" rx="5" fill="none" stroke="#2a2a2a" stroke-width="1" opacity="0.85"/>
<g><rect x="311" y="34" width="7" height="8" fill="#e8e8e8"/><rect x="311" y="43" width="7" height="6" fill="#d0d0d0"/><rect x="319" y="34" width="8" height="15" fill="#dcdcdc"/><rect x="311.5" y="34.5" width="15" height="14" fill="none" stroke="#2a2a2a" stroke-width="0.6"/></g>
<path d="M331.9 39.699999999999996L335.5 33.099999999999994L339.1 39.699999999999996ZM331.9 43.3L335.5 49.9L339.1 43.3Z" fill="#a6a6a6"/>
<text x="352.5" y="47.5" fill="#000" letter-spacing="0" >UV Editing</text>
<path d="M500 41.3H512M506 35.3V47.3" stroke="#222" stroke-width="4.4"/><path d="M501 41.3H511M506 36.3V46.3" stroke="#fff" stroke-width="2.2"/>
<path d="M526 36.3L536 46.3M536 36.3L526 46.3" stroke="#222" stroke-width="4.2"/><path d="M526.5 36.8L535.5 45.8M535.5 36.8L526.5 45.8" stroke="#fff" stroke-width="2"/>
<clipPath id="c550_29"><rect x="550.2" y="29.5" width="239.0" height="24" rx="5"/></clipPath>
<g clip-path="url(#c550_29)">
<rect x="550.2" y="29.5" width="39.5" height="24" fill="url(#gdk)"/>
<rect x="589.7" y="29.5" width="149.5" height="24" fill="url(#glt)"/>
<rect x="739.2" y="29.5" width="25.0" height="24" fill="url(#gmd)"/>
<rect x="764.2" y="29.5" width="25.0" height="24" fill="url(#gmd)"/>
<rect x="589.2" y="29.5" width="1" height="24" fill="#2a2a2a" opacity="0.8"/>
<rect x="738.7" y="29.5" width="1" height="24" fill="#2a2a2a" opacity="0.8"/>
<rect x="763.7" y="29.5" width="1" height="24" fill="#2a2a2a" opacity="0.8"/>
</g>
<rect x="550.2" y="29.5" width="239.0" height="24" rx="5" fill="none" stroke="#2a2a2a" stroke-width="1" opacity="0.85"/>
<circle cx="559.5" cy="35" r="3" fill="#e8e860"/><rect x="566" y="34" width="7.5" height="12" rx="2.5" fill="#4a78c8"/><ellipse cx="569.7" cy="35" rx="3.7" ry="1.8" fill="#a8c4f0"/><circle cx="563" cy="45" r="4.6" fill="#e6e6e6"/><circle cx="564.5" cy="46.5" r="2.5" fill="#aaa" opacity="0.6"/>
<path d="M577.9 39.699999999999996L581.5 33.099999999999994L585.1 39.699999999999996ZM577.9 43.3L581.5 49.9L585.1 43.3Z" fill="#a6a6a6"/>
<text x="598.5" y="47.5" fill="#000" letter-spacing="0" >Scene</text>
<path d="M745.7 41.3H757.7M751.7 35.3V47.3" stroke="#222" stroke-width="4.4"/><path d="M746.7 41.3H756.7M751.7 36.3V46.3" stroke="#fff" stroke-width="2.2"/>
<path d="M771.7 36.3L781.7 46.3M781.7 36.3L771.7 46.3" stroke="#222" stroke-width="4.2"/><path d="M772.2 36.8L781.2 45.8M781.2 36.8L772.2 45.8" stroke="#fff" stroke-width="2"/>
<clipPath id="c809_29"><rect x="809.5" y="29.5" width="141.29999999999995" height="24" rx="5"/></clipPath>
<g clip-path="url(#c809_29)">
<rect x="809.5" y="29.5" width="141.29999999999995" height="24" fill="url(#gdk)"/>
</g>
<rect x="809.5" y="29.5" width="141.29999999999995" height="24" rx="5" fill="none" stroke="#2a2a2a" stroke-width="1" opacity="0.85"/>
<text x="818.5" y="47.5" fill="#fff" letter-spacing="-0.12" >Cycles Render</text>
<path d="M939.1999999999999 39.699999999999996L942.8 33.099999999999994L946.4 39.699999999999996ZM939.1999999999999 43.3L942.8 49.9L946.4 43.3Z" fill="#a6a6a6"/>
<g transform="translate(983,42.3) scale(1.02)"><path d="M-9 2.5L-1 -3.5M-6 -3.5H1.5M-3.5 -7L2 -3" stroke="#e87d0d" stroke-width="2.2" stroke-linecap="round" fill="none"/><ellipse cx="2" cy="1" rx="6.6" ry="5.8" fill="#f5922a"/><circle cx="2.3" cy="0.6" r="3.6" fill="#fff"/><circle cx="2.3" cy="0.6" r="2.2" fill="#2b5fb4"/></g>
<text x="1005" y="47.5" fill="#000" letter-spacing="0" textLength="751" lengthAdjust="spacing">v2.79 | Verts:39,598/39,598 | Edges:79,184/79,184 | Faces:39,592/39,592 | Tris:79,184 | Mem:128.47M | rotating_part</text>
<path d="M962.5 59L975.5 72M966.5 59L975.5 68M970.5 59L975.5 64" stroke="#8a8a8a" stroke-width="1"/>
<path d="M1907 59L1920 72M1911 59L1920 68M1915 59L1920 64" stroke="#8a8a8a" stroke-width="1"/>
<path d="M1907 24L1920 37M1911 24L1920 33M1915 24L1920 29" stroke="#8a8a8a" stroke-width="1"/>
<path d="M978 117L991 130M978 121L987 130" stroke="#8a8a8a" stroke-width="1" opacity="0"/>
<path d="M980 59L993 72" stroke="#8a8a8a" stroke-width="1" opacity="0"/>
<rect x="-2" y="86" width="14" height="16" rx="4" fill="#2e2e2e" opacity="0.85"/><path d="M1.5 94H8.5M5.0 90.5V97.5" stroke="#8c8c8c" stroke-width="2"/>
<rect x="957.5" y="86" width="18" height="16" rx="4" fill="#2e2e2e" opacity="0.85"/><path d="M963.0 94H970.0M966.5 90.5V97.5" stroke="#8c8c8c" stroke-width="2"/>
<rect x="977.5" y="86" width="16" height="16" rx="4" fill="#2e2e2e" opacity="0.85"/><path d="M982.0 94H989.0M985.5 90.5V97.5" stroke="#8c8c8c" stroke-width="2"/>
<rect x="1899" y="86" width="22" height="16" rx="4" fill="#2e2e2e" opacity="0.85"/><path d="M1906.5 94H1913.5M1910.0 90.5V97.5" stroke="#8c8c8c" stroke-width="2"/>
<path d="M0 1023L14 1037M0 1027L10 1037M0 1031L6 1037" stroke="#9a9a9a" stroke-width="1"/>
<clipPath id="c11_1012"><rect x="11.5" y="1012.5" width="39.0" height="24" rx="5"/></clipPath>
<g clip-path="url(#c11_1012)">
<rect x="11.5" y="1012.5" width="39.0" height="24" fill="url(#gdk)"/>
</g>
<rect x="11.5" y="1012.5" width="39.0" height="24" rx="5" fill="none" stroke="#2a2a2a" stroke-width="1" opacity="0.85"/>
<rect x="18" y="1017" width="17" height="15" rx="1.5" fill="#f0f0f0"/><rect x="19" y="1018" width="15" height="5" fill="#e8a0a0"/><rect x="19" y="1023" width="15" height="2" fill="#222"/><rect x="19" y="1026" width="15" height="3" fill="#7a7ab8"/><rect x="26" y="1019" width="3" height="3" fill="#fff"/>
<path d="M38.9 1022.9L42.5 1016.3L46.1 1022.9ZM38.9 1026.5L42.5 1033.1L46.1 1026.5Z" fill="#a6a6a6"/>
<text x="65.5" y="1030.6" fill="#000" letter-spacing="0" >View</text>
<text x="121.8" y="1030.6" fill="#000" letter-spacing="0" >Select</text>
<text x="185.8" y="1030.6" fill="#000" letter-spacing="0" >Image</text>
<text x="251.5" y="1030.6" fill="#000" letter-spacing="0" >UVs</text>
<clipPath id="c294_1012"><rect x="294.4" y="1012.5" width="188.70000000000005" height="24" rx="5"/></clipPath>
<g clip-path="url(#c294_1012)">
<rect x="294.4" y="1012.5" width="39.30000000000001" height="24" fill="url(#gdk)"/>
<rect x="333.7" y="1012.5" width="74.69999999999999" height="24" fill="url(#glt)"/>
<rect x="408.4" y="1012.5" width="74.70000000000005" height="24" fill="url(#glt)"/>
<rect x="333.2" y="1012.5" width="1" height="24" fill="#2a2a2a" opacity="0.8"/>
<rect x="407.9" y="1012.5" width="1" height="24" fill="#2a2a2a" opacity="0.8"/>
</g>
<rect x="294.4" y="1012.5" width="188.70000000000005" height="24" rx="5" fill="none" stroke="#2a2a2a" stroke-width="1" opacity="0.85"/>
<path d="M305.5 1016.5H316.5V1032.5H302.5V1019.5Z" fill="#f4f4f4" stroke="#333" stroke-width="0.7"/><rect x="304.0" y="1019.0" width="11" height="5.5" fill="#e8b0b0"/><rect x="304.0" y="1024.5" width="11" height="2" fill="#222"/><rect x="304.0" y="1026.5" width="11" height="4.5" fill="#8a8ac8"/>
<path d="M322.4 1022.9L326 1016.3L329.6 1022.9ZM322.4 1026.5L326 1033.1L329.6 1026.5Z" fill="#7a7a7a"/>
<path d="M341.5 1024.5H353.5M347.5 1018.5V1030.5" stroke="#222" stroke-width="4.4"/><path d="M342.5 1024.5H352.5M347.5 1019.5V1029.5" stroke="#fff" stroke-width="2.2"/>
<text x="366.2" y="1030.6" fill="#000" letter-spacing="0" >New</text>
<path d="M414 1020H421V1017H430V1032H414Z" fill="#e6dfa0" stroke="#4a4420" stroke-width="0.9"/><rect x="422" y="1016.5" width="8" height="6" fill="#f4f4f4" stroke="#444" stroke-width="0.7"/><path d="M414 1025H431V1032H414Z" fill="#d8d090" stroke="#4a4420" stroke-width="0.8"/>
<text x="438" y="1030.6" fill="#000" letter-spacing="0" >Open</text>
<clipPath id="c491_1012"><rect x="491" y="1012.5" width="23" height="24" rx="5"/></clipPath>
<g clip-path="url(#c491_1012)">
<rect x="491" y="1012.5" width="23" height="24" fill="url(#gmd)"/>
</g>
<rect x="491" y="1012.5" width="23" height="24" rx="5" fill="none" stroke="#2a2a2a" stroke-width="1" opacity="0.85"/>
<path d="M496 1033L503 1026" stroke="#ddd" stroke-width="1.6"/><path d="M500 1022L508 1030L511 1026L509 1021L505 1018Z" fill="#e8e8e8" stroke="#333" stroke-width="0.9"/>
<clipPath id="c521_1012"><rect x="521" y="1012.5" width="83.39999999999998" height="24" rx="5"/></clipPath>
<g clip-path="url(#c521_1012)">
<rect x="521" y="1012.5" width="83.39999999999998" height="24" fill="url(#gdk)"/>
</g>
<rect x="521" y="1012.5" width="83.39999999999998" height="24" rx="5" fill="none" stroke="#2a2a2a" stroke-width="1" opacity="0.85"/>
<path d="M531.5 1016.5H542.5V1032.5H528.5V1019.5Z" fill="#f4f4f4" stroke="#333" stroke-width="0.7"/><rect x="530.0" y="1019.0" width="11" height="5.5" fill="#e8b0b0"/><rect x="530.0" y="1024.5" width="11" height="2" fill="#222"/><rect x="530.0" y="1026.5" width="11" height="4.5" fill="#8a8ac8"/>
<text x="551" y="1030.6" fill="#fff" letter-spacing="0" >View</text>
<path d="M593.4 1022.9L597 1016.3L600.6 1022.9ZM593.4 1026.5L597 1033.1L600.6 1026.5Z" fill="#a6a6a6"/>
<clipPath id="c611_1012"><rect x="611.3" y="1012.5" width="39.5" height="24" rx="5"/></clipPath>
<g clip-path="url(#c611_1012)">
<rect x="611.3" y="1012.5" width="39.5" height="24" fill="url(#gdk)"/>
</g>
<rect x="611.3" y="1012.5" width="39.5" height="24" rx="5" fill="none" stroke="#2a2a2a" stroke-width="1" opacity="0.85"/>
<path d="M618 1021V1017H622M636 1017H640V1021M640 1028V1032H636M622 1032H618V1028" stroke="#eee" stroke-width="1.5" fill="none"/><circle cx="629" cy="1024.5" r="3.6" fill="#4a7ac0"/><circle cx="629" cy="1024.5" r="1.3" fill="#fff"/>
<path d="M639.4 1022.9L643 1016.3L646.6 1022.9ZM639.4 1026.5L643 1033.1L646.6 1026.5Z" fill="#a6a6a6"/>
<clipPath id="c657_1012"><rect x="657.8" y="1012.5" width="23.5" height="24" rx="5"/></clipPath>
<g clip-path="url(#c657_1012)">
<rect x="657.8" y="1012.5" width="23.5" height="24" fill="url(#gmd)"/>
</g>
<rect x="657.8" y="1012.5" width="23.5" height="24" rx="5" fill="none" stroke="#2a2a2a" stroke-width="1" opacity="0.85"/>
<path d="M663 1019L669 1016L675 1019V1028L669 1031L663 1028Z" fill="#d8d8d8" stroke="#666" stroke-width="0.7"/><rect x="660.5" y="1016.5" width="3.4" height="3.4" fill="#ffb060" stroke="#703800" stroke-width="0.6"/><rect x="660.5" y="1026.5" width="3.4" height="3.4" fill="#ffb060" stroke="#703800" stroke-width="0.6"/><path d="M671 1021L671 1033L674 1030L676.5 1035L678.5 1034L676 1029.5L680 1029.5Z" fill="#fff" stroke="#000" stroke-width="0.8"/>
<clipPath id="c688_1012"><rect x="688.3" y="1012.5" width="99.20000000000005" height="24" rx="5"/></clipPath>
<g clip-path="url(#c688_1012)">
<rect x="688.3" y="1012.5" width="24.0" height="24" fill="url(#gbl)"/>
<rect x="712.3" y="1012.5" width="25.200000000000045" height="24" fill="url(#gdk)"/>
<rect x="737.5" y="1012.5" width="25.0" height="24" fill="url(#gdk)"/>
<rect x="762.5" y="1012.5" width="25.0" height="24" fill="url(#gdk)"/>
<rect x="711.8" y="1012.5" width="1" height="24" fill="#2a2a2a" opacity="0.8"/>
<rect x="737.0" y="1012.5" width="1" height="24" fill="#2a2a2a" opacity="0.8"/>
<rect x="762.0" y="1012.5" width="1" height="24" fill="#2a2a2a" opacity="0.8"/>
</g>
<rect x="688.3" y="1012.5" width="99.20000000000005" height="24" rx="5" fill="none" stroke="#2a2a2a" stroke-width="1" opacity="0.85"/>
<rect x="693.5" y="1017.5" width="13" height="13" fill="#9ab4e0" stroke="#dfe8f8" stroke-width="0.8"/>
<rect x="691.3" y="1016" width="3.6" height="3.6" fill="#ffa040" stroke="#5a2800" stroke-width="0.7"/>
<rect x="703.3" y="1016" width="3.6" height="3.6" fill="#ffa040" stroke="#5a2800" stroke-width="0.7"/>
<rect x="691.3" y="1027" width="3.6" height="3.6" fill="#ffa040" stroke="#5a2800" stroke-width="0.7"/>
<rect x="703.3" y="1027" width="3.6" height="3.6" fill="#ffa040" stroke="#5a2800" stroke-width="0.7"/>
<path d="M719 1016V1031M724.5 1016V1031M730 1016V1031M717 1028H733" stroke="#8a6a3a" stroke-width="1.4"/>
<rect x="742" y="1017" width="9" height="9" fill="#a87a44"/><path d="M742 1026V1032H758V1017H751M751 1026H758M751 1026V1032" stroke="#6a6a6a" stroke-width="1" fill="none"/>
<rect x="775" y="1016" width="8" height="16" fill="#a87a44"/><rect x="767" y="1018" width="6" height="13" fill="#6a6a6a"/>
<clipPath id="c794_1012"><rect x="794" y="1012.5" width="39.39999999999998" height="24" rx="5"/></clipPath>
<g clip-path="url(#c794_1012)">
<rect x="794" y="1012.5" width="39.39999999999998" height="24" fill="url(#gdk)"/>
</g>
<rect x="794" y="1012.5" width="39.39999999999998" height="24" rx="5" fill="none" stroke="#2a2a2a" stroke-width="1" opacity="0.85"/>
<rect x="800.5" y="1016.5" width="16" height="15" fill="none" stroke="#eee" stroke-width="1" stroke-dasharray="1 1.3"/><circle cx="809" cy="1021" r="1.9" fill="#fff"/><circle cx="806" cy="1026.5" r="1.9" fill="#fff"/><circle cx="811.5" cy="1027" r="1.9" fill="#fff"/>
<path d="M822.4 1022.9L826 1016.3L829.6 1022.9ZM822.4 1026.5L826 1033.1L829.6 1026.5Z" fill="#a6a6a6"/>
<clipPath id="c840_1012"><rect x="840.2" y="1012.5" width="39.5" height="24" rx="5"/></clipPath>
<g clip-path="url(#c840_1012)">
<rect x="840.2" y="1012.5" width="39.5" height="24" fill="url(#gdk)"/>
</g>
<rect x="840.2" y="1012.5" width="39.5" height="24" rx="5" fill="none" stroke="#2a2a2a" stroke-width="1" opacity="0.85"/>
<circle cx="855.5" cy="1024.5" r="5" fill="#6a6a6a" stroke="#808080" stroke-width="2"/>
<path d="M868.4 1022.9L872 1016.3L875.6 1022.9ZM868.4 1026.5L872 1033.1L875.6 1026.5Z" fill="#a6a6a6"/>
<clipPath id="c886_1012"><rect x="886.3" y="1012.5" width="64.0" height="24" rx="5"/></clipPath>
<g clip-path="url(#c886_1012)">
<rect x="886.3" y="1012.5" width="23.700000000000045" height="24" fill="url(#gmd)"/>
<rect x="910" y="1012.5" width="40.299999999999955" height="24" fill="url(#gdk)"/>
<rect x="909.5" y="1012.5" width="1" height="24" fill="#2a2a2a" opacity="0.8"/>
</g>
<rect x="886.3" y="1012.5" width="64.0" height="24" rx="5" fill="none" stroke="#2a2a2a" stroke-width="1" opacity="0.85"/>
<path d="M892 1023.5L898 1018.0A5.2 5.2 0 0 1 905 1025.5L899.5 1031.0" fill="none" stroke="#d8d8d8" stroke-width="3.2"/><path d="M892 1023.5L898 1018.0A5.2 5.2 0 0 1 905 1025.5L899.5 1031.0" fill="none" stroke="#8a8a8a" stroke-width="1.2"/>
<path d="M917 1020.0V1029.0M921 1021.5V1027.5M929 1021.5V1027.5M933 1020.0V1029.0M917 1024.5H933" stroke="#c8c8c8" stroke-width="1.2"/><path d="M925 1018.5V1030.5" stroke="#3a6ac8" stroke-width="3.5"/><path d="M925 1019.0V1030.0" stroke="#e8f0ff" stroke-width="1.5"/>
<path d="M939.4 1022.9L943 1016.3L946.6 1022.9ZM939.4 1026.5L943 1033.1L946.6 1026.5Z" fill="#a6a6a6"/>
<clipPath id="c958_1012"><rect x="958" y="1012.5" width="32" height="24" rx="5"/></clipPath>
<g clip-path="url(#c958_1012)">
<rect x="958" y="1012.5" width="32" height="24" fill="url(#gmd)"/>
</g>
<rect x="958" y="1012.5" width="32" height="24" rx="5" fill="none" stroke="#2a2a2a" stroke-width="1" opacity="0.85"/>
<circle cx="972" cy="1024" r="6.5" fill="#eee" stroke="#555" stroke-width="0.8"/><path d="M972 1017.5V1030.5M965.5 1024H978.5" stroke="#333" stroke-width="1.2"/>
<rect x="976" y="1008" width="2" height="29" fill="#111"/><rect x="978" y="1008" width="20" height="29" fill="#727272"/>
<path d="M978 1022L993 1037M978 1026L989 1037" stroke="#9a9a9a" stroke-width="1"/>
<clipPath id="c988_1012"><rect x="988.6" y="1012.5" width="39.10000000000002" height="24" rx="5"/></clipPath>
<g clip-path="url(#c988_1012)">
<rect x="988.6" y="1012.5" width="39.10000000000002" height="24" fill="url(#gdk)"/>
</g>
<rect x="988.6" y="1012.5" width="39.10000000000002" height="24" rx="5" fill="none" stroke="#2a2a2a" stroke-width="1" opacity="0.85"/>
<path d="M997 1018.5L1005.5 1015.5L1014 1018.5V1028.5L1005.5 1033L997 1028.5Z" fill="#d8d8d8"/><path d="M1005.5 1021.5L1014 1018.5V1028.5L1005.5 1033Z" fill="#8a8a8a"/><path d="M997 1018.5L1005.5 1021.5L1014 1018.5L1005.5 1015.5Z" fill="#f4f4f4"/>
<path d="M1015.9 1022.9L1019.5 1016.3L1023.1 1022.9ZM1015.9 1026.5L1019.5 1033.1L1023.1 1026.5Z" fill="#a6a6a6"/>
<text x="1043" y="1030.6" fill="#000" letter-spacing="0" >View</text>
<text x="1098.6" y="1030.6" fill="#000" letter-spacing="0" >Select</text>
<text x="1163" y="1030.6" fill="#000" letter-spacing="0" >Add</text>
<text x="1212.5" y="1030.6" fill="#000" letter-spacing="0" >Mesh</text>
<clipPath id="c1264_1012"><rect x="1264.4" y="1012.5" width="125.0" height="24" rx="5"/></clipPath>
<g clip-path="url(#c1264_1012)">
<rect x="1264.4" y="1012.5" width="125.0" height="24" fill="url(#gdk)"/>
</g>
<rect x="1264.4" y="1012.5" width="125.0" height="24" rx="5" fill="none" stroke="#2a2a2a" stroke-width="1" opacity="0.85"/>
<path d="M1274 1019L1281 1016L1288 1019V1028L1281 1032L1274 1028Z" fill="#b0b0b0" stroke="#555" stroke-width="0.6"/>
<rect x="1272.5" y="1017" width="3.4" height="3.4" fill="#ffc060" stroke="#5a2800" stroke-width="0.7"/>
<rect x="1279.5" y="1019.5" width="3.4" height="3.4" fill="#ffc060" stroke="#5a2800" stroke-width="0.7"/>
<rect x="1272.5" y="1027" width="3.4" height="3.4" fill="#ffc060" stroke="#5a2800" stroke-width="0.7"/>
<rect x="1279.5" y="1030" width="3.4" height="3.4" fill="#ffc060" stroke="#5a2800" stroke-width="0.7"/>
<text x="1294" y="1030.6" fill="#fff" letter-spacing="-0.28" >Edit Mode</text>
<path d="M1377.9 1022.9L1381.5 1016.3L1385.1 1022.9ZM1377.9 1026.5L1381.5 1033.1L1385.1 1026.5Z" fill="#a6a6a6"/>
<clipPath id="c1396_1012"><rect x="1396" y="1012.5" width="40" height="24" rx="5"/></clipPath>
<g clip-path="url(#c1396_1012)">
<rect x="1396" y="1012.5" width="40" height="24" fill="url(#gdk)"/>
</g>
<rect x="1396" y="1012.5" width="40" height="24" rx="5" fill="none" stroke="#2a2a2a" stroke-width="1" opacity="0.85"/>
<circle cx="1411" cy="1024.5" r="7.3" fill="#f2f2f2"/><circle cx="1413" cy="1026.5" r="4" fill="#d0d0d0" opacity="0.5"/>
<path d="M1424.4 1022.9L1428 1016.3L1431.6 1022.9ZM1424.4 1026.5L1428 1033.1L1431.6 1026.5Z" fill="#a6a6a6"/>
<clipPath id="c1442_1012"><rect x="1442.2" y="1012.5" width="39.299999999999955" height="24" rx="5"/></clipPath>
<g clip-path="url(#c1442_1012)">
<rect x="1442.2" y="1012.5" width="39.299999999999955" height="24" fill="url(#gdk)"/>
</g>
<rect x="1442.2" y="1012.5" width="39.299999999999955" height="24" rx="5" fill="none" stroke="#2a2a2a" stroke-width="1" opacity="0.85"/>
<circle cx="1454.5" cy="1021.5" r="5.2" fill="#dfe8e8"/><circle cx="1460.5" cy="1027.5" r="5.2" fill="#e8f0f0"/><rect x="1455" y="1022" width="4.5" height="4.5" fill="#fff" stroke="#2a5ab0" stroke-width="1.2"/>
<path d="M1469.9 1022.9L1473.5 1016.3L1477.1 1022.9ZM1469.9 1026.5L1473.5 1033.1L1477.1 1026.5Z" fill="#a6a6a6"/>
<clipPath id="c1487_1012"><rect x="1487.8" y="1012.5" width="189.9000000000001" height="24" rx="5"/></clipPath>
<g clip-path="url(#c1487_1012)">
<rect x="1487.8" y="1012.5" width="24.5" height="24" fill="url(#gdk)"/>
<rect x="1512.3" y="1012.5" width="25.0" height="24" fill="url(#gbl)"/>
<rect x="1537.3" y="1012.5" width="25.0" height="24" fill="url(#gdk)"/>
<rect x="1562.3" y="1012.5" width="25.200000000000045" height="24" fill="url(#gdk)"/>
<rect x="1587.5" y="1012.5" width="90.20000000000005" height="24" fill="url(#gdk)"/>
<rect x="1511.8" y="1012.5" width="1" height="24" fill="#2a2a2a" opacity="0.8"/>
<rect x="1536.8" y="1012.5" width="1" height="24" fill="#2a2a2a" opacity="0.8"/>
<rect x="1561.8" y="1012.5" width="1" height="24" fill="#2a2a2a" opacity="0.8"/>
<rect x="1587.0" y="1012.5" width="1" height="24" fill="#2a2a2a" opacity="0.8"/>
</g>
<rect x="1487.8" y="1012.5" width="189.9000000000001" height="24" rx="5" fill="none" stroke="#2a2a2a" stroke-width="1" opacity="0.85"/>
<path d="M1500.5 1028V1016" stroke="#5a8ae0" stroke-width="2.6"/><path d="M1500.5 1027.5L1492.5 1032.5" stroke="#e04a3a" stroke-width="2.6"/><path d="M1500.5 1027.5L1508.5 1032.5" stroke="#6ac83a" stroke-width="2.6"/><circle cx="1492.5" cy="1032.5" r="1.4" fill="#fff"/><circle cx="1508.5" cy="1032.5" r="1.4" fill="#fff"/>
<path d="M1517 1032L1527 1022" stroke="#1a3a7a" stroke-width="4"/><path d="M1517 1032L1527 1022" stroke="#7aa8f0" stroke-width="2.2"/><path d="M1522 1017.5L1532.5 1016.5L1531 1027Z" fill="#7aa8f0" stroke="#1a3a7a" stroke-width="0.9"/>
<path d="M1543 1031Q1545 1019 1557 1017.5" stroke="#5a78b0" stroke-width="2.6" fill="none"/>
<path d="M1568 1031L1577 1022" stroke="#5a78b0" stroke-width="2.4"/><rect x="1576" y="1016.5" width="6.5" height="6.5" fill="#5a78b0"/>
<text x="1596.8" y="1030.6" fill="#fff" letter-spacing="-0.3" >Global</text>
<path d="M1665.9 1022.9L1669.5 1016.3L1673.1 1022.9ZM1665.9 1026.5L1669.5 1033.1L1673.1 1026.5Z" fill="#a6a6a6"/>
<clipPath id="c1684_1012"><rect x="1684.4" y="1012.5" width="74.09999999999991" height="24" rx="5"/></clipPath>
<g clip-path="url(#c1684_1012)">
<rect x="1684.4" y="1012.5" width="24.09999999999991" height="24" fill="url(#glt)"/>
<rect x="1708.5" y="1012.5" width="25.0" height="24" fill="url(#gsel)"/>
<rect x="1733.5" y="1012.5" width="25.0" height="24" fill="url(#glt)"/>
<rect x="1708.0" y="1012.5" width="1" height="24" fill="#2a2a2a" opacity="0.8"/>
<rect x="1733.0" y="1012.5" width="1" height="24" fill="#2a2a2a" opacity="0.8"/>
</g>
<rect x="1684.4" y="1012.5" width="74.09999999999991" height="24" rx="5" fill="none" stroke="#2a2a2a" stroke-width="1" opacity="0.85"/>
<path d="M1690.5 1020.5L1697 1017.5L1703.5 1020.5V1029.0L1697 1032.5L1690.5 1029.0Z" fill="#d0d0d0" stroke="#8a8a8a" stroke-width="0.6"/><path d="M1697 1023.5L1703.5 1020.5V1029.0L1697 1032.5Z" fill="#000" opacity="0.13"/>
<circle cx="1690" cy="1019.5" r="2" fill="#e8d0a0" stroke="#a06a20" stroke-width="0.8"/>
<path d="M1715.5 1020.5L1722 1017.5L1728.5 1020.5V1029.0L1722 1032.5L1715.5 1029.0Z" fill="#c4c8c8" stroke="#8a8a8a" stroke-width="0.6"/><path d="M1722 1023.5L1728.5 1020.5V1029.0L1722 1032.5Z" fill="#000" opacity="0.13"/>
<path d="M1714.5 1019.5V1029" stroke="#f0a040" stroke-width="2.2"/>
<path d="M1740.0 1020.5L1746.5 1017.5L1753.0 1020.5V1029.0L1746.5 1032.5L1740.0 1029.0Z" fill="#c8c8c8" stroke="#8a8a8a" stroke-width="0.6"/><path d="M1746.5 1023.5L1753.0 1020.5V1029.0L1746.5 1032.5Z" fill="#000" opacity="0.13"/>
<path d="M1740 1020.5L1746.5 1023.5V1032.5L1740 1029Z" fill="#f0b070"/>
<clipPath id="c1765_1012"><rect x="1765.6" y="1012.5" width="23.800000000000182" height="24" rx="5"/></clipPath>
<g clip-path="url(#c1765_1012)">
<rect x="1765.6" y="1012.5" width="23.800000000000182" height="24" fill="url(#gdk)"/>
</g>
<rect x="1765.6" y="1012.5" width="23.800000000000182" height="24" rx="5" fill="none" stroke="#2a2a2a" stroke-width="1" opacity="0.85"/>
<rect x="1770" y="1022" width="10" height="10" fill="#d8d8d8"/><path d="M1775 1017H1785V1027" stroke="#999" stroke-width="1" fill="none" stroke-dasharray="1.5 1.5"/>
<rect x="1768.3" y="1020.3" width="3.4" height="3.4" fill="#fff" stroke="#000" stroke-width="0.7"/>
<rect x="1778.3" y="1020.3" width="3.4" height="3.4" fill="#fff" stroke="#000" stroke-width="0.7"/>
<rect x="1768.3" y="1030.3" width="3.4" height="3.4" fill="#fff" stroke="#000" stroke-width="0.7"/>
<rect x="1778.3" y="1030.3" width="3.4" height="3.4" fill="#fff" stroke="#000" stroke-width="0.7"/>
<circle cx="1775" cy="1017" r="1.5" fill="#ddd" stroke="#333" stroke-width="0.5"/>
<circle cx="1785" cy="1017" r="1.5" fill="#ddd" stroke="#333" stroke-width="0.5"/>
<circle cx="1785" cy="1027" r="1.5" fill="#ddd" stroke="#333" stroke-width="0.5"/>
<clipPath id="c1796_1012"><rect x="1796.3" y="1012.5" width="39.700000000000045" height="24" rx="5"/></clipPath>
<g clip-path="url(#c1796_1012)">
<rect x="1796.3" y="1012.5" width="39.700000000000045" height="24" fill="url(#gdk)"/>
</g>
<rect x="1796.3" y="1012.5" width="39.700000000000045" height="24" rx="5" fill="none" stroke="#2a2a2a" stroke-width="1" opacity="0.85"/>
<circle cx="1810.5" cy="1024.5" r="5" fill="#6a6a6a" stroke="#808080" stroke-width="2"/>
<path d="M1824.4 1022.9L1828 1016.3L1831.6 1022.9ZM1824.4 1026.5L1828 1033.1L1831.6 1026.5Z" fill="#a6a6a6"/>
<clipPath id="c1842_1012"><rect x="1842.5" y="1012.5" width="87.5" height="24" rx="5"/></clipPath>
<g clip-path="url(#c1842_1012)">
<rect x="1842.5" y="1012.5" width="23.799999999999955" height="24" fill="url(#gmd)"/>
<rect x="1866.3" y="1012.5" width="40.0" height="24" fill="url(#gdk)"/>
<rect x="1906.3" y="1012.5" width="23.700000000000045" height="24" fill="url(#gmd)"/>
<rect x="1865.8" y="1012.5" width="1" height="24" fill="#2a2a2a" opacity="0.8"/>
<rect x="1905.8" y="1012.5" width="1" height="24" fill="#2a2a2a" opacity="0.8"/>
</g>
<rect x="1842.5" y="1012.5" width="87.5" height="24" rx="5" fill="none" stroke="#2a2a2a" stroke-width="1" opacity="0.85"/>
<path d="M1848.5 1023.5L1854.5 1018.0A5.2 5.2 0 0 1 1861.5 1025.5L1856.0 1031.0" fill="none" stroke="#d8d8d8" stroke-width="3.2"/><path d="M1848.5 1023.5L1854.5 1018.0A5.2 5.2 0 0 1 1861.5 1025.5L1856.0 1031.0" fill="none" stroke="#8a8a8a" stroke-width="1.2"/>
<path d="M1873 1020.0V1029.0M1877 1021.5V1027.5M1885 1021.5V1027.5M1889 1020.0V1029.0M1873 1024.5H1889" stroke="#c8c8c8" stroke-width="1.2"/><path d="M1881 1018.5V1030.5" stroke="#3a6ac8" stroke-width="3.5"/><path d="M1881 1019.0V1030.0" stroke="#e8f0ff" stroke-width="1.5"/>
<path d="M1895.4 1022.9L1899 1016.3L1902.6 1022.9ZM1895.4 1026.5L1899 1033.1L1902.6 1026.5Z" fill="#a6a6a6"/>
<circle cx="1918" cy="1020" r="4" fill="#fff" stroke="#3a6ac8" stroke-width="2"/><path d="M1912 1031H1920M1916 1027V1036" stroke="#222" stroke-width="1"/>
</svg>
</body></html>
